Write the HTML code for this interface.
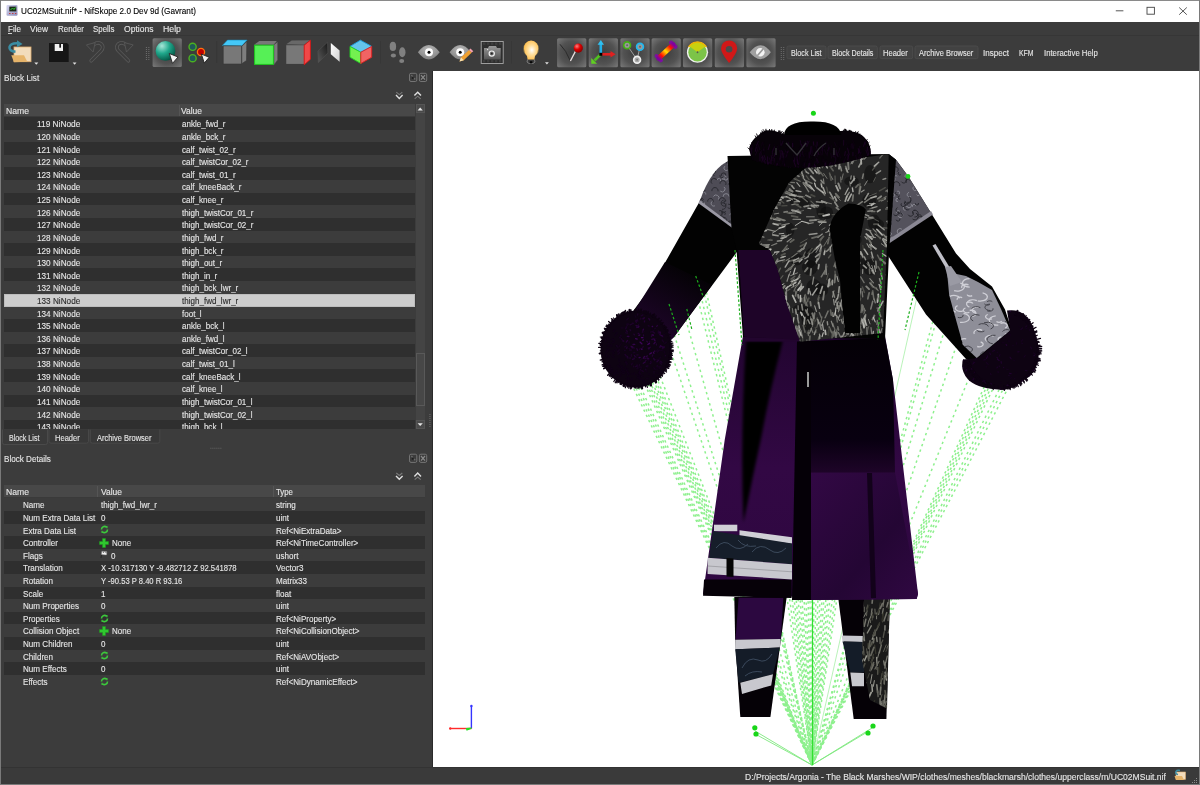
<!DOCTYPE html>
<html><head><meta charset="utf-8">
<style>
*{margin:0;padding:0;box-sizing:border-box}
html,body{width:1200px;height:785px;overflow:hidden;background:#3c3c3c;font-family:"Liberation Sans",sans-serif;position:relative}
.a{position:absolute}
.t{position:absolute;white-space:nowrap;transform-origin:0 0;-webkit-text-stroke:0.12px currentColor}
svg{position:absolute;overflow:visible}
</style></head><body>
<div class="a" style="left:0.00px;top:0.00px;width:1200.00px;height:22.00px;background:#ffffff;"></div>
<svg style="left:0;top:0" width="30" height="22">
<defs><linearGradient id="tig" x1="0" y1="0" x2="1" y2="1"><stop offset="0" stop-color="#d8d8f0"/><stop offset="1" stop-color="#8a8ab8"/></linearGradient></defs>
<path d="M6.5 6 Q6.5 5 7.5 5 L16.5 5 Q17.5 5 17.5 6 L17.5 14.5 Q17.5 15.8 16.3 15.8 L7.6 15.8 Q6.5 15.8 6.5 14.5 Z" fill="url(#tig)"/>
<rect x="9.3" y="6.6" width="7" height="4.8" fill="#1a2a1a"/>
<path d="M10.5 10 L12.5 8 L14 9.5 L15.5 7.5" stroke="#30d030" stroke-width="1" fill="none"/>
<path d="M9 13.5 L10.5 13.5 M12 13.5 L13.5 13.5 M15 13.5 L16.3 13.5" stroke="#c04040" stroke-width="1"/>
</svg>
<div class="t" style="left:21.00px;top:6.92px;font-size:8.60px;line-height:8.60px;color:#000000;transform:scaleX(0.9510);">UC02MSuit.nif* - NifSkope 2.0 Dev 9d (Gavrant)</div>
<svg style="left:0;top:0" width="1200" height="22"><line x1="1115.8" y1="10.8" x2="1123.4" y2="10.8" stroke="#444" stroke-width="0.9"/><rect x="1147" y="7.3" width="7.4" height="6.9" fill="none" stroke="#444" stroke-width="0.9"/><path d="M1179.2 7.5 L1186.8 14.7 M1186.8 7.5 L1179.2 14.7" stroke="#444" stroke-width="0.9"/></svg>
<div class="t" style="left:7.50px;top:24.92px;font-size:8.60px;line-height:8.60px;color:#e6e6e6;transform:scaleX(0.9381);">File</div>
<div class="t" style="left:30.00px;top:24.92px;font-size:8.60px;line-height:8.60px;color:#e6e6e6;transform:scaleX(0.9738);">View</div>
<div class="t" style="left:57.50px;top:24.92px;font-size:8.60px;line-height:8.60px;color:#e6e6e6;transform:scaleX(0.9218);">Render</div>
<div class="t" style="left:93.00px;top:24.92px;font-size:8.60px;line-height:8.60px;color:#e6e6e6;transform:scaleX(0.9179);">Spells</div>
<div class="t" style="left:124.00px;top:24.92px;font-size:8.60px;line-height:8.60px;color:#e6e6e6;transform:scaleX(0.9954);">Options</div>
<div class="t" style="left:163.00px;top:24.92px;font-size:8.60px;line-height:8.60px;color:#e6e6e6;transform:scaleX(1.0177);">Help</div>
<div class="a" style="left:8.00px;top:32.60px;width:4.00px;height:0.80px;background:#d0d0d0;"></div>
<div class="a" style="left:1.00px;top:35.00px;width:1198.00px;height:1.00px;background:#363636;"></div>
<svg style="left:0;top:0" width="1200" height="72" viewBox="0 0 1200 72">
<defs>
<radialGradient id="btng" cx="0.5" cy="0.5" r="0.72">
 <stop offset="0" stop-color="#3e3e3e"/><stop offset="0.55" stop-color="#525252"/><stop offset="1" stop-color="#7c7c7c"/>
</radialGradient>
<radialGradient id="sph" cx="0.32" cy="0.25" r="0.85">
 <stop offset="0" stop-color="#a8e6d8"/><stop offset="0.45" stop-color="#20a88c"/><stop offset="1" stop-color="#004a3a"/>
</radialGradient>
<linearGradient id="pnl1" x1="1" y1="0" x2="0" y2="1"><stop offset="0" stop-color="#181818"/><stop offset="1" stop-color="#5a5a5a"/></linearGradient>
<linearGradient id="pnl2" x1="0" y1="0" x2="1" y2="1"><stop offset="0" stop-color="#ffffff"/><stop offset="1" stop-color="#d0d0d0"/></linearGradient>
<radialGradient id="eyeg" cx="0.5" cy="0.3" r="0.7"><stop offset="0" stop-color="#b8b8b8"/><stop offset="1" stop-color="#808080"/></radialGradient>
<linearGradient id="camg" x1="0" y1="0" x2="0" y2="1"><stop offset="0" stop-color="#9a9a9a"/><stop offset="1" stop-color="#555"/></linearGradient>
<radialGradient id="bulbg" cx="0.55" cy="0.5" r="0.55"><stop offset="0" stop-color="#ffffff"/><stop offset="0.45" stop-color="#ffe0a0"/><stop offset="1" stop-color="#ffc050"/></radialGradient>
<radialGradient id="balg" cx="0.35" cy="0.3" r="0.7"><stop offset="0" stop-color="#ff8080"/><stop offset="0.5" stop-color="#e00000"/><stop offset="1" stop-color="#900000"/></radialGradient>
<linearGradient id="boneg" x1="0" y1="1" x2="1" y2="0"><stop offset="0" stop-color="#8000a0"/><stop offset="0.2" stop-color="#ff1000"/><stop offset="0.5" stop-color="#ffe000"/><stop offset="0.8" stop-color="#ff1000"/><stop offset="1" stop-color="#8000a0"/></linearGradient>
</defs>
<rect x="14" y="47" width="17" height="14.7" fill="#f2dcbc" stroke="#e2b070" stroke-width="0.8"/>
<path d="M11.3 55.3 L24 55.3 L27.3 61.7 L14 62.3 Z" fill="#e6b46a"/>
<path d="M15.5 51.8 Q9 51 9.5 47 Q10.5 43 17.5 43.3" fill="none" stroke="#3a8ca2" stroke-width="2.6"/>
<path d="M17 40.2 L22.5 44 L17 47.2 Z" fill="#3a8ca2"/>
<path d="M34.3 62.6 L38.3 62.6 L36.3 64.8 Z" fill="#e0e0e0"/>
<path d="M49 43 L67 43 L68.7 44.8 L68.7 62 L49 62 Z" fill="#161616"/>
<rect x="54.7" y="44" width="8.3" height="7" fill="#efefef"/>
<rect x="59.3" y="44" width="1.7" height="3.7" fill="#161616"/>
<path d="M72.7 62.6 L76.5 62.6 L74.6 64.8 Z" fill="#e0e0e0"/>
<g fill="none" stroke-linecap="round" stroke-linejoin="round"><path d="M91.2 60.8 L101.2 50.8 Q104.2 47.3 101.5 44.2 Q98 41.2 93.8 44.6" stroke="#5a5a5a" stroke-width="3.6"/><path d="M91.2 60.8 L101.2 50.8 Q104.2 47.3 101.5 44.2 Q98 41.2 93.8 44.6" stroke="#3c3c3c" stroke-width="2"/><path d="M86.8 44.8 L95.2 42.6 L93.2 51.6 Z" fill="#3c3c3c" stroke="#5a5a5a" stroke-width="0.8"/><g transform="translate(219.6 0) scale(-1 1)"><path d="M91.2 60.8 L101.2 50.8 Q104.2 47.3 101.5 44.2 Q98 41.2 93.8 44.6" stroke="#5a5a5a" stroke-width="3.6"/><path d="M91.2 60.8 L101.2 50.8 Q104.2 47.3 101.5 44.2 Q98 41.2 93.8 44.6" stroke="#3c3c3c" stroke-width="2"/><path d="M86.8 44.8 L95.2 42.6 L93.2 51.6 Z" fill="#3c3c3c" stroke="#5a5a5a" stroke-width="0.8"/></g></g>
<rect x="145.9" y="47.0" width="0.9" height="0.9" fill="#7c7c7c"/><rect x="148.4" y="47.0" width="0.9" height="0.9" fill="#7c7c7c"/><rect x="145.9" y="49.0" width="0.9" height="0.9" fill="#7c7c7c"/><rect x="148.4" y="49.0" width="0.9" height="0.9" fill="#7c7c7c"/><rect x="145.9" y="51.0" width="0.9" height="0.9" fill="#7c7c7c"/><rect x="148.4" y="51.0" width="0.9" height="0.9" fill="#7c7c7c"/><rect x="145.9" y="53.0" width="0.9" height="0.9" fill="#7c7c7c"/><rect x="148.4" y="53.0" width="0.9" height="0.9" fill="#7c7c7c"/><rect x="145.9" y="55.0" width="0.9" height="0.9" fill="#7c7c7c"/><rect x="148.4" y="55.0" width="0.9" height="0.9" fill="#7c7c7c"/><rect x="145.9" y="57.0" width="0.9" height="0.9" fill="#7c7c7c"/><rect x="148.4" y="57.0" width="0.9" height="0.9" fill="#7c7c7c"/><rect x="145.9" y="59.0" width="0.9" height="0.9" fill="#7c7c7c"/><rect x="148.4" y="59.0" width="0.9" height="0.9" fill="#7c7c7c"/>
<rect x="152.6" y="38.3" width="29.2" height="28.6" rx="1.5" fill="url(#btng)"/>
<circle cx="165.5" cy="50.9" r="9.9" fill="url(#sph)"/>
<path d="M169.3 53.5 L178 57 L172.5 63.4 Z" fill="#f4f4f4" stroke="#202020" stroke-width="0.9" stroke-linejoin="round"/>
<circle cx="192.6" cy="46.8" r="3.6" fill="#1e5a58" stroke="#4cb020" stroke-width="1.4"/>
<circle cx="192.6" cy="58.2" r="3.6" fill="#1e5a58" stroke="#4cb020" stroke-width="1.4"/>
<circle cx="201" cy="52" r="3.6" fill="#c00000" stroke="#ff7010" stroke-width="1.3"/>
<path d="M201.3 54 L209.2 57.3 L204.3 63.1 Z" fill="#f0f0f0" stroke="#202020" stroke-width="0.9" stroke-linejoin="round"/>
<rect x="216.3" y="41" width="0.8" height="22" fill="#363636"/>
<path d="M222.3 45.6 L227.5 40.1 L247.1 40.1 L241.8 45.9 Z" fill="#44c8f8" stroke="#1a90c0" stroke-width="0.6"/>
<rect x="223.2" y="45.9" width="18.3" height="18.1" fill="#787878" stroke="#383838" stroke-width="0.6"/>
<path d="M241.8 46.2 L246.8 41.5 L246.5 60.5 L241.8 63.7 Z" fill="#7e7e7e" stroke="#383838" stroke-width="0.6"/>
<path d="M254.1 44.75 L259.3 41 L276.8 41 L273.9 44.75 Z" fill="#787878"/>
<path d="M273.9 44.75 L277.7 41.8 L277.7 59.9 L273.9 64.9 Z" fill="#7c7c7c" stroke="#404040" stroke-width="0.5"/>
<rect x="254.6" y="45.2" width="18.8" height="19.2" fill="#56f056" stroke="#1ec81e" stroke-width="1"/>
<path d="M286.25 44.3 L291.7 40.6 L310 40.2 L304.2 44.75 Z" fill="#686868"/>
<rect x="286.25" y="45.2" width="17.95" height="18.7" fill="#787878"/>
<path d="M304.2 45.2 L310.4 40.2 L310.4 59.3 L304.2 64.75 Z" fill="#f04848" stroke="#e01010" stroke-width="0.8"/>
<path d="M317.9 51 L327.5 42.25 L327.9 53 L318.3 62.7 Z" fill="url(#pnl1)" stroke="#505050" stroke-width="0.6"/>
<path d="M330.8 43 L339.6 50.6 L339.6 61.8 L330.8 54.3 Z" fill="url(#pnl2)"/>
<path d="M350 46.4 L360.4 40.2 L371.7 46.4 L360.8 52.25 Z" fill="#64c4ec" stroke="#1aa0e0" stroke-width="0.9"/>
<path d="M350 46.4 L360.8 52.25 L360.8 63.5 L350 57.25 Z" fill="#74f050" stroke="#20d020" stroke-width="0.9"/>
<path d="M360.8 52.25 L371.7 46.4 L371.7 57.25 L360.8 63.5 Z" fill="#f06464" stroke="#e02020" stroke-width="0.9"/>
<rect x="380.2" y="41" width="0.8" height="22.5" fill="#363636"/>
<g fill="#808080"><ellipse cx="392.9" cy="46.4" rx="3.2" ry="4.6"/><ellipse cx="393.4" cy="55.5" rx="2.6" ry="2"/><ellipse cx="402.3" cy="52.3" rx="3.2" ry="5"/><ellipse cx="401.7" cy="61" rx="2.5" ry="2"/></g>
<path d="M417.9 52.3 Q428.8 37.9 439.7 52.3 Q428.8 66.7 417.9 52.3 Z" fill="url(#eyeg)"/>
<circle cx="429" cy="52.3" r="4" fill="#fff"/><circle cx="429" cy="52.3" r="1.5" fill="#000"/>
<path d="M449.6 52.3 Q460.2 37.9 470.8 52.3 Q460.2 66.7 449.6 52.3 Z" fill="url(#eyeg)"/>
<circle cx="460.2" cy="52.3" r="4" fill="#fff"/><circle cx="460.2" cy="52.3" r="1.5" fill="#000"/>
<path d="M459.5 61.5 L461 57.5 L469 50 L471.8 52.6 L463.8 60.2 Z" fill="#f0a030"/>
<path d="M469 50 L470.5 48.6 L473.3 51.2 L471.8 52.6 Z" fill="#f4a0b0"/>
<path d="M459.5 61.5 L461 57.5 L463.8 60.2 Z" fill="#f8e0b0"/>
<rect x="481.2" y="41.5" width="22" height="22" fill="#2e2e2e" stroke="#a8a8a8" stroke-width="0.9"/>
<g fill="#3e3e3e"><rect x="483.0" y="42.5" width="2.4" height="2.4"/><rect x="483.0" y="60" width="2.4" height="2.4"/><rect x="487.0" y="42.5" width="2.4" height="2.4"/><rect x="487.0" y="60" width="2.4" height="2.4"/><rect x="491.0" y="42.5" width="2.4" height="2.4"/><rect x="491.0" y="60" width="2.4" height="2.4"/><rect x="495.0" y="42.5" width="2.4" height="2.4"/><rect x="495.0" y="60" width="2.4" height="2.4"/><rect x="499.0" y="42.5" width="2.4" height="2.4"/><rect x="499.0" y="60" width="2.4" height="2.4"/></g>
<path d="M484 48 L488 48 L489 46 L496 46 L497 48 L500.7 48 L500.7 59.5 L484 59.5 Z" fill="url(#camg)"/>
<circle cx="491.75" cy="53.6" r="2.6" fill="none" stroke="#f0f0f0" stroke-width="1.2"/><circle cx="491.75" cy="53.6" r="1" fill="#222"/>
<rect x="487" y="49" width="1.2" height="1.2" fill="#ddd"/>
<rect x="511" y="41" width="0.8" height="22.5" fill="#363636"/>
<path d="M527.6 59.5 L527 62 L529 63.5 L533 63.5 L535 62 L534.4 59.5" fill="none" stroke="#8a8a8a" stroke-width="0.8"/>
<rect x="529.8" y="61.2" width="2.5" height="2.2" fill="#050505"/>
<circle cx="531.1" cy="49" r="8" fill="#ffd060" opacity="0.35"/>
<path d="M524 49 A7.2 7.2 0 1 1 538.2 49 Q538 53 535 56 L534.4 59.5 L527.6 59.5 L527 56 Q524.2 53 524 49 Z" fill="url(#bulbg)"/>
<path d="M545 62.3 L548.8 62.3 L546.9 64.5 Z" fill="#e0e0e0"/>
<rect x="557.10" y="38.3" width="29.2" height="29" rx="1.5" fill="url(#btng)"/>
<rect x="588.75" y="38.3" width="29.2" height="29" rx="1.5" fill="url(#btng)"/>
<rect x="620.40" y="38.3" width="29.2" height="29" rx="1.5" fill="url(#btng)"/>
<rect x="651.60" y="38.3" width="29.2" height="29" rx="1.5" fill="url(#btng)"/>
<rect x="683.00" y="38.3" width="29.2" height="29" rx="1.5" fill="url(#btng)"/>
<rect x="714.80" y="38.3" width="29.2" height="29" rx="1.5" fill="url(#btng)"/>
<rect x="746.40" y="38.3" width="29.2" height="29" rx="1.5" fill="url(#btng)"/>
<path d="M560 44.3 Q566 50 570.4 61" fill="none" stroke="#2a2a2a" stroke-width="1"/>
<path d="M570.4 61 L575.4 51.4" stroke="#e8e0e0" stroke-width="1.3"/>
<circle cx="578.3" cy="48.1" r="4.6" fill="url(#balg)"/>
<path d="M600.8 54.3 L600.8 43.5" stroke="#20b0e8" stroke-width="2.6"/><path d="M597.6 44.8 L600.8 40 L604 44.8 Z" fill="#30c0f0"/>
<path d="M600.8 54.3 L611.5 54.3" stroke="#e02020" stroke-width="2.6"/><path d="M610.5 51 L615.6 54.3 L610.5 57.6 Z" fill="#e02020"/>
<path d="M600.8 54.3 L594.5 60.5" stroke="#50c020" stroke-width="2.6"/><path d="M591.2 58 L591.3 63.8 L597 63.8 Z" fill="#60d020"/>
<rect x="599.3" y="52.8" width="3" height="3" fill="#000"/>
<path d="M627.1 45.2 L637.1 59.75 L640 46.8" fill="none" stroke="#a8a8a8" stroke-width="0.9"/>
<circle cx="627.1" cy="45.2" r="3.4" fill="#9a9a9a" stroke="#44b014" stroke-width="1.7"/><circle cx="627.1" cy="45.2" r="1" fill="#666"/>
<circle cx="640" cy="46.8" r="3.4" fill="#9a9a9a" stroke="#20b8f0" stroke-width="1.7"/><circle cx="640" cy="46.8" r="1" fill="#666"/>
<circle cx="637.1" cy="59.75" r="3.4" fill="#aaa" stroke="#f0f0f0" stroke-width="1.7"/><circle cx="637.1" cy="59.75" r="1" fill="#777"/>
<g fill="#7a10a0"><circle cx="656.6" cy="56" r="2.1"/><circle cx="660.8" cy="60.3" r="2.1"/><circle cx="671.1" cy="42.6" r="2.1"/><circle cx="675.4" cy="46.8" r="2.1"/></g>
<path d="M658.7 58.2 L673.2 44.7" stroke="url(#boneg)" stroke-width="5" stroke-linecap="round"/>
<circle cx="697.5" cy="52.25" r="10.6" fill="#f0f0f0"/>
<circle cx="697.5" cy="52.25" r="9.2" fill="#7cc448"/>
<path d="M697.5 52.25 L689.4 46.2 A9.6 9.6 0 0 1 705.6 46.2 Z" fill="#c8d010"/>
<path d="M688.6 47 A10.6 10.6 0 0 1 706.4 47" fill="none" stroke="#f0b000" stroke-width="1.4"/>
<circle cx="697.5" cy="52.25" r="0.9" fill="#555"/>
<path d="M729.1 63 Q721 53 721 48.5 A8.1 8.1 0 0 1 737.2 48.5 Q737.2 53 729.1 63 Z" fill="#d01818"/>
<circle cx="729.1" cy="49.2" r="3.3" fill="#4a4a4a"/>
<path d="M749.7 52.25 Q760.5 38 770.8 52.25 Q760.5 66 749.7 52.25 Z" fill="#a0a0a0"/>
<circle cx="760.3" cy="52.25" r="4.3" fill="#f4f4f4"/>
<path d="M757.3 55.8 L763.5 48.6" stroke="#9a9a9a" stroke-width="1.6"/>
<rect x="780.8" y="47.0" width="0.9" height="0.9" fill="#7c7c7c"/><rect x="783.3" y="47.0" width="0.9" height="0.9" fill="#7c7c7c"/><rect x="780.8" y="49.0" width="0.9" height="0.9" fill="#7c7c7c"/><rect x="783.3" y="49.0" width="0.9" height="0.9" fill="#7c7c7c"/><rect x="780.8" y="51.0" width="0.9" height="0.9" fill="#7c7c7c"/><rect x="783.3" y="51.0" width="0.9" height="0.9" fill="#7c7c7c"/><rect x="780.8" y="53.0" width="0.9" height="0.9" fill="#7c7c7c"/><rect x="783.3" y="53.0" width="0.9" height="0.9" fill="#7c7c7c"/><rect x="780.8" y="55.0" width="0.9" height="0.9" fill="#7c7c7c"/><rect x="783.3" y="55.0" width="0.9" height="0.9" fill="#7c7c7c"/><rect x="780.8" y="57.0" width="0.9" height="0.9" fill="#7c7c7c"/><rect x="783.3" y="57.0" width="0.9" height="0.9" fill="#7c7c7c"/><rect x="780.8" y="59.0" width="0.9" height="0.9" fill="#7c7c7c"/><rect x="783.3" y="59.0" width="0.9" height="0.9" fill="#7c7c7c"/>
<rect x="786.90" y="46" width="39.10" height="12.7" rx="1.8" fill="#424242" stroke="#4e4e4e" stroke-width="0.8"/>
<rect x="828.00" y="46" width="49.30" height="12.7" rx="1.8" fill="#424242" stroke="#4e4e4e" stroke-width="0.8"/>
<rect x="880.00" y="46" width="32.70" height="12.7" rx="1.8" fill="#424242" stroke="#4e4e4e" stroke-width="0.8"/>
<rect x="915.00" y="46" width="63.00" height="12.7" rx="1.8" fill="#424242" stroke="#4e4e4e" stroke-width="0.8"/>
</svg>
<div class="t" style="left:790.80px;top:48.87px;font-size:8.30px;line-height:8.30px;color:#e6e6e6;transform:scaleX(0.8615);">Block List</div>
<div class="t" style="left:831.70px;top:48.87px;font-size:8.30px;line-height:8.30px;color:#e6e6e6;transform:scaleX(0.8630);">Block Details</div>
<div class="t" style="left:883.00px;top:48.87px;font-size:8.30px;line-height:8.30px;color:#e6e6e6;transform:scaleX(0.9110);">Header</div>
<div class="t" style="left:918.70px;top:48.87px;font-size:8.30px;line-height:8.30px;color:#e6e6e6;transform:scaleX(0.8987);">Archive Browser</div>
<div class="t" style="left:983.30px;top:48.87px;font-size:8.30px;line-height:8.30px;color:#e6e6e6;transform:scaleX(0.9678);">Inspect</div>
<div class="t" style="left:1019.20px;top:48.87px;font-size:8.30px;line-height:8.30px;color:#e6e6e6;transform:scaleX(0.8276);">KFM</div>
<div class="t" style="left:1044.20px;top:48.87px;font-size:8.30px;line-height:8.30px;color:#e6e6e6;transform:scaleX(0.9329);">Interactive Help</div>
<div class="t" style="left:3.60px;top:73.88px;font-size:9.00px;line-height:9.00px;color:#e6e6e6;transform:scaleX(0.9140);">Block List</div>
<svg style="left:0;top:0" width="432" height="785">
<rect x="409.5" y="73.30" width="7.3" height="8.2" rx="1.5" fill="none" stroke="#7a7a7a" stroke-width="0.9"/>
<path d="M411.3 75.10 L412.6 76.40 M414.2 78.10 L415.2 79.50" stroke="#6a6a6a" stroke-width="1.3"/>
<circle cx="412.7" cy="77.90" r="1" fill="#1e1e1e"/>
<rect x="419.4" y="73.30" width="7.3" height="8.2" rx="1.5" fill="none" stroke="#7a7a7a" stroke-width="0.9"/>
<path d="M421 75.10 L425 79.70 M425 75.10 L421 79.70" stroke="#8a8a8a" stroke-width="1.2"/>
<path d="M396.3 92.10 L399.3 94.60 L402.3 92.10" fill="none" stroke="#7a7a7a" stroke-width="1.1"/>
<path d="M396 95.10 L399.3 98.40 L402.6 95.10" fill="none" stroke="#e0e0e0" stroke-width="1.4"/>
<path d="M414.4 95.60 L417.7 92.20 L421 95.60" fill="none" stroke="#e0e0e0" stroke-width="1.4"/>
<path d="M414.7 98.80 L417.7 96.20 L420.7 98.80" fill="none" stroke="#7a7a7a" stroke-width="1.1"/>
</svg>
<div class="a" style="left:4.00px;top:104.00px;width:411.00px;height:13.00px;background:#484848;"></div>
<div class="a" style="left:4.00px;top:116.30px;width:411.00px;height:0.80px;background:#3a3a3a;"></div>
<div class="a" style="left:179.00px;top:105.00px;width:1.00px;height:11.00px;background:#555555;"></div>
<div class="t" style="left:5.50px;top:107.56px;font-size:8.20px;line-height:8.20px;color:#e6e6e6;transform:scaleX(1.0515);">Name</div>
<div class="t" style="left:180.50px;top:107.56px;font-size:8.20px;line-height:8.20px;color:#e6e6e6;transform:scaleX(1.0313);">Value</div>
<div class="a" style="left:0;top:117px;width:432px;height:312px;overflow:hidden">
<div class="a" style="left:4.00px;top:0.00px;width:411.00px;height:12.62px;background:#2f2f2f;"></div>
<div class="t" style="left:36.80px;top:3.32px;font-size:8.60px;line-height:8.60px;color:#e6e6e6;transform:scaleX(0.9669);">119 NiNode</div>
<div class="t" style="left:181.60px;top:3.32px;font-size:8.60px;line-height:8.60px;color:#e6e6e6;transform:scaleX(0.9350);">ankle_fwd_r</div>
<div class="t" style="left:36.80px;top:15.94px;font-size:8.60px;line-height:8.60px;color:#e6e6e6;transform:scaleX(0.9534);">120 NiNode</div>
<div class="t" style="left:181.60px;top:15.94px;font-size:8.60px;line-height:8.60px;color:#e6e6e6;transform:scaleX(0.9350);">ankle_bck_r</div>
<div class="a" style="left:4.00px;top:25.24px;width:411.00px;height:12.62px;background:#2f2f2f;"></div>
<div class="t" style="left:36.80px;top:28.56px;font-size:8.60px;line-height:8.60px;color:#e6e6e6;transform:scaleX(0.9534);">121 NiNode</div>
<div class="t" style="left:181.60px;top:28.56px;font-size:8.60px;line-height:8.60px;color:#e6e6e6;transform:scaleX(0.9350);">calf_twist_02_r</div>
<div class="t" style="left:36.80px;top:41.18px;font-size:8.60px;line-height:8.60px;color:#e6e6e6;transform:scaleX(0.9534);">122 NiNode</div>
<div class="t" style="left:181.60px;top:41.18px;font-size:8.60px;line-height:8.60px;color:#e6e6e6;transform:scaleX(0.9350);">calf_twistCor_02_r</div>
<div class="a" style="left:4.00px;top:50.48px;width:411.00px;height:12.62px;background:#2f2f2f;"></div>
<div class="t" style="left:36.80px;top:53.80px;font-size:8.60px;line-height:8.60px;color:#e6e6e6;transform:scaleX(0.9534);">123 NiNode</div>
<div class="t" style="left:181.60px;top:53.80px;font-size:8.60px;line-height:8.60px;color:#e6e6e6;transform:scaleX(0.9350);">calf_twist_01_r</div>
<div class="t" style="left:36.80px;top:66.42px;font-size:8.60px;line-height:8.60px;color:#e6e6e6;transform:scaleX(0.9534);">124 NiNode</div>
<div class="t" style="left:181.60px;top:66.42px;font-size:8.60px;line-height:8.60px;color:#e6e6e6;transform:scaleX(0.9350);">calf_kneeBack_r</div>
<div class="a" style="left:4.00px;top:75.72px;width:411.00px;height:12.62px;background:#2f2f2f;"></div>
<div class="t" style="left:36.80px;top:79.04px;font-size:8.60px;line-height:8.60px;color:#e6e6e6;transform:scaleX(0.9534);">125 NiNode</div>
<div class="t" style="left:181.60px;top:79.04px;font-size:8.60px;line-height:8.60px;color:#e6e6e6;transform:scaleX(0.9350);">calf_knee_r</div>
<div class="t" style="left:36.80px;top:91.66px;font-size:8.60px;line-height:8.60px;color:#e6e6e6;transform:scaleX(0.9534);">126 NiNode</div>
<div class="t" style="left:181.60px;top:91.66px;font-size:8.60px;line-height:8.60px;color:#e6e6e6;transform:scaleX(0.9350);">thigh_twistCor_01_r</div>
<div class="a" style="left:4.00px;top:100.96px;width:411.00px;height:12.62px;background:#2f2f2f;"></div>
<div class="t" style="left:36.80px;top:104.28px;font-size:8.60px;line-height:8.60px;color:#e6e6e6;transform:scaleX(0.9534);">127 NiNode</div>
<div class="t" style="left:181.60px;top:104.28px;font-size:8.60px;line-height:8.60px;color:#e6e6e6;transform:scaleX(0.9350);">thigh_twistCor_02_r</div>
<div class="t" style="left:36.80px;top:116.90px;font-size:8.60px;line-height:8.60px;color:#e6e6e6;transform:scaleX(0.9534);">128 NiNode</div>
<div class="t" style="left:181.60px;top:116.90px;font-size:8.60px;line-height:8.60px;color:#e6e6e6;transform:scaleX(0.9350);">thigh_fwd_r</div>
<div class="a" style="left:4.00px;top:126.20px;width:411.00px;height:12.62px;background:#2f2f2f;"></div>
<div class="t" style="left:36.80px;top:129.52px;font-size:8.60px;line-height:8.60px;color:#e6e6e6;transform:scaleX(0.9534);">129 NiNode</div>
<div class="t" style="left:181.60px;top:129.52px;font-size:8.60px;line-height:8.60px;color:#e6e6e6;transform:scaleX(0.9350);">thigh_bck_r</div>
<div class="t" style="left:36.80px;top:142.14px;font-size:8.60px;line-height:8.60px;color:#e6e6e6;transform:scaleX(0.9534);">130 NiNode</div>
<div class="t" style="left:181.60px;top:142.14px;font-size:8.60px;line-height:8.60px;color:#e6e6e6;transform:scaleX(0.9350);">thigh_out_r</div>
<div class="a" style="left:4.00px;top:151.44px;width:411.00px;height:12.62px;background:#2f2f2f;"></div>
<div class="t" style="left:36.80px;top:154.76px;font-size:8.60px;line-height:8.60px;color:#e6e6e6;transform:scaleX(0.9534);">131 NiNode</div>
<div class="t" style="left:181.60px;top:154.76px;font-size:8.60px;line-height:8.60px;color:#e6e6e6;transform:scaleX(0.9350);">thigh_in_r</div>
<div class="t" style="left:36.80px;top:167.38px;font-size:8.60px;line-height:8.60px;color:#e6e6e6;transform:scaleX(0.9534);">132 NiNode</div>
<div class="t" style="left:181.60px;top:167.38px;font-size:8.60px;line-height:8.60px;color:#e6e6e6;transform:scaleX(0.9350);">thigh_bck_lwr_r</div>
<div class="a" style="left:4.00px;top:176.68px;width:411.00px;height:12.92px;background:#cdcdcd;border:1px solid #bdbdbd;"></div>
<div class="t" style="left:36.80px;top:180.00px;font-size:8.60px;line-height:8.60px;color:#2a2a2a;transform:scaleX(0.9534);">133 NiNode</div>
<div class="t" style="left:181.60px;top:180.00px;font-size:8.60px;line-height:8.60px;color:#2a2a2a;transform:scaleX(0.9350);">thigh_fwd_lwr_r</div>
<div class="t" style="left:36.80px;top:192.62px;font-size:8.60px;line-height:8.60px;color:#e6e6e6;transform:scaleX(0.9534);">134 NiNode</div>
<div class="t" style="left:181.60px;top:192.62px;font-size:8.60px;line-height:8.60px;color:#e6e6e6;transform:scaleX(0.9350);">foot_l</div>
<div class="a" style="left:4.00px;top:201.92px;width:411.00px;height:12.62px;background:#2f2f2f;"></div>
<div class="t" style="left:36.80px;top:205.24px;font-size:8.60px;line-height:8.60px;color:#e6e6e6;transform:scaleX(0.9534);">135 NiNode</div>
<div class="t" style="left:181.60px;top:205.24px;font-size:8.60px;line-height:8.60px;color:#e6e6e6;transform:scaleX(0.9350);">ankle_bck_l</div>
<div class="t" style="left:36.80px;top:217.86px;font-size:8.60px;line-height:8.60px;color:#e6e6e6;transform:scaleX(0.9534);">136 NiNode</div>
<div class="t" style="left:181.60px;top:217.86px;font-size:8.60px;line-height:8.60px;color:#e6e6e6;transform:scaleX(0.9350);">ankle_fwd_l</div>
<div class="a" style="left:4.00px;top:227.16px;width:411.00px;height:12.62px;background:#2f2f2f;"></div>
<div class="t" style="left:36.80px;top:230.48px;font-size:8.60px;line-height:8.60px;color:#e6e6e6;transform:scaleX(0.9534);">137 NiNode</div>
<div class="t" style="left:181.60px;top:230.48px;font-size:8.60px;line-height:8.60px;color:#e6e6e6;transform:scaleX(0.9350);">calf_twistCor_02_l</div>
<div class="t" style="left:36.80px;top:243.10px;font-size:8.60px;line-height:8.60px;color:#e6e6e6;transform:scaleX(0.9534);">138 NiNode</div>
<div class="t" style="left:181.60px;top:243.10px;font-size:8.60px;line-height:8.60px;color:#e6e6e6;transform:scaleX(0.9350);">calf_twist_01_l</div>
<div class="a" style="left:4.00px;top:252.40px;width:411.00px;height:12.62px;background:#2f2f2f;"></div>
<div class="t" style="left:36.80px;top:255.72px;font-size:8.60px;line-height:8.60px;color:#e6e6e6;transform:scaleX(0.9534);">139 NiNode</div>
<div class="t" style="left:181.60px;top:255.72px;font-size:8.60px;line-height:8.60px;color:#e6e6e6;transform:scaleX(0.9350);">calf_kneeBack_l</div>
<div class="t" style="left:36.80px;top:268.34px;font-size:8.60px;line-height:8.60px;color:#e6e6e6;transform:scaleX(0.9534);">140 NiNode</div>
<div class="t" style="left:181.60px;top:268.34px;font-size:8.60px;line-height:8.60px;color:#e6e6e6;transform:scaleX(0.9350);">calf_knee_l</div>
<div class="a" style="left:4.00px;top:277.64px;width:411.00px;height:12.62px;background:#2f2f2f;"></div>
<div class="t" style="left:36.80px;top:280.96px;font-size:8.60px;line-height:8.60px;color:#e6e6e6;transform:scaleX(0.9534);">141 NiNode</div>
<div class="t" style="left:181.60px;top:280.96px;font-size:8.60px;line-height:8.60px;color:#e6e6e6;transform:scaleX(0.9350);">thigh_twistCor_01_l</div>
<div class="t" style="left:36.80px;top:293.58px;font-size:8.60px;line-height:8.60px;color:#e6e6e6;transform:scaleX(0.9534);">142 NiNode</div>
<div class="t" style="left:181.60px;top:293.58px;font-size:8.60px;line-height:8.60px;color:#e6e6e6;transform:scaleX(0.9350);">thigh_twistCor_02_l</div>
<div class="a" style="left:4.00px;top:302.88px;width:411.00px;height:12.62px;background:#2f2f2f;"></div>
<div class="t" style="left:36.80px;top:306.20px;font-size:8.60px;line-height:8.60px;color:#e6e6e6;transform:scaleX(0.9534);">143 NiNode</div>
<div class="t" style="left:181.60px;top:306.20px;font-size:8.60px;line-height:8.60px;color:#e6e6e6;transform:scaleX(0.9350);">thigh_bck_l</div>
</div>
<div class="a" style="left:415.50px;top:104.00px;width:9.50px;height:325.00px;background:#444444;"></div>
<div class="a" style="left:415.50px;top:104.00px;width:9.50px;height:9.00px;background:#4a4a4a;border:1px solid #555;"></div>
<div class="a" style="left:415.50px;top:352.70px;width:9.30px;height:53.00px;background:#474747;border:1px solid #595959;"></div>
<div class="a" style="left:415.50px;top:420.00px;width:9.50px;height:9.00px;background:#4a4a4a;border:1px solid #555;"></div>
<svg style="left:0;top:0" width="432" height="440"><path d="M417.6 110.5 L420.2 107.6 L422.8 110.5 Z" fill="#e8e8e8"/><path d="M417.6 423.2 L420.2 426.1 L422.8 423.2 Z" fill="#e8e8e8"/></svg>
<svg style="left:0;top:0" width="432" height="460">
<path d="M2.5 429.5 L2.5 442.5 Q2.5 444.5 4.5 444.5 L45.5 444.5 Q47.5 444.5 47.5 442.5 L47.5 429.5" fill="#3a3a3a" stroke="#4c4c4c" stroke-width="0.9"/>
<path d="M49 429.5 L49 441.3 Q49 443.1 51 443.1 L86.5 443.1 Q88.5 443.1 88.5 441.3 L88.5 429.5" fill="#383838" stroke="#4a4a4a" stroke-width="0.9"/>
<path d="M90.3 429.5 L90.3 441.3 Q90.3 443.1 92.3 443.1 L157.8 443.1 Q159.8 443.1 159.8 441.3 L159.8 429.5" fill="#383838" stroke="#4a4a4a" stroke-width="0.9"/>
<rect x="210.5" y="447.8" width="0.8" height="0.8" fill="#7a7a7a"/>
<rect x="212.5" y="447.8" width="0.8" height="0.8" fill="#7a7a7a"/>
<rect x="214.5" y="447.8" width="0.8" height="0.8" fill="#7a7a7a"/>
<rect x="216.5" y="447.8" width="0.8" height="0.8" fill="#7a7a7a"/>
<rect x="218.5" y="447.8" width="0.8" height="0.8" fill="#7a7a7a"/>
<rect x="220.5" y="447.8" width="0.8" height="0.8" fill="#7a7a7a"/>
<g fill="#7a7a7a"><rect x="429.5" y="414.0" width="0.9" height="0.9"/><rect x="429.5" y="416.0" width="0.9" height="0.9"/><rect x="429.5" y="418.0" width="0.9" height="0.9"/><rect x="429.5" y="420.0" width="0.9" height="0.9"/><rect x="429.5" y="422.0" width="0.9" height="0.9"/><rect x="429.5" y="424.0" width="0.9" height="0.9"/><rect x="429.5" y="426.0" width="0.9" height="0.9"/></g>
</svg>
<div class="t" style="left:8.50px;top:433.59px;font-size:8.40px;line-height:8.40px;color:#e6e6e6;transform:scaleX(0.8485);">Block List</div>
<div class="t" style="left:55.20px;top:433.59px;font-size:8.40px;line-height:8.40px;color:#e6e6e6;transform:scaleX(0.9001);">Header</div>
<div class="t" style="left:97.00px;top:433.59px;font-size:8.40px;line-height:8.40px;color:#e6e6e6;transform:scaleX(0.8928);">Archive Browser</div>
<div class="t" style="left:4.00px;top:455.09px;font-size:8.40px;line-height:8.40px;color:#e6e6e6;transform:scaleX(0.9680);">Block Details</div>
<svg style="left:0;top:0" width="432" height="785">
<rect x="409.5" y="454.20" width="7.3" height="8.2" rx="1.5" fill="none" stroke="#7a7a7a" stroke-width="0.9"/>
<path d="M411.3 456.00 L412.6 457.30 M414.2 459.00 L415.2 460.40" stroke="#6a6a6a" stroke-width="1.3"/>
<circle cx="412.7" cy="458.80" r="1" fill="#1e1e1e"/>
<rect x="419.4" y="454.20" width="7.3" height="8.2" rx="1.5" fill="none" stroke="#7a7a7a" stroke-width="0.9"/>
<path d="M421 456.00 L425 460.60 M425 456.00 L421 460.60" stroke="#8a8a8a" stroke-width="1.2"/>
<path d="M396.3 473.00 L399.3 475.50 L402.3 473.00" fill="none" stroke="#7a7a7a" stroke-width="1.1"/>
<path d="M396 476.00 L399.3 479.30 L402.6 476.00" fill="none" stroke="#e0e0e0" stroke-width="1.4"/>
<path d="M414.4 476.50 L417.7 473.10 L421 476.50" fill="none" stroke="#e0e0e0" stroke-width="1.4"/>
<path d="M414.7 479.70 L417.7 477.10 L420.7 479.70" fill="none" stroke="#7a7a7a" stroke-width="1.1"/>
</svg>
<div class="a" style="left:4.00px;top:484.50px;width:421.00px;height:13.00px;background:#484848;"></div>
<div class="a" style="left:4.00px;top:496.80px;width:421.00px;height:0.80px;background:#3a3a3a;"></div>
<div class="a" style="left:97.00px;top:485.50px;width:1.00px;height:11.00px;background:#555555;"></div>
<div class="a" style="left:273.00px;top:485.50px;width:1.00px;height:11.00px;background:#555555;"></div>
<div class="t" style="left:5.50px;top:488.66px;font-size:8.20px;line-height:8.20px;color:#e6e6e6;transform:scaleX(1.0515);">Name</div>
<div class="t" style="left:100.50px;top:488.66px;font-size:8.20px;line-height:8.20px;color:#e6e6e6;transform:scaleX(1.0313);">Value</div>
<div class="t" style="left:275.50px;top:488.66px;font-size:8.20px;line-height:8.20px;color:#e6e6e6;transform:scaleX(0.9563);">Type</div>
<div class="t" style="left:22.50px;top:501.42px;font-size:8.60px;line-height:8.60px;color:#e6e6e6;transform:scaleX(0.9400);">Name</div>
<div class="t" style="left:101.00px;top:501.42px;font-size:8.60px;line-height:8.60px;color:#e6e6e6;transform:scaleX(0.9300);">thigh_fwd_lwr_r</div>
<div class="t" style="left:276.00px;top:501.42px;font-size:8.60px;line-height:8.60px;color:#e6e6e6;transform:scaleX(0.9400);">string</div>
<div class="a" style="left:4.00px;top:511.00px;width:421.00px;height:12.60px;background:#2f2f2f;"></div>
<div class="t" style="left:22.50px;top:514.02px;font-size:8.60px;line-height:8.60px;color:#e6e6e6;transform:scaleX(0.9400);">Num Extra Data List</div>
<div class="t" style="left:101.00px;top:514.02px;font-size:8.60px;line-height:8.60px;color:#e6e6e6;transform:scaleX(0.9300);">0</div>
<div class="t" style="left:276.00px;top:514.02px;font-size:8.60px;line-height:8.60px;color:#e6e6e6;transform:scaleX(0.9400);">uint</div>
<div class="t" style="left:22.50px;top:526.62px;font-size:8.60px;line-height:8.60px;color:#e6e6e6;transform:scaleX(0.9400);">Extra Data List</div>
<svg style="left:100px;top:525.40px" width="9" height="9"><path d="M1.5 4.5 A3 3 0 0 1 6.5 2.2 M7.5 4.5 A3 3 0 0 1 2.5 6.8" fill="none" stroke="#3cc83c" stroke-width="1.6"/><path d="M5.3 1 L8 1.5 L7 3.8Z M3.7 8 L1 7.5 L2 5.2Z" fill="#3cc83c"/></svg>
<div class="t" style="left:276.00px;top:526.62px;font-size:8.60px;line-height:8.60px;color:#e6e6e6;transform:scaleX(0.9400);">Ref&lt;NiExtraData&gt;</div>
<div class="a" style="left:4.00px;top:536.20px;width:421.00px;height:12.60px;background:#2f2f2f;"></div>
<div class="t" style="left:22.50px;top:539.22px;font-size:8.60px;line-height:8.60px;color:#e6e6e6;transform:scaleX(0.9400);">Controller</div>
<svg style="left:99px;top:537.50px" width="10" height="10"><path d="M3.5 0.5h3v3h3v3h-3v3h-3v-3h-3v-3h3z" fill="#2fc82f" stroke="#1e9a1e" stroke-width="0.5"/></svg>
<div class="t" style="left:112.00px;top:539.22px;font-size:8.60px;line-height:8.60px;color:#e6e6e6;transform:scaleX(0.9300);">None</div>
<div class="t" style="left:276.00px;top:539.22px;font-size:8.60px;line-height:8.60px;color:#e6e6e6;transform:scaleX(0.9400);">Ref&lt;NiTimeController&gt;</div>
<div class="t" style="left:22.50px;top:551.82px;font-size:8.60px;line-height:8.60px;color:#e6e6e6;transform:scaleX(0.9400);">Flags</div>
<svg style="left:100px;top:550.30px" width="9" height="9"><path d="M1 8 L2 1" stroke="#222" stroke-width="0.8"/><path d="M1.8 1.2 L7 1.8 L6.5 5 L1.4 4.5Z" fill="#f0f0f0" stroke="#888" stroke-width="0.4"/><path d="M3 1.4 L4.3 1.6 L4 3 L2.7 2.8Z M5.5 1.7 L6.8 1.9 L6.6 3.2 L5.3 3Z" fill="#777"/></svg>
<div class="t" style="left:111.00px;top:551.82px;font-size:8.60px;line-height:8.60px;color:#e6e6e6;transform:scaleX(0.9300);">0</div>
<div class="t" style="left:276.00px;top:551.82px;font-size:8.60px;line-height:8.60px;color:#e6e6e6;transform:scaleX(0.9400);">ushort</div>
<div class="a" style="left:4.00px;top:561.40px;width:421.00px;height:12.60px;background:#2f2f2f;"></div>
<div class="t" style="left:22.50px;top:564.42px;font-size:8.60px;line-height:8.60px;color:#e6e6e6;transform:scaleX(0.9400);">Translation</div>
<div class="t" style="left:101.00px;top:564.42px;font-size:8.60px;line-height:8.60px;color:#e6e6e6;transform:scaleX(0.8971);">X -10.317130 Y -9.482712 Z 92.541878</div>
<div class="t" style="left:276.00px;top:564.42px;font-size:8.60px;line-height:8.60px;color:#e6e6e6;transform:scaleX(0.9400);">Vector3</div>
<div class="t" style="left:22.50px;top:577.02px;font-size:8.60px;line-height:8.60px;color:#e6e6e6;transform:scaleX(0.9400);">Rotation</div>
<div class="t" style="left:101.00px;top:577.02px;font-size:8.60px;line-height:8.60px;color:#e6e6e6;transform:scaleX(0.8852);">Y -90.53 P 8.40 R 93.16</div>
<div class="t" style="left:276.00px;top:577.02px;font-size:8.60px;line-height:8.60px;color:#e6e6e6;transform:scaleX(0.9400);">Matrix33</div>
<div class="a" style="left:4.00px;top:586.60px;width:421.00px;height:12.60px;background:#2f2f2f;"></div>
<div class="t" style="left:22.50px;top:589.62px;font-size:8.60px;line-height:8.60px;color:#e6e6e6;transform:scaleX(0.9400);">Scale</div>
<div class="t" style="left:101.00px;top:589.62px;font-size:8.60px;line-height:8.60px;color:#e6e6e6;transform:scaleX(0.9300);">1</div>
<div class="t" style="left:276.00px;top:589.62px;font-size:8.60px;line-height:8.60px;color:#e6e6e6;transform:scaleX(0.9400);">float</div>
<div class="t" style="left:22.50px;top:602.22px;font-size:8.60px;line-height:8.60px;color:#e6e6e6;transform:scaleX(0.9400);">Num Properties</div>
<div class="t" style="left:101.00px;top:602.22px;font-size:8.60px;line-height:8.60px;color:#e6e6e6;transform:scaleX(0.9300);">0</div>
<div class="t" style="left:276.00px;top:602.22px;font-size:8.60px;line-height:8.60px;color:#e6e6e6;transform:scaleX(0.9400);">uint</div>
<div class="a" style="left:4.00px;top:611.80px;width:421.00px;height:12.60px;background:#2f2f2f;"></div>
<div class="t" style="left:22.50px;top:614.82px;font-size:8.60px;line-height:8.60px;color:#e6e6e6;transform:scaleX(0.9400);">Properties</div>
<svg style="left:100px;top:613.60px" width="9" height="9"><path d="M1.5 4.5 A3 3 0 0 1 6.5 2.2 M7.5 4.5 A3 3 0 0 1 2.5 6.8" fill="none" stroke="#3cc83c" stroke-width="1.6"/><path d="M5.3 1 L8 1.5 L7 3.8Z M3.7 8 L1 7.5 L2 5.2Z" fill="#3cc83c"/></svg>
<div class="t" style="left:276.00px;top:614.82px;font-size:8.60px;line-height:8.60px;color:#e6e6e6;transform:scaleX(0.9400);">Ref&lt;NiProperty&gt;</div>
<div class="t" style="left:22.50px;top:627.42px;font-size:8.60px;line-height:8.60px;color:#e6e6e6;transform:scaleX(0.9400);">Collision Object</div>
<svg style="left:99px;top:625.70px" width="10" height="10"><path d="M3.5 0.5h3v3h3v3h-3v3h-3v-3h-3v-3h3z" fill="#2fc82f" stroke="#1e9a1e" stroke-width="0.5"/></svg>
<div class="t" style="left:112.00px;top:627.42px;font-size:8.60px;line-height:8.60px;color:#e6e6e6;transform:scaleX(0.9300);">None</div>
<div class="t" style="left:276.00px;top:627.42px;font-size:8.60px;line-height:8.60px;color:#e6e6e6;transform:scaleX(0.9400);">Ref&lt;NiCollisionObject&gt;</div>
<div class="a" style="left:4.00px;top:637.00px;width:421.00px;height:12.60px;background:#2f2f2f;"></div>
<div class="t" style="left:22.50px;top:640.02px;font-size:8.60px;line-height:8.60px;color:#e6e6e6;transform:scaleX(0.9400);">Num Children</div>
<div class="t" style="left:101.00px;top:640.02px;font-size:8.60px;line-height:8.60px;color:#e6e6e6;transform:scaleX(0.9300);">0</div>
<div class="t" style="left:276.00px;top:640.02px;font-size:8.60px;line-height:8.60px;color:#e6e6e6;transform:scaleX(0.9400);">uint</div>
<div class="t" style="left:22.50px;top:652.62px;font-size:8.60px;line-height:8.60px;color:#e6e6e6;transform:scaleX(0.9400);">Children</div>
<svg style="left:100px;top:651.40px" width="9" height="9"><path d="M1.5 4.5 A3 3 0 0 1 6.5 2.2 M7.5 4.5 A3 3 0 0 1 2.5 6.8" fill="none" stroke="#3cc83c" stroke-width="1.6"/><path d="M5.3 1 L8 1.5 L7 3.8Z M3.7 8 L1 7.5 L2 5.2Z" fill="#3cc83c"/></svg>
<div class="t" style="left:276.00px;top:652.62px;font-size:8.60px;line-height:8.60px;color:#e6e6e6;transform:scaleX(0.9400);">Ref&lt;NiAVObject&gt;</div>
<div class="a" style="left:4.00px;top:662.20px;width:421.00px;height:12.60px;background:#2f2f2f;"></div>
<div class="t" style="left:22.50px;top:665.22px;font-size:8.60px;line-height:8.60px;color:#e6e6e6;transform:scaleX(0.9400);">Num Effects</div>
<div class="t" style="left:101.00px;top:665.22px;font-size:8.60px;line-height:8.60px;color:#e6e6e6;transform:scaleX(0.9300);">0</div>
<div class="t" style="left:276.00px;top:665.22px;font-size:8.60px;line-height:8.60px;color:#e6e6e6;transform:scaleX(0.9400);">uint</div>
<div class="t" style="left:22.50px;top:677.82px;font-size:8.60px;line-height:8.60px;color:#e6e6e6;transform:scaleX(0.9400);">Effects</div>
<svg style="left:100px;top:676.60px" width="9" height="9"><path d="M1.5 4.5 A3 3 0 0 1 6.5 2.2 M7.5 4.5 A3 3 0 0 1 2.5 6.8" fill="none" stroke="#3cc83c" stroke-width="1.6"/><path d="M5.3 1 L8 1.5 L7 3.8Z M3.7 8 L1 7.5 L2 5.2Z" fill="#3cc83c"/></svg>
<div class="t" style="left:276.00px;top:677.82px;font-size:8.60px;line-height:8.60px;color:#e6e6e6;transform:scaleX(0.9400);">Ref&lt;NiDynamicEffect&gt;</div>
<div class="a" style="left:432.00px;top:71.00px;width:1.00px;height:696.00px;background:#2b2b2b;"></div>
<div class="a" style="left:433.00px;top:71.00px;width:766.00px;height:696.00px;background:#ffffff;"></div>
<div class="a" style="left:433px;top:71px;width:766px;height:696px;overflow:hidden">
<svg style="left:-433px;top:-71px" width="1200" height="785" viewBox="0 0 1200 785">
<defs>
<radialGradient id="cuffg" cx="0.45" cy="0.45" r="0.6">
 <stop offset="0" stop-color="#1e0628"/><stop offset="0.75" stop-color="#12031a"/><stop offset="1" stop-color="#08020a"/>
</radialGradient>
</defs>
<g stroke="#8ef08e" stroke-width="1.50" stroke-dasharray="2.4 3.4" fill="none">
<line x1="812" y1="765" x2="629.1" y2="378.7" stroke-dashoffset="3.6"/>
<line x1="812" y1="765" x2="631.5" y2="378.4" stroke-dashoffset="4.3"/>
<line x1="812" y1="765" x2="634.0" y2="378.0" stroke-dashoffset="4.6"/>
<line x1="812" y1="765" x2="636.4" y2="377.6" stroke-dashoffset="5.5"/>
<line x1="812" y1="765" x2="641.7" y2="376.8" stroke-dashoffset="4.3"/>
<line x1="812" y1="765" x2="643.7" y2="376.5" stroke-dashoffset="5.3"/>
<line x1="812" y1="765" x2="645.7" y2="376.1" stroke-dashoffset="0.2"/>
<line x1="812" y1="765" x2="647.6" y2="375.8" stroke-dashoffset="2.7"/>
<line x1="812" y1="765" x2="649.6" y2="375.5" stroke-dashoffset="5.5"/>
<line x1="812" y1="765" x2="651.6" y2="375.2" stroke-dashoffset="3.8"/>
<line x1="812" y1="765" x2="653.5" y2="374.9" stroke-dashoffset="5.2"/>
<line x1="812" y1="765" x2="655.5" y2="374.6" stroke-dashoffset="0.7"/>
<line x1="812" y1="765" x2="659.2" y2="374.0" stroke-dashoffset="2.7"/>
</g>
<g stroke="#8ef08e" stroke-width="1.50" stroke-dasharray="2.4 3.4" fill="none">
<line x1="812" y1="765" x2="665.2" y2="335.2" stroke-dashoffset="1.4"/>
<line x1="812" y1="765" x2="671.6" y2="326.5" stroke-dashoffset="3.2"/>
<line x1="812" y1="765" x2="683.3" y2="310.8" stroke-dashoffset="3.3"/>
<line x1="812" y1="765" x2="696.5" y2="293.1" stroke-dashoffset="0.1"/>
<line x1="812" y1="765" x2="699.4" y2="289.2" stroke-dashoffset="1.3"/>
<line x1="812" y1="765" x2="702.3" y2="285.3" stroke-dashoffset="1.6"/>
<line x1="812" y1="765" x2="704.3" y2="282.6" stroke-dashoffset="5.3"/>
</g>
<g stroke="#8ef08e" stroke-width="1.50" stroke-dasharray="2.4 3.4" fill="none">
<line x1="812" y1="765" x2="990.7" y2="372.7" stroke-dashoffset="4.4"/>
<line x1="812" y1="765" x2="993.1" y2="372.7" stroke-dashoffset="0.9"/>
<line x1="812" y1="765" x2="995.6" y2="372.8" stroke-dashoffset="4.6"/>
<line x1="812" y1="765" x2="998.0" y2="372.8" stroke-dashoffset="0.8"/>
<line x1="812" y1="765" x2="1000.6" y2="372.8" stroke-dashoffset="3.6"/>
<line x1="812" y1="765" x2="1007.5" y2="372.8" stroke-dashoffset="0.7"/>
<line x1="812" y1="765" x2="1011.4" y2="372.9" stroke-dashoffset="0.0"/>
<line x1="812" y1="765" x2="1015.9" y2="372.9" stroke-dashoffset="5.1"/>
</g>
<g stroke="#8ef08e" stroke-width="1.50" stroke-dasharray="2.4 3.4" fill="none">
<line x1="812" y1="765" x2="936.6" y2="307.7" stroke-dashoffset="1.2"/>
<line x1="812" y1="765" x2="939.0" y2="310.9" stroke-dashoffset="1.2"/>
<line x1="812" y1="765" x2="947.1" y2="321.6" stroke-dashoffset="5.7"/>
<line x1="812" y1="765" x2="959.2" y2="337.6" stroke-dashoffset="5.1"/>
<line x1="812" y1="765" x2="976.2" y2="360.1" stroke-dashoffset="1.7"/>
</g>
<g stroke="#8ef08e" stroke-width="1.50" stroke-dasharray="2.4 3.4" fill="none">
<line x1="812" y1="765" x2="772.3" y2="500.0" stroke-dashoffset="5.6"/>
<line x1="812" y1="765" x2="776.3" y2="500.0" stroke-dashoffset="3.1"/>
<line x1="812" y1="765" x2="780.3" y2="500.0" stroke-dashoffset="3.9"/>
<line x1="812" y1="765" x2="783.4" y2="500.0" stroke-dashoffset="1.2"/>
<line x1="812" y1="765" x2="786.6" y2="500.0" stroke-dashoffset="5.5"/>
<line x1="812" y1="765" x2="789.8" y2="500.0" stroke-dashoffset="4.0"/>
<line x1="812" y1="765" x2="793.0" y2="500.0" stroke-dashoffset="5.6"/>
<line x1="812" y1="765" x2="796.1" y2="500.0" stroke-dashoffset="5.2"/>
<line x1="812" y1="765" x2="799.3" y2="500.0" stroke-dashoffset="1.7"/>
<line x1="812" y1="765" x2="802.5" y2="500.0" stroke-dashoffset="2.1"/>
<line x1="812" y1="765" x2="805.7" y2="500.0" stroke-dashoffset="1.0"/>
<line x1="812" y1="765" x2="808.8" y2="500.0" stroke-dashoffset="0.8"/>
<line x1="812" y1="765" x2="812.0" y2="500.0" stroke-dashoffset="0.4"/>
<line x1="812" y1="765" x2="815.2" y2="500.0" stroke-dashoffset="1.7"/>
<line x1="812" y1="765" x2="818.3" y2="500.0" stroke-dashoffset="3.5"/>
<line x1="812" y1="765" x2="821.5" y2="500.0" stroke-dashoffset="0.0"/>
<line x1="812" y1="765" x2="824.7" y2="500.0" stroke-dashoffset="3.9"/>
<line x1="812" y1="765" x2="827.9" y2="500.0" stroke-dashoffset="2.0"/>
<line x1="812" y1="765" x2="831.0" y2="500.0" stroke-dashoffset="1.8"/>
<line x1="812" y1="765" x2="834.2" y2="500.0" stroke-dashoffset="4.7"/>
<line x1="812" y1="765" x2="837.4" y2="500.0" stroke-dashoffset="2.8"/>
<line x1="812" y1="765" x2="840.6" y2="500.0" stroke-dashoffset="1.8"/>
<line x1="812" y1="765" x2="844.5" y2="500.0" stroke-dashoffset="2.8"/>
<line x1="812" y1="765" x2="848.5" y2="500.0" stroke-dashoffset="4.1"/>
<line x1="812" y1="765" x2="851.7" y2="500.0" stroke-dashoffset="0.3"/>
</g>
<g stroke="#7ee87e" stroke-width="0.9"><line x1="812" y1="765" x2="755" y2="731"/><line x1="812" y1="765" x2="757" y2="735"/><line x1="812" y1="765" x2="869" y2="731"/><line x1="812" y1="765" x2="872" y2="728"/><line x1="812" y1="765" x2="919" y2="288" opacity="0.6"/></g>
<line x1="812.5" y1="765" x2="812.5" y2="596" stroke="#30e030" stroke-width="1.3"/>
<path d="M734.3 596.9 L786.7 596.9 L770.4 717.1 L740.3 717.1 L735.2 641.5 Z" fill="#050106" />
<path d="M738.6 597.7 L783.3 597.7 L780.7 639.5 L735.5 639.8 Z" fill="#2c0840" />
<path d="M735.2 639.8 L780.7 639.0 L779.8 647.6 L735.2 649.3 Z" fill="#c8c8ce" />
<path d="M735.2 649.3 L779.8 647.6 L773.0 674.2 L738.6 682.8 Z" fill="#141c28" />
<g fill="none" stroke="#4a5a70" stroke-width="0.9" opacity="0.8"><path d="M742 668 Q748 656 758 660 Q766 664 772 654"/><path d="M745 676 Q752 670 762 672"/></g>
<path d="M740.3 682.8 L773.0 674.2 L771.2 685.4 L742.0 694.0 Z" fill="#c8c8ce" />
<path d="M838.2 597.7 L889.8 597.7 L886.4 718.9 L853.7 718.9 Z" fill="#050106" />
<path d="M841.7 635.5 L864.0 636.0 L864.0 642.0 L842.5 641.5 Z" fill="#c8c8ce" />
<path d="M842.5 641.5 L864.0 642.0 L864.0 672.5 L850.3 672.5 Z" fill="#141c28" />
<path d="M850.3 672.5 L864.0 673.0 L864.0 686.2 L852.0 686.2 Z" fill="#c8c8ce" />
<path d="M864.0 598.6 L889.8 598.0 L887.0 708.6 L870.0 700.0 L862.0 660.0 Z" fill="#1a1a1a" />
<clipPath id="lfclip"><path d="M864.0 598.6 L889.8 598.0 L887.0 708.6 L870.0 700.0 L862.0 660.0 Z"/></clipPath>
<g clip-path="url(#lfclip)" stroke-linecap="round" opacity="0.85">
<path d="M891.2 600.6l-2.8 7.7" stroke="#36362c" stroke-width="1.5"/>
<path d="M871.7 662.8l0.7 4.2" stroke="#55554b" stroke-width="1.7"/>
<path d="M866.3 682.6l-4.0 7.7" stroke="#66665c" stroke-width="1.2"/>
<path d="M876.8 684.9l0.8 7.7" stroke="#919187" stroke-width="1.6"/>
<path d="M861.2 703.9l0.6 5.7" stroke="#7d7d73" stroke-width="1.6"/>
<path d="M870.9 701.5l-1.1 5.4" stroke="#636359" stroke-width="1.0"/>
<path d="M862.5 614.7l-2.7 8.6" stroke="#525248" stroke-width="0.9"/>
<path d="M891.6 657.8l-0.6 5.2" stroke="#7b7b71" stroke-width="1.6"/>
<path d="M874.6 645.2l1.2 8.5" stroke="#3b3b31" stroke-width="1.3"/>
<path d="M886.8 612.6l-2.9 8.3" stroke="#7f7f75" stroke-width="1.5"/>
<path d="M863.4 646.7l0.6 8.2" stroke="#616157" stroke-width="1.3"/>
<path d="M892.0 693.5l-3.0 5.5" stroke="#727268" stroke-width="1.5"/>
<path d="M875.3 630.6l-0.5 4.7" stroke="#68685e" stroke-width="1.7"/>
<path d="M890.7 668.2l-1.0 5.6" stroke="#47473d" stroke-width="1.1"/>
<path d="M885.0 695.1l-0.6 7.9" stroke="#8f8f85" stroke-width="1.5"/>
<path d="M881.2 683.1l-0.6 7.5" stroke="#606056" stroke-width="1.3"/>
<path d="M884.6 675.4l-0.3 8.7" stroke="#808076" stroke-width="1.4"/>
<path d="M860.4 659.3l-0.0 7.4" stroke="#707066" stroke-width="1.6"/>
<path d="M880.7 687.3l-0.5 7.2" stroke="#8a8a80" stroke-width="1.6"/>
<path d="M871.2 692.4l-3.1 6.8" stroke="#b5b5ab" stroke-width="1.7"/>
<path d="M876.6 657.3l0.5 8.2" stroke="#a9a99f" stroke-width="1.3"/>
<path d="M882.1 678.6l-1.6 4.6" stroke="#8f8f85" stroke-width="1.4"/>
<path d="M881.3 645.1l-2.0 7.6" stroke="#7f7f75" stroke-width="1.5"/>
<path d="M860.9 615.9l-1.0 7.2" stroke="#59594f" stroke-width="1.4"/>
<path d="M880.2 602.7l-0.8 5.1" stroke="#404036" stroke-width="1.0"/>
<path d="M870.2 618.3l0.2 4.2" stroke="#707066" stroke-width="1.2"/>
<path d="M879.6 664.1l0.1 8.5" stroke="#2a2a20" stroke-width="1.2"/>
<path d="M868.9 643.9l0.8 8.1" stroke="#68685e" stroke-width="0.9"/>
<path d="M879.6 608.6l-1.2 5.6" stroke="#7a7a70" stroke-width="1.7"/>
<path d="M886.2 644.9l-2.8 6.7" stroke="#68685e" stroke-width="1.0"/>
<path d="M879.1 661.2l-4.2 7.8" stroke="#7c7c72" stroke-width="1.2"/>
<path d="M888.6 598.1l0.7 6.8" stroke="#7d7d73" stroke-width="1.0"/>
<path d="M880.1 697.8l-0.5 6.1" stroke="#5a5a50" stroke-width="1.1"/>
<path d="M891.1 640.5l-4.1 7.5" stroke="#7b7b71" stroke-width="1.1"/>
<path d="M891.4 653.6l-0.6 5.6" stroke="#b8b8ae" stroke-width="1.3"/>
<path d="M869.2 651.4l0.6 7.1" stroke="#6e6e64" stroke-width="1.1"/>
<path d="M885.0 690.6l1.1 6.6" stroke="#5f5f55" stroke-width="1.6"/>
<path d="M885.0 625.5l-0.1 4.8" stroke="#bbbbb1" stroke-width="1.1"/>
<path d="M879.5 651.2l-1.9 6.8" stroke="#8b8b81" stroke-width="1.0"/>
<path d="M884.3 631.7l-1.1 5.6" stroke="#616157" stroke-width="1.3"/>
<path d="M874.9 638.4l-2.4 6.5" stroke="#3c3c32" stroke-width="1.1"/>
<path d="M874.6 700.7l-2.9 6.1" stroke="#34342a" stroke-width="1.5"/>
<path d="M873.7 662.5l-2.3 6.8" stroke="#717167" stroke-width="1.6"/>
<path d="M872.3 641.9l-2.0 4.5" stroke="#616157" stroke-width="1.6"/>
<path d="M862.1 691.7l-1.9 5.9" stroke="#606056" stroke-width="1.5"/>
<path d="M889.1 614.0l-1.1 6.7" stroke="#727268" stroke-width="1.2"/>
<path d="M864.9 663.6l-1.7 4.0" stroke="#5a5a50" stroke-width="1.6"/>
<path d="M885.3 672.3l1.2 7.5" stroke="#b6b6ac" stroke-width="1.7"/>
<path d="M882.4 603.5l-2.0 4.7" stroke="#808076" stroke-width="1.7"/>
<path d="M882.8 613.1l-0.3 8.6" stroke="#505046" stroke-width="1.4"/>
<path d="M873.2 616.1l-1.1 4.1" stroke="#4a4a40" stroke-width="1.2"/>
<path d="M862.3 604.4l-1.7 7.5" stroke="#9e9e94" stroke-width="1.0"/>
<path d="M873.8 633.2l-1.6 6.3" stroke="#aaaaa0" stroke-width="1.2"/>
<path d="M861.8 676.1l0.5 7.1" stroke="#737369" stroke-width="1.6"/>
<path d="M877.8 667.5l-0.1 6.8" stroke="#5d5d53" stroke-width="1.5"/>
<path d="M876.5 613.0l0.1 5.9" stroke="#8a8a80" stroke-width="1.0"/>
<path d="M882.8 671.4l0.8 7.3" stroke="#47473d" stroke-width="1.0"/>
<path d="M879.0 624.7l-2.7 5.8" stroke="#64645a" stroke-width="1.5"/>
<path d="M860.9 679.2l0.6 4.7" stroke="#adada3" stroke-width="1.4"/>
<path d="M867.1 611.0l-3.5 6.4" stroke="#95958b" stroke-width="1.0"/>
<path d="M880.0 637.7l0.1 5.7" stroke="#7d7d73" stroke-width="1.2"/>
<path d="M872.3 613.3l-2.9 6.7" stroke="#929288" stroke-width="1.2"/>
<path d="M887.3 656.0l-1.6 6.7" stroke="#8a8a80" stroke-width="1.2"/>
<path d="M863.1 601.7l0.1 4.2" stroke="#a0a096" stroke-width="1.3"/>
<path d="M884.3 598.0l-1.3 8.3" stroke="#7d7d73" stroke-width="1.2"/>
<path d="M874.9 609.2l0.3 4.8" stroke="#68685e" stroke-width="1.2"/>
<path d="M888.2 615.0l-0.0 5.4" stroke="#525248" stroke-width="1.1"/>
<path d="M867.5 652.0l1.3 8.5" stroke="#68685e" stroke-width="1.7"/>
<path d="M882.0 673.5l-1.3 8.6" stroke="#4c4c42" stroke-width="1.4"/>
<path d="M869.3 673.5l-1.6 4.5" stroke="#57574d" stroke-width="0.9"/>
<path d="M867.4 606.8l-0.9 8.8" stroke="#67675d" stroke-width="1.1"/>
<path d="M875.0 629.7l-2.5 7.2" stroke="#525248" stroke-width="1.1"/>
<path d="M881.5 703.3l-1.7 5.9" stroke="#b5b5ab" stroke-width="0.9"/>
<path d="M861.9 685.3l-0.5 4.2" stroke="#77776d" stroke-width="1.7"/>
<path d="M876.6 637.2l0.5 4.3" stroke="#a1a197" stroke-width="1.3"/>
<path d="M889.9 604.0l0.0 4.3" stroke="#6a6a60" stroke-width="0.9"/>
<path d="M868.2 643.6l-0.2 4.3" stroke="#3c3c32" stroke-width="1.7"/>
<path d="M865.7 655.0l-0.7 6.6" stroke="#46463c" stroke-width="1.2"/>
<path d="M863.5 658.7l-3.2 6.2" stroke="#9a9a90" stroke-width="1.1"/>
<path d="M860.6 658.4l-1.1 6.8" stroke="#68685e" stroke-width="1.4"/>
<path d="M883.2 700.3l-0.3 6.2" stroke="#96968c" stroke-width="1.1"/>
<path d="M863.7 632.9l0.9 7.8" stroke="#95958b" stroke-width="1.2"/>
<path d="M864.2 607.2l0.0 4.4" stroke="#6d6d63" stroke-width="1.4"/>
<path d="M867.9 604.9l-1.3 4.0" stroke="#57574d" stroke-width="1.1"/>
<path d="M872.0 609.0l-0.7 5.5" stroke="#8c8c82" stroke-width="1.3"/>
<path d="M888.7 671.3l-2.4 6.4" stroke="#6e6e64" stroke-width="1.6"/>
<path d="M881.0 704.9l-2.5 7.1" stroke="#5e5e54" stroke-width="1.5"/>
<path d="M872.2 612.6l0.6 4.8" stroke="#5e5e54" stroke-width="1.4"/>
<path d="M869.1 605.1l-2.4 6.4" stroke="#39392f" stroke-width="0.9"/>
<path d="M864.2 638.0l-3.6 8.0" stroke="#7d7d73" stroke-width="1.1"/>
<path d="M873.7 638.6l-0.2 4.1" stroke="#7a7a70" stroke-width="1.6"/>
<path d="M883.3 608.7l-0.9 4.8" stroke="#87877d" stroke-width="1.3"/>
<path d="M890.0 687.0l0.5 5.6" stroke="#a5a59b" stroke-width="1.3"/>
<path d="M873.9 647.4l-3.1 8.1" stroke="#75756b" stroke-width="1.7"/>
<path d="M879.1 609.6l-2.3 5.6" stroke="#404036" stroke-width="1.7"/>
<path d="M861.1 662.6l-1.4 8.3" stroke="#6a6a60" stroke-width="1.1"/>
<path d="M868.9 620.5l-1.3 5.6" stroke="#8c8c82" stroke-width="1.1"/>
<path d="M871.3 625.8l-4.0 7.2" stroke="#99998f" stroke-width="1.4"/>
<path d="M872.8 614.0l-2.5 5.9" stroke="#3c3c32" stroke-width="1.0"/>
<path d="M863.2 678.4l-2.2 4.5" stroke="#919187" stroke-width="1.2"/>
<path d="M881.9 694.7l-2.1 7.7" stroke="#68685e" stroke-width="0.9"/>
<path d="M876.4 663.7l0.3 5.9" stroke="#636359" stroke-width="0.9"/>
<path d="M870.0 640.9l-1.2 7.4" stroke="#6a6a60" stroke-width="1.7"/>
<path d="M886.1 701.5l-2.2 7.0" stroke="#76766c" stroke-width="1.5"/>
<path d="M871.6 664.5l-2.0 6.3" stroke="#606056" stroke-width="1.0"/>
<path d="M862.8 637.9l-1.8 7.6" stroke="#87877d" stroke-width="1.1"/>
<path d="M889.7 628.8l-1.4 4.1" stroke="#8c8c82" stroke-width="1.4"/>
<path d="M890.6 698.5l-2.5 7.8" stroke="#8a8a80" stroke-width="1.4"/>
<path d="M866.7 655.9l-2.3 4.7" stroke="#b4b4aa" stroke-width="1.3"/>
<path d="M872.6 598.3l-0.5 4.9" stroke="#818177" stroke-width="1.6"/>
<path d="M889.1 666.7l-0.4 4.5" stroke="#85857b" stroke-width="1.3"/>
<path d="M882.9 639.9l-2.2 4.6" stroke="#626258" stroke-width="1.1"/>
<path d="M879.9 698.5l0.4 7.2" stroke="#8e8e84" stroke-width="1.1"/>
<path d="M862.0 661.4l-3.3 7.7" stroke="#89897f" stroke-width="1.2"/>
<path d="M873.6 657.2l-2.4 4.9" stroke="#606056" stroke-width="1.4"/>
<path d="M890.9 619.0l0.7 4.5" stroke="#78786e" stroke-width="1.4"/>
<path d="M865.9 619.3l-1.7 7.0" stroke="#85857b" stroke-width="1.5"/>
<path d="M862.0 652.3l-3.5 8.1" stroke="#636359" stroke-width="1.6"/>
<path d="M880.6 701.8l0.1 7.5" stroke="#98988e" stroke-width="1.3"/>
<path d="M863.2 619.7l0.3 4.5" stroke="#515147" stroke-width="1.4"/>
<path d="M863.4 682.9l-2.7 7.6" stroke="#929288" stroke-width="1.5"/>
<path d="M889.6 705.2l-2.3 8.5" stroke="#4a4a40" stroke-width="1.0"/>
<path d="M862.1 621.1l-0.5 6.3" stroke="#84847a" stroke-width="1.5"/>
<path d="M862.7 643.2l-1.2 5.8" stroke="#4c4c42" stroke-width="1.4"/>
<path d="M872.0 674.6l-1.5 8.7" stroke="#ababa1" stroke-width="1.0"/>
<path d="M884.3 678.8l-0.1 4.6" stroke="#717167" stroke-width="1.2"/>
<path d="M883.6 700.9l-0.5 5.4" stroke="#737369" stroke-width="1.5"/>
<path d="M885.2 662.5l-0.2 5.7" stroke="#99998f" stroke-width="1.3"/>
<path d="M861.6 645.1l0.1 7.3" stroke="#44443a" stroke-width="1.1"/>
<path d="M863.1 651.5l-3.3 5.8" stroke="#69695f" stroke-width="1.6"/>
<path d="M862.9 637.8l-1.5 3.7" stroke="#8d8d83" stroke-width="1.2"/>
<path d="M860.5 626.1l-0.9 5.9" stroke="#74746a" stroke-width="0.9"/>
<path d="M867.0 707.1l-0.9 6.3" stroke="#46463c" stroke-width="1.1"/>
<path d="M890.6 675.0l-0.8 4.2" stroke="#6a6a60" stroke-width="1.5"/>
<path d="M873.9 664.5l-3.2 6.5" stroke="#7f7f75" stroke-width="0.9"/>
<path d="M860.8 684.2l-1.0 8.3" stroke="#95958b" stroke-width="1.6"/>
<path d="M872.1 709.9l-2.9 7.9" stroke="#505046" stroke-width="1.5"/>
<path d="M873.5 706.9l-2.5 4.4" stroke="#6c6c62" stroke-width="1.1"/>
<path d="M875.0 630.1l-1.3 4.4" stroke="#535349" stroke-width="1.3"/>
<path d="M862.4 640.7l-3.7 7.6" stroke="#56564c" stroke-width="0.9"/>
<path d="M886.5 705.6l-1.1 4.5" stroke="#5b5b51" stroke-width="1.6"/>
<path d="M890.0 601.5l0.3 6.1" stroke="#5e5e54" stroke-width="1.5"/>
<path d="M871.9 684.8l0.5 6.6" stroke="#b5b5ab" stroke-width="1.5"/>
<path d="M862.9 610.4l-1.6 5.7" stroke="#68685e" stroke-width="1.3"/>
<path d="M878.6 706.2l0.0 6.8" stroke="#5e5e54" stroke-width="1.3"/>
<path d="M883.4 613.0l-1.2 7.4" stroke="#313127" stroke-width="1.5"/>
<path d="M873.4 654.5l-2.0 7.7" stroke="#414137" stroke-width="1.3"/>
<path d="M861.2 641.2l-0.3 4.1" stroke="#616157" stroke-width="1.3"/>
<path d="M881.0 701.6l-0.6 6.6" stroke="#87877d" stroke-width="1.6"/>
<path d="M890.4 708.7l-0.2 4.8" stroke="#a8a89e" stroke-width="1.0"/>
<path d="M874.4 680.5l-1.1 5.8" stroke="#a7a79d" stroke-width="1.1"/>
<path d="M877.7 690.9l0.4 5.7" stroke="#727268" stroke-width="1.4"/>
<path d="M866.6 648.8l0.6 4.4" stroke="#65655b" stroke-width="1.0"/>
<path d="M891.0 627.5l-0.1 7.9" stroke="#8a8a80" stroke-width="1.1"/>
<path d="M886.5 668.1l-0.7 7.1" stroke="#5c5c52" stroke-width="1.1"/>
<path d="M888.0 647.1l-2.1 4.4" stroke="#4f4f45" stroke-width="0.9"/>
<path d="M883.7 660.9l0.7 4.2" stroke="#95958b" stroke-width="1.3"/>
<path d="M887.9 602.5l-1.1 4.5" stroke="#88887e" stroke-width="1.4"/>
<path d="M879.6 622.8l-2.1 4.0" stroke="#424238" stroke-width="1.4"/>
<path d="M863.0 605.5l-1.1 7.2" stroke="#a0a096" stroke-width="1.5"/>
</g>
<defs>
<linearGradient id="pg1" x1="0" y1="0" x2="0" y2="1"><stop offset="0" stop-color="#220530"/><stop offset="0.5" stop-color="#320844"/><stop offset="1" stop-color="#2e0740"/></linearGradient>
<linearGradient id="pg2" x1="0" y1="0" x2="1" y2="1"><stop offset="0" stop-color="#320844"/><stop offset="0.6" stop-color="#240634"/><stop offset="1" stop-color="#300842"/></linearGradient>
<linearGradient id="pg3" x1="0" y1="0" x2="0" y2="1"><stop offset="0" stop-color="#040006"/><stop offset="0.75" stop-color="#080010"/><stop offset="1" stop-color="#1e0428"/></linearGradient>
</defs>
<path d="M743.0 336.0 L885.0 336.0 L893.0 380.0 L918.0 594.0 L916.6 599.0 L809.6 600.0 L807.0 597.0 L703.0 594.0 L724.7 440.0 Z" fill="url(#pg1)" />
<defs><filter id="soft" x="-20%" y="-5%" width="140%" height="110%"><feGaussianBlur stdDeviation="1.6"/></filter></defs>
<path d="M746 341 L782.7 341 Q770 390 761.3 437 Q752 480 743.5 522.6 Q740 440 746 341 Z" fill="#040006" filter="url(#soft)"/>
<path d="M797.0 341.0 L811.0 341.0 L811.0 600.0 L792.0 600.0 Z" fill="#050007" />
<path d="M743.0 330.0 L800.0 330.0 L799.0 341.5 L743.0 341.5 Z" fill="#22052e" />
<path d="M704.0 579.6 L791.6 579.6 L791.6 598.0 L703.0 595.7 Z" fill="#060108" />
<path d="M714.0 524.7 L737.3 524.7 L737.3 531.2 L714.0 531.2 Z" fill="#d0d0d6" />
<path d="M739.5 530.2 L792.0 537.2 L792.0 543.7 L739.5 537.2 Z" fill="#d0d0d6" />
<path d="M713.0 531.0 L792.0 543.5 L792.0 564.2 L709.0 557.7 Z" fill="#161e2a" />
<g fill="none" stroke="#4a5a6e" stroke-width="0.9" opacity="0.8"><path d="M716 548 Q724 538 732 546 Q740 552 748 544"/><path d="M752 552 Q760 542 770 550 Q778 556 786 548"/><path d="M738 540 Q744 548 756 546"/></g>
<path d="M707.6 557.7 L792.0 564.2 L792.0 579.4 L707.6 574.0 Z" fill="#c8c8ce" />
<path d="M708 566 L792 571.8" stroke="#9a9aa0" stroke-width="0.8"/>
<path d="M726.5 558.0 L733.5 558.5 L733.5 577.0 L726.5 576.5 Z" fill="#050505" />
<path d="M811.0 341.0 L885.0 338.0 L893.0 380.0 L895.0 472.7 L811.0 472.7 Z" fill="url(#pg3)" />
<path d="M811.0 472.7 L895.0 472.7 L918.0 594.0 L916.6 599.0 L811.0 600.0 Z" fill="url(#pg2)" />
<path d="M867.0 473.0 L872.0 473.0 L876.0 598.0 L871.0 598.0 Z" fill="#12021a" />
<rect x="807" y="372" width="2" height="15" fill="#9a9a9a"/>
<path d="M729.0 156.0 L728.0 163.5 L699.5 201.7 L653.0 284.0 L628.0 318.0 L660.0 350.0 L674.0 337.0 L738.3 250.0 L733.0 228.0 Z" fill="#020202" />
<defs><linearGradient id="armg" x1="0.7" y1="0" x2="0.2" y2="1"><stop offset="0" stop-color="#020202"/><stop offset="1" stop-color="#240632"/></linearGradient></defs>
<path d="M665 262 L630 318 L660 350 L674 337 L712 285 Z" fill="url(#armg)"/>
<path d="M731 160 Q712 166 699.5 201.7 L733 227 Z" fill="#4e4c56"/>
<clipPath id="lsclip"><path d="M731 160 Q712 166 699.5 201.7 L733 227 Z"/></clipPath>
<g clip-path="url(#lsclip)" fill="none" stroke="#8a8a94" stroke-width="0.9">
<path d="M702.7 207.0A2.9 2.9 0 1 1 699.3 202.4"/>
<path d="M727.9 178.1A2.0 2.0 0 1 1 724.0 177.4"/>
<path d="M723.1 196.8A3.0 3.0 0 1 1 729.1 196.5"/>
<path d="M705.6 174.5A1.9 1.9 0 1 1 701.8 175.1"/>
<path d="M707.4 167.2A2.1 2.1 0 1 1 704.2 164.6"/>
<path d="M714.9 205.8A2.6 2.6 0 1 1 713.4 200.9"/>
<path d="M700.6 195.3A2.7 2.7 0 1 1 705.8 194.5"/>
<path d="M719.0 225.6A1.7 1.7 0 1 1 720.0 222.3"/>
<path d="M713.4 196.5A3.0 3.0 0 1 1 718.6 199.5"/>
<path d="M724.0 186.9A2.8 2.8 0 1 1 720.3 191.1"/>
<path d="M707.7 169.1A1.9 1.9 0 1 1 710.5 166.6"/>
<path d="M729.3 176.5A2.6 2.6 0 1 1 731.8 181.0"/>
<path d="M731.9 170.6A2.8 2.8 0 1 1 735.6 166.4"/>
<path d="M699.3 202.8A2.9 2.9 0 1 1 703.7 206.5"/>
<path d="M698.4 226.4A2.2 2.2 0 1 1 700.6 230.1"/>
<path d="M723.7 180.2A2.2 2.2 0 1 1 726.4 176.8"/>
<path d="M699.3 166.0A2.7 2.7 0 1 1 704.2 164.0"/>
<path d="M731.0 166.2A2.0 2.0 0 1 1 730.0 162.4"/>
<path d="M729.9 215.2A3.0 3.0 0 1 1 735.7 216.5"/>
<path d="M703.7 189.4A1.9 1.9 0 1 1 700.2 188.2"/>
<path d="M717.2 180.2A1.7 1.7 0 1 1 720.4 181.0"/>
<path d="M734.4 227.6A2.3 2.3 0 1 1 731.3 224.3"/>
<path d="M728.5 169.2A2.4 2.4 0 1 1 724.9 166.2"/>
<path d="M734.2 200.2A2.2 2.2 0 1 1 735.6 196.0"/>
<path d="M719.0 230.3A2.2 2.2 0 1 1 718.6 225.9"/>
<path d="M715.6 222.7A2.1 2.1 0 1 1 717.8 226.3"/>
<path d="M729.2 182.3A2.9 2.9 0 1 1 734.5 184.3"/>
<path d="M700.1 164.4A3.1 3.1 0 1 1 706.2 164.2"/>
<path d="M711.9 224.2A2.5 2.5 0 1 1 716.7 225.1"/>
<path d="M706.6 212.5A1.9 1.9 0 1 1 710.4 212.4"/>
</g>
<g clip-path="url(#lsclip)" fill="none" stroke="#2a2a30" stroke-width="1">
<path d="M726.6 204.0A1.8 1.8 0 1 1 726.2 200.6"/>
<path d="M725.4 211.0A1.7 1.7 0 1 1 722.1 210.5"/>
<path d="M701.4 172.3A1.7 1.7 0 1 1 704.6 171.8"/>
<path d="M720.3 218.3A1.8 1.8 0 1 1 720.9 221.8"/>
<path d="M700.7 202.2A2.0 2.0 0 1 1 703.6 199.6"/>
<path d="M700.1 208.7A1.7 1.7 0 1 1 699.2 212.0"/>
<path d="M707.7 201.6A2.8 2.8 0 1 1 713.1 202.2"/>
<path d="M729.3 226.1A2.1 2.1 0 1 1 731.9 223.1"/>
<path d="M728.4 170.5A2.3 2.3 0 1 1 732.7 168.9"/>
<path d="M734.2 166.2A2.8 2.8 0 1 1 733.0 171.6"/>
<path d="M723.7 163.2A3.4 3.4 0 1 1 727.3 157.6"/>
<path d="M730.8 204.3A2.3 2.3 0 1 1 727.7 207.7"/>
<path d="M720.0 183.7A3.0 3.0 0 1 1 725.7 184.9"/>
<path d="M726.0 205.6A3.1 3.1 0 1 1 723.7 200.0"/>
<path d="M716.7 157.0A3.1 3.1 0 1 1 714.8 162.8"/>
<path d="M726.4 163.4A2.6 2.6 0 1 1 731.5 163.6"/>
<path d="M704.5 171.4A3.4 3.4 0 1 1 699.5 176.0"/>
<path d="M704.7 219.9A2.8 2.8 0 1 1 709.4 217.0"/>
<path d="M723.9 176.2A2.0 2.0 0 1 1 720.0 175.2"/>
<path d="M719.3 200.6A3.0 3.0 0 1 1 725.1 201.8"/>
<path d="M712.0 183.6A3.0 3.0 0 1 1 716.8 180.2"/>
<path d="M719.1 210.8A2.4 2.4 0 1 1 720.2 215.4"/>
<path d="M702.2 180.8A3.2 3.2 0 1 1 699.4 175.2"/>
<path d="M702.5 162.9A3.0 3.0 0 1 1 698.5 158.4"/>
<path d="M711.9 191.1A3.1 3.1 0 1 1 718.0 191.3"/>
<path d="M717.6 158.7A3.1 3.1 0 1 1 715.9 164.5"/>
<path d="M720.5 215.8A2.7 2.7 0 1 1 720.7 221.1"/>
<path d="M730.6 202.2A1.5 1.5 0 1 1 728.0 203.8"/>
<path d="M733.7 175.5A1.6 1.6 0 1 1 735.9 173.1"/>
<path d="M702.0 187.5A1.7 1.7 0 1 1 702.0 184.2"/>
<path d="M697.8 187.9A2.1 2.1 0 1 1 697.7 192.1"/>
<path d="M715.1 169.5A3.4 3.4 0 1 1 709.1 172.7"/>
<path d="M721.3 175.9A2.3 2.3 0 1 1 725.8 175.3"/>
<path d="M713.4 159.4A2.4 2.4 0 1 1 712.0 164.0"/>
<path d="M723.9 217.4A2.9 2.9 0 1 1 722.4 222.8"/>
<path d="M727.6 225.8A3.1 3.1 0 1 1 733.3 223.7"/>
<path d="M721.7 202.9A3.3 3.3 0 1 1 722.0 209.3"/>
<path d="M714.4 175.5A2.2 2.2 0 1 1 715.2 171.3"/>
<path d="M721.4 213.5A1.9 1.9 0 1 1 724.8 214.9"/>
<path d="M727.8 184.6A1.7 1.7 0 1 1 730.0 187.0"/>
<path d="M713.5 170.2A2.1 2.1 0 1 1 709.5 169.3"/>
<path d="M705.2 189.8A1.7 1.7 0 1 1 701.9 189.1"/>
<path d="M716.9 229.9A3.2 3.2 0 1 1 720.7 224.9"/>
<path d="M734.0 165.7A1.8 1.8 0 1 1 730.5 164.9"/>
<path d="M697.2 202.6A3.0 3.0 0 1 1 703.1 202.8"/>
</g>
<path d="M699.5 200.2 L733.0 225.6 L733.0 228.6 L698.5 203.2 Z" fill="#9a98a4" />
<path d="M888.7 154.0 L896.0 159.7 L908.0 176.0 L923.0 200.0 L956.0 253.5 L970.0 269.0 L992.0 286.6 L1005.0 309.5 L1012.0 331.0 L978.0 361.0 L966.0 359.0 L926.0 314.6 L885.0 251.0 Z" fill="#020202" />
<path d="M888.7 154.0 L896.0 159.7 L908.0 176.0 L923.0 200.0 L931.0 212.7 L886.0 243.0 Z" fill="#54525c" />
<clipPath id="rsclip"><path d="M888.7 154.0 L896.0 159.7 L908.0 176.0 L923.0 200.0 L931.0 212.7 L886.0 243.0 Z"/></clipPath>
<g clip-path="url(#rsclip)" fill="none" stroke="#8e8e98" stroke-width="0.9">
<path d="M921.8 191.0A3.1 3.1 0 1 1 925.7 195.5"/>
<path d="M908.8 167.0A2.2 2.2 0 1 1 913.1 166.2"/>
<path d="M925.9 170.0A2.0 2.0 0 1 1 923.7 173.2"/>
<path d="M886.6 199.4A1.9 1.9 0 1 1 887.9 202.9"/>
<path d="M911.4 160.5A2.7 2.7 0 1 1 916.4 158.3"/>
<path d="M899.0 234.0A2.8 2.8 0 1 1 901.9 229.3"/>
<path d="M920.0 162.9A2.4 2.4 0 1 1 916.4 159.9"/>
<path d="M918.5 237.7A2.6 2.6 0 1 1 913.9 235.5"/>
<path d="M911.0 196.4A2.3 2.3 0 1 1 909.1 192.4"/>
<path d="M897.2 191.3A1.6 1.6 0 1 1 898.1 194.3"/>
<path d="M895.6 179.1A1.7 1.7 0 1 1 897.2 176.3"/>
<path d="M929.6 179.1A1.7 1.7 0 1 1 931.9 176.8"/>
<path d="M931.8 160.4A2.1 2.1 0 1 1 931.5 156.3"/>
<path d="M919.2 192.6A1.7 1.7 0 1 1 916.6 194.7"/>
<path d="M902.0 213.5A2.3 2.3 0 1 1 898.4 216.2"/>
<path d="M886.7 173.6A2.0 2.0 0 1 1 887.8 169.9"/>
<path d="M923.0 197.6A2.1 2.1 0 1 1 927.0 198.5"/>
<path d="M925.0 202.2A2.3 2.3 0 1 1 926.8 206.3"/>
<path d="M916.3 190.2A2.2 2.2 0 1 1 913.9 186.5"/>
<path d="M904.6 235.0A2.0 2.0 0 1 1 907.7 232.5"/>
<path d="M912.5 206.7A1.8 1.8 0 1 1 916.0 206.1"/>
<path d="M920.7 152.3A1.7 1.7 0 1 1 920.1 155.5"/>
<path d="M928.1 155.2A1.6 1.6 0 1 1 929.9 157.9"/>
<path d="M896.7 212.8A1.6 1.6 0 1 1 899.8 212.5"/>
<path d="M889.4 181.4A2.7 2.7 0 1 1 894.5 182.6"/>
<path d="M928.1 227.9A2.6 2.6 0 1 1 924.6 231.4"/>
<path d="M891.4 193.6A2.0 2.0 0 1 1 893.7 196.9"/>
<path d="M890.0 232.0A2.1 2.1 0 1 1 888.4 235.9"/>
<path d="M932.5 237.6A2.2 2.2 0 1 1 929.3 240.4"/>
<path d="M933.4 159.6A2.8 2.8 0 1 1 933.3 165.1"/>
<path d="M905.4 177.3A1.8 1.8 0 1 1 908.6 176.0"/>
<path d="M929.2 186.9A1.9 1.9 0 1 1 931.5 189.9"/>
<path d="M905.4 210.5A2.3 2.3 0 1 1 907.1 206.4"/>
<path d="M885.9 230.4A2.6 2.6 0 1 1 886.6 225.3"/>
<path d="M910.9 203.8A2.4 2.4 0 1 1 906.7 205.8"/>
<path d="M921.3 177.8A2.1 2.1 0 1 1 923.9 180.9"/>
<path d="M890.5 238.8A1.6 1.6 0 1 1 893.6 239.3"/>
<path d="M897.9 201.5A1.6 1.6 0 1 1 898.0 198.4"/>
<path d="M931.6 225.4A1.9 1.9 0 1 1 935.3 225.0"/>
<path d="M887.4 161.4A1.8 1.8 0 1 1 883.9 161.1"/>
</g>
<g clip-path="url(#rsclip)" fill="none" stroke="#2a2a30" stroke-width="1">
<path d="M900.8 174.6A1.6 1.6 0 1 1 898.8 172.1"/>
<path d="M935.5 217.4A3.3 3.3 0 1 1 931.2 222.4"/>
<path d="M922.9 176.0A1.8 1.8 0 1 1 924.0 172.6"/>
<path d="M884.3 166.8A2.9 2.9 0 1 1 890.1 167.5"/>
<path d="M886.4 176.4A3.2 3.2 0 1 1 881.8 180.7"/>
<path d="M917.4 218.3A3.3 3.3 0 1 1 923.0 221.7"/>
<path d="M905.2 204.9A2.1 2.1 0 1 1 901.4 203.3"/>
<path d="M898.5 194.3A1.7 1.7 0 1 1 895.9 192.1"/>
<path d="M893.0 185.3A3.4 3.4 0 1 1 899.7 185.9"/>
<path d="M924.7 223.1A2.7 2.7 0 1 1 927.8 218.9"/>
<path d="M905.3 177.9A2.8 2.8 0 1 1 901.3 181.6"/>
<path d="M925.3 178.2A1.8 1.8 0 1 1 921.9 177.3"/>
<path d="M912.7 173.1A1.5 1.5 0 1 1 914.2 170.5"/>
<path d="M893.0 168.1A2.8 2.8 0 1 1 897.2 171.7"/>
<path d="M899.8 218.5A1.9 1.9 0 1 1 896.2 219.7"/>
<path d="M889.6 203.3A2.9 2.9 0 1 1 889.2 209.1"/>
<path d="M907.4 230.2A2.8 2.8 0 1 1 908.4 235.6"/>
<path d="M885.6 167.1A2.4 2.4 0 1 1 889.9 169.2"/>
<path d="M886.6 220.8A2.2 2.2 0 1 1 890.9 220.9"/>
<path d="M908.1 228.9A2.1 2.1 0 1 1 911.7 231.1"/>
<path d="M913.9 214.4A2.1 2.1 0 1 1 915.4 210.4"/>
<path d="M909.4 209.2A2.8 2.8 0 1 1 906.5 204.5"/>
<path d="M907.8 204.4A1.9 1.9 0 1 1 905.3 201.6"/>
<path d="M929.8 154.4A2.5 2.5 0 1 1 931.9 150.0"/>
<path d="M884.1 176.7A1.8 1.8 0 1 1 887.3 175.2"/>
<path d="M928.7 155.5A2.2 2.2 0 1 1 929.5 159.7"/>
<path d="M914.9 153.9A2.0 2.0 0 1 1 916.3 150.3"/>
<path d="M926.7 192.3A2.0 2.0 0 1 1 930.7 192.5"/>
<path d="M907.7 161.4A2.8 2.8 0 1 1 907.8 167.0"/>
<path d="M910.8 200.2A3.0 3.0 0 1 1 904.8 200.8"/>
<path d="M913.3 152.1A2.5 2.5 0 1 1 915.1 156.7"/>
<path d="M898.9 213.5A2.2 2.2 0 1 1 901.6 217.0"/>
<path d="M913.8 210.4A3.4 3.4 0 1 1 914.4 217.0"/>
<path d="M918.0 215.6A2.0 2.0 0 1 1 920.4 218.6"/>
<path d="M915.5 158.8A3.0 3.0 0 1 1 915.7 152.9"/>
<path d="M908.9 196.8A2.9 2.9 0 1 1 907.3 202.4"/>
<path d="M905.2 238.3A2.4 2.4 0 1 1 909.1 240.9"/>
<path d="M936.4 180.0A2.9 2.9 0 1 1 930.7 180.5"/>
<path d="M885.5 223.1A2.8 2.8 0 1 1 890.5 225.4"/>
<path d="M921.7 231.9A1.8 1.8 0 1 1 925.2 232.2"/>
<path d="M915.9 213.2A3.4 3.4 0 1 1 912.6 219.0"/>
<path d="M927.4 154.9A2.4 2.4 0 1 1 923.1 156.6"/>
<path d="M931.6 219.7A2.2 2.2 0 1 1 930.3 223.7"/>
<path d="M912.4 211.3A2.8 2.8 0 1 1 908.1 214.7"/>
<path d="M917.2 242.3A2.5 2.5 0 1 1 922.1 243.0"/>
<path d="M918.4 203.0A1.6 1.6 0 1 1 915.3 203.2"/>
<path d="M900.5 198.9A1.6 1.6 0 1 1 899.9 195.9"/>
<path d="M931.2 174.4A2.1 2.1 0 1 1 929.0 177.9"/>
<path d="M898.2 211.8A2.6 2.6 0 1 1 893.5 214.2"/>
<path d="M906.5 182.7A2.0 2.0 0 1 1 909.6 180.3"/>
<path d="M883.3 163.0A1.8 1.8 0 1 1 885.2 160.1"/>
<path d="M922.4 241.7A2.2 2.2 0 1 1 923.2 237.4"/>
<path d="M900.5 211.4A2.5 2.5 0 1 1 897.5 207.6"/>
<path d="M910.6 173.8A1.8 1.8 0 1 1 909.2 177.0"/>
<path d="M886.3 190.9A3.0 3.0 0 1 1 891.7 193.5"/>
<path d="M930.9 181.1A3.4 3.4 0 1 1 924.9 178.1"/>
<path d="M928.7 191.8A1.5 1.5 0 1 1 929.4 188.9"/>
<path d="M934.5 215.3A3.0 3.0 0 1 1 931.4 220.2"/>
<path d="M886.4 177.8A2.4 2.4 0 1 1 881.9 179.7"/>
<path d="M926.1 163.0A3.5 3.5 0 1 1 932.1 166.4"/>
</g>
<path d="M931.0 211.0 L933.0 214.5 L886.0 245.5 L885.0 242.0 Z" fill="#8a8894" />
<path d="M947.0 272.0 L966.0 276.0 L978.0 282.0 L992.0 290.0 L1001.0 309.0 L1010.3 330.4 L976.7 358.0 L963.0 345.0 L949.2 295.3 Z" fill="#8e8e98" />
<clipPath id="brclip"><path d="M947.0 272.0 L966.0 276.0 L978.0 282.0 L992.0 290.0 L1001.0 309.0 L1010.3 330.4 L976.7 358.0 L963.0 345.0 L949.2 295.3 Z"/></clipPath>
<g clip-path="url(#brclip)" fill="none" stroke="#cfcfd6" stroke-width="1.3">
<path d="M962.0 287.9A4.3 2.6 0 0 1 968.5 284.8"/>
<path d="M969.4 307.1A5.8 3.5 0 0 1 976.8 300.6"/>
<path d="M963.2 344.4A3.7 2.2 0 0 1 966.2 338.9"/>
<path d="M949.9 296.4A6.0 3.6 0 0 1 959.8 298.3"/>
<path d="M974.4 333.9A5.0 3.0 0 0 1 982.1 330.3"/>
<path d="M972.2 295.6A3.1 1.9 0 0 1 967.1 294.6"/>
<path d="M969.7 287.1A5.0 3.0 0 0 1 969.5 278.6"/>
<path d="M963.1 310.8A4.5 2.7 0 0 1 957.6 305.7"/>
<path d="M1001.9 321.3A3.2 1.9 0 0 1 996.5 321.5"/>
<path d="M1000.5 323.3A3.9 2.3 0 0 1 1005.2 327.8"/>
<path d="M947.8 346.4A5.8 3.5 0 0 1 956.5 350.7"/>
<path d="M946.4 312.2A5.5 3.3 0 0 1 955.7 312.3"/>
<path d="M957.4 299.9A3.2 1.9 0 0 1 962.2 297.6"/>
<path d="M963.5 313.4A5.7 3.4 0 0 1 960.0 322.3"/>
<path d="M980.7 342.0A3.4 2.0 0 0 1 977.2 346.5"/>
<path d="M998.3 325.1A5.7 3.4 0 0 1 995.7 315.9"/>
<path d="M1009.8 302.2A5.8 3.5 0 0 1 1010.1 312.0"/>
<path d="M1003.5 341.9A3.2 1.9 0 0 1 1001.4 336.8"/>
<path d="M992.2 354.1A5.0 3.0 0 0 1 984.2 356.8"/>
<path d="M969.4 312.4A3.5 2.1 0 0 1 965.5 308.0"/>
<path d="M975.7 313.1A3.8 2.3 0 0 1 978.5 307.3"/>
<path d="M1009.6 326.4A5.3 3.2 0 0 1 1004.8 333.8"/>
<path d="M950.9 353.8A3.3 2.0 0 0 1 946.6 350.4"/>
<path d="M987.6 341.5A4.8 2.9 0 0 1 993.7 336.1"/>
<path d="M992.0 318.9A3.6 2.1 0 0 1 987.8 314.5"/>
<path d="M960.3 283.0A5.9 3.5 0 0 1 954.1 290.7"/>
<path d="M969.7 310.4A3.8 2.3 0 0 1 972.0 316.4"/>
<path d="M982.6 292.8A5.7 3.4 0 0 1 977.7 300.9"/>
<path d="M948.4 315.0A3.7 2.2 0 0 1 954.3 316.8"/>
<path d="M966.5 302.8A3.9 2.3 0 0 1 973.0 303.5"/>
</g>
<g clip-path="url(#brclip)" fill="none" stroke="#45454c" stroke-width="1">
<path d="M973.2 320.9A5.0 3.0 0 0 1 979.5 315.2"/>
<path d="M1009.7 313.9A5.4 3.2 0 0 1 1004.9 321.6"/>
<path d="M984.0 322.8A5.4 3.2 0 0 1 990.6 329.0"/>
<path d="M963.0 315.0A3.5 2.1 0 0 1 957.8 317.4"/>
<path d="M993.0 308.3A3.8 2.3 0 0 1 987.1 310.8"/>
<path d="M945.6 336.0A4.1 2.4 0 0 1 949.5 330.3"/>
<path d="M989.5 357.8A5.1 3.1 0 0 1 983.6 351.6"/>
<path d="M1004.4 292.6A4.7 2.8 0 0 1 1012.0 295.2"/>
<path d="M964.0 346.7A4.8 2.9 0 0 1 970.0 352.2"/>
<path d="M953.5 344.3A3.9 2.3 0 0 1 959.9 345.4"/>
<path d="M990.4 310.5A3.8 2.3 0 0 1 990.0 304.1"/>
<path d="M1002.6 331.6A4.4 2.6 0 0 1 1009.9 330.3"/>
<path d="M989.8 304.5A3.2 1.9 0 0 1 984.4 303.9"/>
<path d="M978.6 324.6A5.9 3.6 0 0 1 988.4 326.5"/>
<path d="M995.2 361.1A4.5 2.7 0 0 1 998.9 354.5"/>
<path d="M971.6 308.6A5.3 3.2 0 0 1 980.4 307.7"/>
<path d="M955.3 351.9A4.6 2.7 0 0 1 959.5 358.4"/>
<path d="M984.4 331.0A4.7 2.8 0 0 1 976.5 329.8"/>
<path d="M958.6 341.9A4.0 2.4 0 0 1 952.0 340.3"/>
<path d="M992.9 343.8A5.3 3.2 0 0 1 995.5 335.3"/>
<path d="M954.1 338.1A3.6 2.2 0 0 1 959.5 340.9"/>
<path d="M987.2 301.7A3.0 1.8 0 0 1 992.3 301.7"/>
</g>
<path d="M932.5 245.5 L935.5 244.0 L950.0 268.0 L947.0 270.0 Z" fill="#c0c0c8" />
<path d="M945.0 267.0 L951.0 266.0 L962.0 282.0 L950.0 286.0 Z" fill="#9a9aa4" />
<path d="M727.5 156.0 L888.7 154.0 L896.0 159.7 L889.0 253.0 L885.0 339.0 L743.0 337.0 L736.5 250.0 L731.5 228.5 Z" fill="#030303" />
<path d="M738.3 250.0 L770.0 250.0 L778.0 270.0 L786.7 303.0 L800.0 340.0 L744.0 336.7 Z" fill="#1e0428" />
<path d="M808.5 165.4 L888.7 154.0 L887.0 244.0 L883.0 333.0 L800.0 341.7 L786.7 303.0 L778.0 270.0 L770.0 250.0 L758.8 243.8 L774.0 209.4 L789.0 182.6 Z" fill="#262626" id="stole"/>
<clipPath id="stclip"><path d="M808.5 165.4 L888.7 154.0 L887.0 244.0 L883.0 333.0 L800.0 341.7 L786.7 303.0 L778.0 270.0 L770.0 250.0 L758.8 243.8 L774.0 209.4 L789.0 182.6 Z"/></clipPath>
<g clip-path="url(#stclip)" stroke-linecap="round">
<ellipse cx="861.1" cy="264.1" rx="7.9" ry="5.4" fill="#0a0a0a" opacity="0.5"/>
<ellipse cx="855.8" cy="239.7" rx="5.9" ry="5.8" fill="#0a0a0a" opacity="0.5"/>
<ellipse cx="810.7" cy="257.7" rx="6.0" ry="9.5" fill="#0a0a0a" opacity="0.5"/>
<ellipse cx="844.4" cy="250.0" rx="6.3" ry="7.8" fill="#0a0a0a" opacity="0.5"/>
<ellipse cx="826.7" cy="212.7" rx="6.4" ry="6.3" fill="#0a0a0a" opacity="0.5"/>
<ellipse cx="793.4" cy="197.2" rx="4.8" ry="8.1" fill="#0a0a0a" opacity="0.5"/>
<ellipse cx="849.1" cy="248.4" rx="7.1" ry="6.0" fill="#0a0a0a" opacity="0.5"/>
<ellipse cx="821.6" cy="290.2" rx="6.4" ry="6.6" fill="#0a0a0a" opacity="0.5"/>
<ellipse cx="870.0" cy="174.2" rx="5.7" ry="9.1" fill="#0a0a0a" opacity="0.5"/>
<ellipse cx="869.1" cy="200.9" rx="7.0" ry="7.2" fill="#0a0a0a" opacity="0.5"/>
<ellipse cx="874.2" cy="222.5" rx="6.3" ry="7.9" fill="#0a0a0a" opacity="0.5"/>
<ellipse cx="879.1" cy="224.3" rx="4.9" ry="4.7" fill="#0a0a0a" opacity="0.5"/>
<ellipse cx="851.5" cy="181.3" rx="7.2" ry="4.9" fill="#0a0a0a" opacity="0.5"/>
<ellipse cx="807.2" cy="322.0" rx="5.5" ry="8.5" fill="#0a0a0a" opacity="0.5"/>
<ellipse cx="821.1" cy="208.8" rx="4.8" ry="9.9" fill="#0a0a0a" opacity="0.5"/>
<ellipse cx="807.3" cy="314.8" rx="7.4" ry="8.1" fill="#0a0a0a" opacity="0.5"/>
<ellipse cx="813.9" cy="286.9" rx="7.5" ry="7.6" fill="#0a0a0a" opacity="0.5"/>
<ellipse cx="809.8" cy="267.6" rx="7.8" ry="7.5" fill="#0a0a0a" opacity="0.5"/>
<ellipse cx="803.4" cy="202.4" rx="6.2" ry="4.3" fill="#0a0a0a" opacity="0.5"/>
<ellipse cx="790.1" cy="229.8" rx="4.3" ry="7.0" fill="#0a0a0a" opacity="0.5"/>
<ellipse cx="796.6" cy="259.5" rx="6.4" ry="5.9" fill="#0a0a0a" opacity="0.5"/>
<ellipse cx="842.4" cy="254.3" rx="6.9" ry="7.5" fill="#0a0a0a" opacity="0.5"/>
<ellipse cx="847.4" cy="260.2" rx="7.1" ry="4.6" fill="#0a0a0a" opacity="0.5"/>
<ellipse cx="800.3" cy="308.5" rx="7.2" ry="4.0" fill="#0a0a0a" opacity="0.5"/>
<ellipse cx="870.5" cy="267.4" rx="7.3" ry="8.2" fill="#0a0a0a" opacity="0.5"/>
<path d="M806.5 172.2l-2.7 -4.6" stroke="#7b7b75" stroke-width="1.3" opacity="0.85"/>
<path d="M883.2 240.3l3.8 6.9" stroke="#6f6f69" stroke-width="1.1" opacity="0.85"/>
<path d="M855.0 225.4l2.4 3.7" stroke="#9a9a94" stroke-width="1.1" opacity="0.85"/>
<path d="M785.3 256.4l-3.6 0.8" stroke="#c0c0ba" stroke-width="1.2" opacity="0.85"/>
<path d="M802.0 170.7l-1.4 -4.6" stroke="#b3b3ad" stroke-width="1.9" opacity="0.85"/>
<path d="M850.3 185.9l-0.6 -4.2" stroke="#82827c" stroke-width="1.1" opacity="0.85"/>
<path d="M848.1 251.9l1.2 3.5" stroke="#65655f" stroke-width="1.3" opacity="0.85"/>
<path d="M765.3 251.9l-4.3 0.7" stroke="#b6b6b0" stroke-width="1.8" opacity="0.85"/>
<path d="M819.6 322.5l1.6 6.6" stroke="#85857f" stroke-width="1.8" opacity="0.85"/>
<path d="M851.9 233.6l2.8 4.2" stroke="#868680" stroke-width="1.5" opacity="0.85"/>
<path d="M755.7 241.2l-6.4 -1.1" stroke="#a2a29c" stroke-width="1.5" opacity="0.85"/>
<path d="M891.9 304.1l-2.5 5.2" stroke="#9a9a94" stroke-width="1.2" opacity="0.85"/>
<path d="M761.0 164.2l-3.7 -4.4" stroke="#797973" stroke-width="1.0" opacity="0.85"/>
<path d="M789.3 174.8l-2.6 -3.0" stroke="#6d6d67" stroke-width="1.5" opacity="0.85"/>
<path d="M772.9 312.5l-1.5 6.5" stroke="#7b7b75" stroke-width="1.3" opacity="0.85"/>
<path d="M814.7 305.8l1.7 5.6" stroke="#adada7" stroke-width="1.1" opacity="0.85"/>
<path d="M789.2 223.5l-7.4 1.7" stroke="#9b9b95" stroke-width="1.2" opacity="0.85"/>
<path d="M802.1 249.0l-2.4 2.3" stroke="#9f9f99" stroke-width="1.8" opacity="0.85"/>
<path d="M878.1 266.5l2.8 5.0" stroke="#6f6f69" stroke-width="1.4" opacity="0.85"/>
<path d="M823.1 188.5l-2.1 -5.8" stroke="#81817b" stroke-width="1.1" opacity="0.85"/>
<path d="M841.4 257.8l-0.3 5.0" stroke="#9d9d97" stroke-width="1.8" opacity="0.85"/>
<path d="M846.4 197.5l1.8 -3.3" stroke="#a2a29c" stroke-width="1.2" opacity="0.85"/>
<path d="M822.3 238.0l-3.4 7.0" stroke="#53534d" stroke-width="1.0" opacity="0.85"/>
<path d="M856.2 222.4l5.2 6.0" stroke="#73736d" stroke-width="1.6" opacity="0.85"/>
<path d="M809.3 344.6l-0.6 3.6" stroke="#8c8c86" stroke-width="1.6" opacity="0.85"/>
<path d="M776.0 167.2l-3.2 -5.4" stroke="#5a5a54" stroke-width="1.6" opacity="0.85"/>
<path d="M890.5 302.6l-1.0 7.6" stroke="#92928c" stroke-width="1.0" opacity="0.85"/>
<path d="M774.9 335.7l1.2 3.3" stroke="#a2a29c" stroke-width="1.3" opacity="0.85"/>
<path d="M862.1 291.6l0.6 5.3" stroke="#81817b" stroke-width="1.4" opacity="0.85"/>
<path d="M886.8 306.3l-1.5 4.5" stroke="#bbbbb5" stroke-width="1.8" opacity="0.85"/>
<path d="M764.7 271.9l-4.6 3.5" stroke="#b7b7b1" stroke-width="1.5" opacity="0.85"/>
<path d="M808.7 185.6l-3.0 -2.8" stroke="#bcbcb6" stroke-width="1.4" opacity="0.85"/>
<path d="M847.3 342.2l-0.2 4.4" stroke="#95958f" stroke-width="1.9" opacity="0.85"/>
<path d="M806.5 302.3l0.8 3.8" stroke="#81817b" stroke-width="1.0" opacity="0.85"/>
<path d="M874.9 344.2l-2.7 6.7" stroke="#787872" stroke-width="1.2" opacity="0.85"/>
<path d="M823.1 175.8l-2.1 -2.9" stroke="#6a6a64" stroke-width="1.5" opacity="0.85"/>
<path d="M796.2 328.5l1.5 6.6" stroke="#82827c" stroke-width="1.8" opacity="0.85"/>
<path d="M851.3 296.8l1.0 7.7" stroke="#53534d" stroke-width="1.2" opacity="0.85"/>
<path d="M778.5 170.3l-6.0 -2.8" stroke="#8d8d87" stroke-width="1.5" opacity="0.85"/>
<path d="M825.2 220.3l-5.8 5.1" stroke="#a7a7a1" stroke-width="1.0" opacity="0.85"/>
<path d="M782.8 302.7l-0.9 3.6" stroke="#b2b2ac" stroke-width="1.1" opacity="0.85"/>
<path d="M773.9 295.7l0.8 6.6" stroke="#7e7e78" stroke-width="1.3" opacity="0.85"/>
<path d="M876.6 344.4l0.2 3.8" stroke="#c2c2bc" stroke-width="1.5" opacity="0.85"/>
<path d="M870.3 245.8l0.8 3.5" stroke="#75756f" stroke-width="1.8" opacity="0.85"/>
<path d="M827.9 192.7l-1.3 -5.5" stroke="#51514b" stroke-width="1.5" opacity="0.85"/>
<path d="M891.1 272.1l4.1 4.6" stroke="#9b9b95" stroke-width="1.4" opacity="0.85"/>
<path d="M878.8 322.9l-0.9 3.9" stroke="#91918b" stroke-width="1.2" opacity="0.85"/>
<path d="M783.1 335.3l-1.6 4.7" stroke="#4f4f49" stroke-width="1.1" opacity="0.85"/>
<path d="M843.4 288.3l-0.5 3.8" stroke="#9f9f99" stroke-width="1.7" opacity="0.85"/>
<path d="M755.3 201.9l-3.2 0.9" stroke="#cacac4" stroke-width="1.6" opacity="0.85"/>
<path d="M842.0 233.3l-4.6 6.3" stroke="#6b6b65" stroke-width="1.7" opacity="0.85"/>
<path d="M792.6 295.4l3.2 6.8" stroke="#c9c9c3" stroke-width="1.7" opacity="0.85"/>
<path d="M795.2 290.9l0.8 5.3" stroke="#7d7d77" stroke-width="1.0" opacity="0.85"/>
<path d="M814.6 196.3l-3.4 -1.4" stroke="#4e4e48" stroke-width="1.9" opacity="0.85"/>
<path d="M762.6 324.1l0.4 5.5" stroke="#585852" stroke-width="1.4" opacity="0.85"/>
<path d="M756.0 208.2l-3.6 -1.6" stroke="#898983" stroke-width="1.8" opacity="0.85"/>
<path d="M798.2 173.0l-2.2 -4.2" stroke="#a0a09a" stroke-width="1.8" opacity="0.85"/>
<path d="M840.2 188.5l-1.9 -5.1" stroke="#9b9b95" stroke-width="1.9" opacity="0.85"/>
<path d="M792.1 191.4l-2.9 -1.2" stroke="#85857f" stroke-width="1.9" opacity="0.85"/>
<path d="M824.8 221.8l-5.5 0.7" stroke="#898983" stroke-width="1.5" opacity="0.85"/>
<path d="M792.7 283.1l-3.6 3.1" stroke="#9e9e98" stroke-width="1.1" opacity="0.85"/>
<path d="M821.5 246.0l-1.4 5.1" stroke="#ababa5" stroke-width="1.7" opacity="0.85"/>
<path d="M781.8 179.5l-2.7 -2.8" stroke="#80807a" stroke-width="1.0" opacity="0.85"/>
<path d="M879.5 190.8l5.7 -3.2" stroke="#53534d" stroke-width="1.5" opacity="0.85"/>
<path d="M800.3 158.1l-5.6 -2.6" stroke="#90908a" stroke-width="1.6" opacity="0.85"/>
<path d="M869.2 292.8l-1.4 6.0" stroke="#75756f" stroke-width="1.8" opacity="0.85"/>
<path d="M819.8 253.6l-4.2 3.3" stroke="#a8a8a2" stroke-width="1.7" opacity="0.85"/>
<path d="M826.1 264.1l-0.7 7.0" stroke="#c1c1bb" stroke-width="0.9" opacity="0.85"/>
<path d="M759.5 241.6l-4.4 1.7" stroke="#777771" stroke-width="1.7" opacity="0.85"/>
<path d="M834.7 329.7l-0.8 6.8" stroke="#8b8b85" stroke-width="1.1" opacity="0.85"/>
<path d="M854.1 227.9l1.7 4.1" stroke="#7a7a74" stroke-width="1.2" opacity="0.85"/>
<path d="M774.0 264.9l-2.7 2.6" stroke="#65655f" stroke-width="0.9" opacity="0.85"/>
<path d="M869.4 155.1l0.7 -4.3" stroke="#50504a" stroke-width="1.2" opacity="0.85"/>
<path d="M889.9 171.1l4.1 -1.6" stroke="#95958f" stroke-width="1.2" opacity="0.85"/>
<path d="M877.7 332.2l0.8 6.5" stroke="#979791" stroke-width="1.2" opacity="0.85"/>
<path d="M809.4 162.0l-1.3 -4.8" stroke="#8f8f89" stroke-width="1.1" opacity="0.85"/>
<path d="M852.6 231.3l0.7 4.4" stroke="#5d5d57" stroke-width="1.5" opacity="0.85"/>
<path d="M856.1 160.3l3.1 -4.6" stroke="#898983" stroke-width="1.0" opacity="0.85"/>
<path d="M794.5 264.5l-6.4 4.5" stroke="#898983" stroke-width="1.0" opacity="0.85"/>
<path d="M801.7 221.4l-6.4 4.1" stroke="#bdbdb7" stroke-width="1.0" opacity="0.85"/>
<path d="M766.2 341.2l1.1 3.9" stroke="#51514b" stroke-width="1.4" opacity="0.85"/>
<path d="M861.3 163.9l-0.4 -6.9" stroke="#bebeb8" stroke-width="1.8" opacity="0.85"/>
<path d="M764.6 301.2l1.4 6.5" stroke="#91918b" stroke-width="1.1" opacity="0.85"/>
<path d="M822.3 234.0l-4.5 3.4" stroke="#a4a49e" stroke-width="1.2" opacity="0.85"/>
<path d="M787.9 303.2l1.9 4.1" stroke="#95958f" stroke-width="1.1" opacity="0.85"/>
<path d="M771.6 324.2l0.7 7.2" stroke="#a8a8a2" stroke-width="1.8" opacity="0.85"/>
<path d="M763.0 283.1l-6.9 2.0" stroke="#9e9e98" stroke-width="1.7" opacity="0.85"/>
<path d="M794.9 259.6l-5.3 1.6" stroke="#6f6f69" stroke-width="1.9" opacity="0.85"/>
<path d="M798.3 204.2l-6.5 0.4" stroke="#90908a" stroke-width="1.1" opacity="0.85"/>
<path d="M772.1 181.6l-4.6 -5.2" stroke="#b5b5af" stroke-width="1.5" opacity="0.85"/>
<path d="M864.7 214.4l4.0 1.6" stroke="#9c9c96" stroke-width="1.5" opacity="0.85"/>
<path d="M762.1 260.4l-5.1 0.6" stroke="#bdbdb7" stroke-width="0.9" opacity="0.85"/>
<path d="M785.6 185.8l-2.8 -3.1" stroke="#969690" stroke-width="1.4" opacity="0.85"/>
<path d="M797.6 314.4l0.3 3.7" stroke="#cbcbc5" stroke-width="1.0" opacity="0.85"/>
<path d="M768.9 155.7l-3.7 -0.7" stroke="#c5c5bf" stroke-width="1.2" opacity="0.85"/>
<path d="M853.0 191.6l-0.6 -3.6" stroke="#c9c9c3" stroke-width="1.4" opacity="0.85"/>
<path d="M789.2 159.2l-3.2 -2.2" stroke="#8c8c86" stroke-width="1.6" opacity="0.85"/>
<path d="M801.8 259.4l-2.4 2.2" stroke="#c2c2bc" stroke-width="1.8" opacity="0.85"/>
<path d="M833.9 242.4l-3.5 4.7" stroke="#a5a59f" stroke-width="1.3" opacity="0.85"/>
<path d="M809.8 291.0l1.0 3.9" stroke="#b7b7b1" stroke-width="1.2" opacity="0.85"/>
<path d="M819.2 295.1l-1.4 4.2" stroke="#61615b" stroke-width="1.3" opacity="0.85"/>
<path d="M860.4 298.6l-1.8 4.1" stroke="#5f5f59" stroke-width="1.8" opacity="0.85"/>
<path d="M867.3 236.9l3.7 6.1" stroke="#71716b" stroke-width="1.6" opacity="0.85"/>
<path d="M881.5 303.8l-3.7 7.1" stroke="#afafa9" stroke-width="1.4" opacity="0.85"/>
<path d="M877.4 320.5l-0.4 3.7" stroke="#82827c" stroke-width="1.5" opacity="0.85"/>
<path d="M888.7 248.9l2.5 3.8" stroke="#9c9c96" stroke-width="1.8" opacity="0.85"/>
<path d="M757.8 174.2l-4.5 -2.5" stroke="#aeaea8" stroke-width="1.3" opacity="0.85"/>
<path d="M774.0 218.3l-5.5 -0.5" stroke="#484842" stroke-width="1.9" opacity="0.85"/>
<path d="M765.8 204.2l-5.4 -3.5" stroke="#878781" stroke-width="1.6" opacity="0.85"/>
<path d="M830.7 254.9l-2.1 2.9" stroke="#61615b" stroke-width="1.5" opacity="0.85"/>
<path d="M761.3 320.6l1.3 5.3" stroke="#9c9c96" stroke-width="1.1" opacity="0.85"/>
<path d="M829.5 339.7l1.1 3.4" stroke="#494943" stroke-width="1.9" opacity="0.85"/>
<path d="M770.9 274.8l-3.7 1.9" stroke="#6b6b65" stroke-width="1.5" opacity="0.85"/>
<path d="M795.2 268.1l-1.9 6.4" stroke="#d0d0ca" stroke-width="1.3" opacity="0.85"/>
<path d="M785.5 169.5l-4.8 -3.3" stroke="#73736d" stroke-width="1.8" opacity="0.85"/>
<path d="M760.3 329.6l0.1 3.2" stroke="#aeaea8" stroke-width="1.9" opacity="0.85"/>
<path d="M836.7 340.8l-2.6 7.2" stroke="#8e8e88" stroke-width="1.4" opacity="0.85"/>
<path d="M759.8 335.5l-0.4 3.9" stroke="#84847e" stroke-width="1.2" opacity="0.85"/>
<path d="M756.3 228.0l-6.5 -0.5" stroke="#c7c7c1" stroke-width="1.8" opacity="0.85"/>
<path d="M790.1 269.1l-3.3 1.7" stroke="#82827c" stroke-width="1.5" opacity="0.85"/>
<path d="M798.2 328.6l3.1 6.8" stroke="#cecec8" stroke-width="1.9" opacity="0.85"/>
<path d="M801.7 312.5l2.6 5.8" stroke="#d4d4ce" stroke-width="0.9" opacity="0.85"/>
<path d="M869.8 278.7l3.7 4.1" stroke="#92928c" stroke-width="1.1" opacity="0.85"/>
<path d="M878.3 294.3l-0.8 7.7" stroke="#d1d1cb" stroke-width="1.8" opacity="0.85"/>
<path d="M762.5 232.1l-3.4 -0.2" stroke="#b2b2ac" stroke-width="1.5" opacity="0.85"/>
<path d="M826.0 155.6l-0.6 -5.0" stroke="#8d8d87" stroke-width="1.7" opacity="0.85"/>
<path d="M819.0 264.5l-0.7 4.2" stroke="#adada7" stroke-width="1.7" opacity="0.85"/>
<path d="M807.5 268.1l-2.6 3.4" stroke="#83837d" stroke-width="1.9" opacity="0.85"/>
<path d="M876.2 173.6l4.4 -2.8" stroke="#9e9e98" stroke-width="1.5" opacity="0.85"/>
<path d="M837.8 326.7l0.8 3.3" stroke="#7e7e78" stroke-width="1.4" opacity="0.85"/>
<path d="M780.9 223.9l-6.5 0.3" stroke="#92928c" stroke-width="1.0" opacity="0.85"/>
<path d="M862.1 304.9l3.0 5.7" stroke="#9c9c96" stroke-width="1.2" opacity="0.85"/>
<path d="M767.3 200.2l-6.9 -1.6" stroke="#6e6e68" stroke-width="1.5" opacity="0.85"/>
<path d="M796.6 158.3l-3.4 -1.7" stroke="#53534d" stroke-width="1.9" opacity="0.85"/>
<path d="M804.3 297.7l1.9 7.5" stroke="#74746e" stroke-width="1.9" opacity="0.85"/>
<path d="M861.8 318.4l-0.9 5.8" stroke="#979791" stroke-width="1.3" opacity="0.85"/>
<path d="M774.4 253.3l-5.1 5.4" stroke="#a9a9a3" stroke-width="1.0" opacity="0.85"/>
<path d="M795.6 282.7l-4.0 1.9" stroke="#b3b3ad" stroke-width="1.5" opacity="0.85"/>
<path d="M804.6 196.8l-5.1 0.2" stroke="#666660" stroke-width="1.1" opacity="0.85"/>
<path d="M799.1 176.5l-7.1 -3.5" stroke="#8b8b85" stroke-width="1.5" opacity="0.85"/>
<path d="M881.9 320.0l1.0 6.0" stroke="#82827c" stroke-width="1.8" opacity="0.85"/>
<path d="M791.7 344.9l-1.4 5.7" stroke="#74746e" stroke-width="1.0" opacity="0.85"/>
<path d="M869.7 244.7l6.6 4.0" stroke="#9a9a94" stroke-width="1.6" opacity="0.85"/>
<path d="M808.9 288.8l-0.6 4.7" stroke="#aaaaa4" stroke-width="1.8" opacity="0.85"/>
<path d="M844.1 340.3l-1.5 5.7" stroke="#999993" stroke-width="1.1" opacity="0.85"/>
<path d="M757.3 156.1l-5.3 -2.8" stroke="#8d8d87" stroke-width="1.8" opacity="0.85"/>
<path d="M784.4 333.9l-0.1 3.7" stroke="#d2d2cc" stroke-width="1.1" opacity="0.85"/>
<path d="M847.9 200.7l3.5 -6.6" stroke="#bcbcb6" stroke-width="1.6" opacity="0.85"/>
<path d="M799.9 274.5l-2.5 5.0" stroke="#8f8f89" stroke-width="1.3" opacity="0.85"/>
<path d="M807.4 153.7l-2.3 -2.7" stroke="#85857f" stroke-width="1.6" opacity="0.85"/>
<path d="M856.9 231.1l2.9 5.2" stroke="#90908a" stroke-width="1.9" opacity="0.85"/>
<path d="M805.2 251.9l-1.7 3.6" stroke="#70706a" stroke-width="1.1" opacity="0.85"/>
<path d="M769.8 329.3l-0.3 4.4" stroke="#b8b8b2" stroke-width="1.6" opacity="0.85"/>
<path d="M813.5 154.3l-5.4 -3.9" stroke="#51514b" stroke-width="1.3" opacity="0.85"/>
<path d="M826.0 222.3l-7.8 -0.6" stroke="#a9a9a3" stroke-width="1.4" opacity="0.85"/>
<path d="M885.4 286.9l2.9 2.4" stroke="#63635d" stroke-width="1.3" opacity="0.85"/>
<path d="M838.3 190.7l-2.2 -4.8" stroke="#babab4" stroke-width="1.8" opacity="0.85"/>
<path d="M793.5 264.1l-2.9 4.9" stroke="#7a7a74" stroke-width="1.7" opacity="0.85"/>
<path d="M787.2 302.4l0.5 7.4" stroke="#9d9d97" stroke-width="1.2" opacity="0.85"/>
<path d="M794.5 182.7l-3.7 -0.4" stroke="#80807a" stroke-width="1.2" opacity="0.85"/>
<path d="M830.9 246.5l-4.5 4.8" stroke="#70706a" stroke-width="1.1" opacity="0.85"/>
<path d="M770.3 249.7l-4.1 0.9" stroke="#b8b8b2" stroke-width="1.8" opacity="0.85"/>
<path d="M819.8 173.4l-1.1 -3.2" stroke="#9c9c96" stroke-width="1.6" opacity="0.85"/>
<path d="M757.8 178.7l-6.9 -2.4" stroke="#afafa9" stroke-width="1.3" opacity="0.85"/>
<path d="M756.6 255.5l-6.1 4.6" stroke="#7d7d77" stroke-width="1.3" opacity="0.85"/>
<path d="M847.1 331.8l-0.6 3.6" stroke="#62625c" stroke-width="1.2" opacity="0.85"/>
<path d="M801.4 286.2l-3.4 3.9" stroke="#dadad4" stroke-width="1.8" opacity="0.85"/>
<path d="M769.4 275.6l-4.5 3.8" stroke="#bfbfb9" stroke-width="1.5" opacity="0.85"/>
<path d="M849.4 322.2l-3.4 6.9" stroke="#5e5e58" stroke-width="1.9" opacity="0.85"/>
<path d="M777.8 321.5l0.7 4.4" stroke="#6f6f69" stroke-width="1.0" opacity="0.85"/>
<path d="M770.6 183.1l-6.6 -3.1" stroke="#d4d4ce" stroke-width="1.3" opacity="0.85"/>
<path d="M779.2 324.8l-1.2 3.4" stroke="#7b7b75" stroke-width="1.6" opacity="0.85"/>
<path d="M768.3 318.7l-1.0 3.6" stroke="#b5b5af" stroke-width="1.4" opacity="0.85"/>
<path d="M807.5 308.8l-0.6 3.1" stroke="#979791" stroke-width="1.1" opacity="0.85"/>
<path d="M842.4 218.6l-2.6 2.0" stroke="#999993" stroke-width="1.6" opacity="0.85"/>
<path d="M841.1 155.1l0.5 -6.9" stroke="#9d9d97" stroke-width="1.9" opacity="0.85"/>
<path d="M787.6 171.7l-5.8 -1.0" stroke="#95958f" stroke-width="1.1" opacity="0.85"/>
<path d="M863.3 305.8l-0.5 6.3" stroke="#71716b" stroke-width="1.3" opacity="0.85"/>
<path d="M826.4 202.9l-4.7 -1.8" stroke="#acaca6" stroke-width="1.9" opacity="0.85"/>
<path d="M825.1 270.7l-3.8 6.1" stroke="#83837d" stroke-width="1.5" opacity="0.85"/>
<path d="M768.2 332.8l2.0 7.1" stroke="#c8c8c2" stroke-width="1.3" opacity="0.85"/>
<path d="M839.9 315.0l-1.4 2.8" stroke="#9c9c96" stroke-width="1.3" opacity="0.85"/>
<path d="M770.9 208.5l-5.3 1.1" stroke="#b8b8b2" stroke-width="1.0" opacity="0.85"/>
<path d="M758.1 267.6l-3.8 6.1" stroke="#ababa5" stroke-width="1.5" opacity="0.85"/>
<path d="M788.3 330.0l-0.4 7.5" stroke="#95958f" stroke-width="1.5" opacity="0.85"/>
<path d="M884.0 235.3l4.7 6.5" stroke="#676761" stroke-width="1.8" opacity="0.85"/>
<path d="M859.3 191.0l0.7 -7.2" stroke="#5e5e58" stroke-width="1.7" opacity="0.85"/>
<path d="M864.0 342.4l1.4 3.3" stroke="#b5b5af" stroke-width="1.0" opacity="0.85"/>
<path d="M855.9 342.3l-2.4 5.7" stroke="#d3d3cd" stroke-width="1.6" opacity="0.85"/>
<path d="M816.1 158.9l-0.8 -3.6" stroke="#a3a39d" stroke-width="1.2" opacity="0.85"/>
<path d="M815.3 180.9l-4.5 -4.8" stroke="#a5a59f" stroke-width="1.8" opacity="0.85"/>
<path d="M880.0 295.4l-0.8 3.5" stroke="#4a4a44" stroke-width="1.8" opacity="0.85"/>
<path d="M778.6 319.8l-0.1 3.4" stroke="#5d5d57" stroke-width="1.8" opacity="0.85"/>
<path d="M840.4 200.5l-4.6 -5.1" stroke="#7b7b75" stroke-width="1.0" opacity="0.85"/>
<path d="M867.8 211.3l4.8 -0.5" stroke="#94948e" stroke-width="1.4" opacity="0.85"/>
<path d="M886.0 191.2l4.4 -2.8" stroke="#83837d" stroke-width="1.5" opacity="0.85"/>
<path d="M882.9 179.3l2.9 -0.8" stroke="#a3a39d" stroke-width="1.3" opacity="0.85"/>
<path d="M824.2 291.7l-1.1 7.9" stroke="#8e8e88" stroke-width="1.8" opacity="0.85"/>
<path d="M802.2 196.8l-4.8 -0.5" stroke="#999993" stroke-width="1.4" opacity="0.85"/>
<path d="M767.6 203.1l-5.3 1.1" stroke="#64645e" stroke-width="1.0" opacity="0.85"/>
<path d="M889.0 235.7l3.8 0.1" stroke="#93938d" stroke-width="1.8" opacity="0.85"/>
<path d="M883.5 227.8l7.2 0.3" stroke="#696963" stroke-width="1.2" opacity="0.85"/>
<path d="M781.3 294.1l1.3 7.5" stroke="#62625c" stroke-width="1.7" opacity="0.85"/>
<path d="M798.6 327.0l-1.6 4.3" stroke="#73736d" stroke-width="1.5" opacity="0.85"/>
<path d="M765.4 262.4l-3.3 1.3" stroke="#a2a29c" stroke-width="1.2" opacity="0.85"/>
<path d="M833.9 290.9l-1.4 6.3" stroke="#bcbcb6" stroke-width="0.9" opacity="0.85"/>
<path d="M823.4 214.0l-4.7 0.0" stroke="#4d4d47" stroke-width="1.5" opacity="0.85"/>
<path d="M876.8 229.3l5.4 5.6" stroke="#cacac4" stroke-width="1.6" opacity="0.85"/>
<path d="M780.1 220.6l-6.8 -1.5" stroke="#b1b1ab" stroke-width="1.1" opacity="0.85"/>
<path d="M786.0 343.7l0.5 6.6" stroke="#44443e" stroke-width="1.7" opacity="0.85"/>
<path d="M879.6 285.5l1.1 3.9" stroke="#ababa5" stroke-width="1.7" opacity="0.85"/>
<path d="M860.4 326.1l-0.7 3.3" stroke="#72726c" stroke-width="1.8" opacity="0.85"/>
<path d="M767.1 319.3l-2.5 6.1" stroke="#74746e" stroke-width="1.2" opacity="0.85"/>
<path d="M887.2 315.9l-0.0 5.0" stroke="#a0a09a" stroke-width="1.0" opacity="0.85"/>
<path d="M795.1 167.8l-4.8 -3.1" stroke="#aeaea8" stroke-width="1.3" opacity="0.85"/>
<path d="M800.8 213.1l-5.6 -1.9" stroke="#c8c8c2" stroke-width="1.4" opacity="0.85"/>
<path d="M765.0 186.9l-7.8 0.7" stroke="#d8d8d2" stroke-width="1.0" opacity="0.85"/>
<path d="M829.1 326.9l2.6 5.7" stroke="#73736d" stroke-width="1.6" opacity="0.85"/>
<path d="M793.7 155.4l-4.6 -3.1" stroke="#45453f" stroke-width="1.3" opacity="0.85"/>
<path d="M785.2 220.3l-5.3 -0.8" stroke="#8b8b85" stroke-width="1.2" opacity="0.85"/>
<path d="M838.4 294.5l-0.9 4.2" stroke="#aaaaa4" stroke-width="1.5" opacity="0.85"/>
<path d="M767.7 216.9l-6.0 -1.9" stroke="#dadad4" stroke-width="1.9" opacity="0.85"/>
<path d="M862.5 320.2l1.6 7.5" stroke="#d1d1cb" stroke-width="1.7" opacity="0.85"/>
<path d="M886.5 282.9l5.3 3.9" stroke="#5f5f59" stroke-width="1.8" opacity="0.85"/>
<path d="M865.4 320.8l-0.6 5.4" stroke="#b9b9b3" stroke-width="1.5" opacity="0.85"/>
<path d="M833.2 170.7l-3.2 -4.5" stroke="#64645e" stroke-width="1.7" opacity="0.85"/>
<path d="M839.7 305.2l-1.3 6.6" stroke="#8d8d87" stroke-width="1.1" opacity="0.85"/>
<path d="M807.0 182.6l-3.9 -4.7" stroke="#adada7" stroke-width="1.2" opacity="0.85"/>
<path d="M838.1 305.5l1.0 4.4" stroke="#80807a" stroke-width="1.6" opacity="0.85"/>
<path d="M834.5 327.5l3.1 6.9" stroke="#4f4f49" stroke-width="1.0" opacity="0.85"/>
<path d="M836.8 229.8l-2.0 5.6" stroke="#6d6d67" stroke-width="1.3" opacity="0.85"/>
<path d="M788.6 248.6l-6.1 2.9" stroke="#b1b1ab" stroke-width="0.9" opacity="0.85"/>
<path d="M768.6 309.7l-1.5 4.0" stroke="#90908a" stroke-width="1.7" opacity="0.85"/>
<path d="M852.1 163.2l2.9 -5.3" stroke="#888882" stroke-width="1.8" opacity="0.85"/>
<path d="M827.3 321.8l0.4 3.0" stroke="#9f9f99" stroke-width="1.4" opacity="0.85"/>
<path d="M799.6 211.7l-7.7 -1.6" stroke="#a6a6a0" stroke-width="1.8" opacity="0.85"/>
<path d="M796.7 155.0l-1.2 -3.3" stroke="#aaaaa4" stroke-width="1.9" opacity="0.85"/>
<path d="M862.8 245.5l0.7 3.9" stroke="#45453f" stroke-width="1.4" opacity="0.85"/>
<path d="M881.4 344.3l0.2 5.2" stroke="#9f9f99" stroke-width="1.3" opacity="0.85"/>
<path d="M810.7 316.7l-0.1 3.2" stroke="#92928c" stroke-width="0.9" opacity="0.85"/>
<path d="M810.0 253.1l-1.8 2.9" stroke="#91918b" stroke-width="1.4" opacity="0.85"/>
<path d="M784.0 220.4l-6.9 -2.6" stroke="#80807a" stroke-width="1.9" opacity="0.85"/>
<path d="M855.0 249.4l0.6 7.1" stroke="#adada7" stroke-width="1.3" opacity="0.85"/>
<path d="M889.3 158.0l4.7 -4.3" stroke="#696963" stroke-width="0.9" opacity="0.85"/>
<path d="M763.6 295.5l1.3 6.4" stroke="#888882" stroke-width="1.1" opacity="0.85"/>
<path d="M759.4 159.6l-4.1 -4.2" stroke="#ccccc6" stroke-width="1.8" opacity="0.85"/>
<path d="M877.5 255.1l2.9 5.5" stroke="#6e6e68" stroke-width="1.4" opacity="0.85"/>
<path d="M817.5 246.4l-4.0 4.5" stroke="#80807a" stroke-width="1.1" opacity="0.85"/>
<path d="M891.5 296.6l-1.3 4.5" stroke="#7c7c76" stroke-width="1.1" opacity="0.85"/>
<path d="M757.3 198.5l-4.9 -3.8" stroke="#cfcfc9" stroke-width="1.0" opacity="0.85"/>
<path d="M830.0 339.3l-2.5 5.5" stroke="#c4c4be" stroke-width="1.0" opacity="0.85"/>
<path d="M798.1 155.5l-2.8 -2.6" stroke="#6b6b65" stroke-width="1.0" opacity="0.85"/>
<path d="M838.2 301.5l-1.3 4.0" stroke="#999993" stroke-width="1.1" opacity="0.85"/>
<path d="M867.0 263.5l3.5 5.3" stroke="#777771" stroke-width="1.0" opacity="0.85"/>
<path d="M809.4 154.2l-3.6 -2.7" stroke="#b1b1ab" stroke-width="1.8" opacity="0.85"/>
<path d="M877.9 295.5l-1.6 5.8" stroke="#54544e" stroke-width="1.0" opacity="0.85"/>
<path d="M756.0 257.9l-4.7 5.4" stroke="#898983" stroke-width="1.0" opacity="0.85"/>
<path d="M835.3 201.5l-5.5 -4.2" stroke="#62625c" stroke-width="1.1" opacity="0.85"/>
<path d="M774.0 279.9l-2.6 2.7" stroke="#4d4d47" stroke-width="1.8" opacity="0.85"/>
<path d="M778.1 235.8l-5.3 -0.9" stroke="#a8a8a2" stroke-width="1.6" opacity="0.85"/>
<path d="M793.7 239.8l-3.2 2.3" stroke="#6d6d67" stroke-width="1.9" opacity="0.85"/>
<path d="M801.6 298.1l0.2 3.2" stroke="#93938d" stroke-width="1.2" opacity="0.85"/>
<path d="M881.0 273.2l1.3 5.8" stroke="#9d9d97" stroke-width="1.6" opacity="0.85"/>
<path d="M787.1 341.3l1.0 4.4" stroke="#babab4" stroke-width="1.9" opacity="0.85"/>
<path d="M850.7 179.0l0.6 -3.0" stroke="#82827c" stroke-width="1.5" opacity="0.85"/>
<path d="M783.2 320.0l-0.7 4.2" stroke="#494943" stroke-width="1.6" opacity="0.85"/>
<path d="M763.8 274.7l-6.1 4.4" stroke="#8a8a84" stroke-width="1.1" opacity="0.85"/>
<path d="M877.1 328.9l0.8 3.0" stroke="#75756f" stroke-width="1.5" opacity="0.85"/>
<path d="M862.4 178.2l1.0 -4.2" stroke="#84847e" stroke-width="1.6" opacity="0.85"/>
<path d="M804.9 295.1l-0.7 7.8" stroke="#868680" stroke-width="1.4" opacity="0.85"/>
<path d="M782.4 189.9l-5.6 -5.0" stroke="#8e8e88" stroke-width="1.3" opacity="0.85"/>
<path d="M799.9 260.4l-6.2 1.9" stroke="#85857f" stroke-width="1.5" opacity="0.85"/>
<path d="M818.7 337.1l1.1 4.8" stroke="#54544e" stroke-width="1.2" opacity="0.85"/>
<path d="M798.7 201.5l-4.5 0.4" stroke="#95958f" stroke-width="1.4" opacity="0.85"/>
<path d="M835.3 183.8l-0.3 -7.9" stroke="#6e6e68" stroke-width="1.0" opacity="0.85"/>
<path d="M875.6 344.6l-0.7 7.5" stroke="#55554f" stroke-width="0.9" opacity="0.85"/>
<path d="M870.0 241.1l1.4 2.7" stroke="#71716b" stroke-width="1.6" opacity="0.85"/>
<path d="M836.5 200.7l-1.7 -3.8" stroke="#adada7" stroke-width="1.8" opacity="0.85"/>
<path d="M840.9 182.2l-0.2 -5.2" stroke="#888882" stroke-width="0.9" opacity="0.85"/>
<path d="M808.4 223.1l-6.6 -1.8" stroke="#ccccc6" stroke-width="1.1" opacity="0.85"/>
<path d="M848.5 290.1l-1.3 5.8" stroke="#95958f" stroke-width="1.2" opacity="0.85"/>
<path d="M791.3 212.6l-4.0 0.2" stroke="#595953" stroke-width="1.9" opacity="0.85"/>
<path d="M803.9 322.7l1.3 3.9" stroke="#42423c" stroke-width="1.1" opacity="0.85"/>
<path d="M839.3 286.7l-0.7 6.2" stroke="#a6a6a0" stroke-width="1.6" opacity="0.85"/>
<path d="M858.7 167.0l2.5 -4.6" stroke="#a4a49e" stroke-width="1.6" opacity="0.85"/>
<path d="M860.8 288.9l-1.2 6.2" stroke="#90908a" stroke-width="1.7" opacity="0.85"/>
<path d="M889.3 187.1l3.6 -5.1" stroke="#90908a" stroke-width="1.4" opacity="0.85"/>
<path d="M776.8 243.4l-5.1 2.1" stroke="#8a8a84" stroke-width="1.2" opacity="0.85"/>
<path d="M887.2 221.4l5.2 1.8" stroke="#acaca6" stroke-width="1.8" opacity="0.85"/>
<path d="M787.2 248.0l-5.2 3.3" stroke="#71716b" stroke-width="1.2" opacity="0.85"/>
<path d="M788.7 235.0l-6.6 4.0" stroke="#9c9c96" stroke-width="1.2" opacity="0.85"/>
<path d="M768.3 273.6l-2.7 1.8" stroke="#9b9b95" stroke-width="1.7" opacity="0.85"/>
<path d="M832.5 280.4l-0.3 4.3" stroke="#aaaaa4" stroke-width="1.6" opacity="0.85"/>
<path d="M829.0 249.5l-2.5 2.0" stroke="#979791" stroke-width="1.2" opacity="0.85"/>
<path d="M864.9 338.6l2.3 7.6" stroke="#8d8d87" stroke-width="1.8" opacity="0.85"/>
<path d="M758.7 214.6l-2.9 1.0" stroke="#81817b" stroke-width="1.6" opacity="0.85"/>
<path d="M874.1 298.8l1.2 4.2" stroke="#979791" stroke-width="1.2" opacity="0.85"/>
<path d="M783.9 283.8l-4.6 2.2" stroke="#c2c2bc" stroke-width="1.0" opacity="0.85"/>
<path d="M808.8 205.7l-4.7 0.9" stroke="#9a9a94" stroke-width="1.7" opacity="0.85"/>
<path d="M815.9 330.0l-1.6 4.5" stroke="#aaaaa4" stroke-width="1.4" opacity="0.85"/>
<path d="M794.4 280.5l-1.3 6.4" stroke="#c9c9c3" stroke-width="0.9" opacity="0.85"/>
<path d="M796.3 195.5l-3.1 -0.7" stroke="#7d7d77" stroke-width="1.8" opacity="0.85"/>
<path d="M888.5 278.3l2.7 3.3" stroke="#a1a19b" stroke-width="1.8" opacity="0.85"/>
<path d="M879.0 284.6l2.5 2.5" stroke="#adada7" stroke-width="1.4" opacity="0.85"/>
<path d="M890.4 183.9l5.0 -5.3" stroke="#ababa5" stroke-width="1.6" opacity="0.85"/>
<path d="M822.9 202.5l-6.5 -0.8" stroke="#9b9b95" stroke-width="1.4" opacity="0.85"/>
<path d="M769.8 199.7l-7.2 -1.6" stroke="#75756f" stroke-width="1.3" opacity="0.85"/>
<path d="M765.5 277.5l-3.8 3.6" stroke="#6e6e68" stroke-width="1.0" opacity="0.85"/>
<path d="M853.4 213.2l5.4 -3.0" stroke="#a3a39d" stroke-width="1.5" opacity="0.85"/>
<path d="M758.4 236.0l-5.7 3.6" stroke="#898983" stroke-width="1.7" opacity="0.85"/>
<path d="M763.0 218.0l-5.6 2.6" stroke="#7e7e78" stroke-width="1.8" opacity="0.85"/>
<path d="M879.8 158.0l4.3 -4.9" stroke="#767670" stroke-width="1.2" opacity="0.85"/>
<path d="M890.0 332.4l-2.8 5.6" stroke="#8a8a84" stroke-width="1.8" opacity="0.85"/>
<path d="M762.4 171.2l-7.6 -2.1" stroke="#a5a59f" stroke-width="1.3" opacity="0.85"/>
<path d="M837.3 235.8l-1.5 7.5" stroke="#a9a9a3" stroke-width="1.0" opacity="0.85"/>
<path d="M838.5 332.7l2.5 5.1" stroke="#868680" stroke-width="1.4" opacity="0.85"/>
<path d="M783.8 203.0l-2.8 -2.1" stroke="#575751" stroke-width="1.4" opacity="0.85"/>
<path d="M884.0 321.7l2.9 6.4" stroke="#5b5b55" stroke-width="1.8" opacity="0.85"/>
<path d="M803.7 210.4l-4.6 1.3" stroke="#73736d" stroke-width="0.9" opacity="0.85"/>
<path d="M819.3 312.6l2.0 4.9" stroke="#797973" stroke-width="1.4" opacity="0.85"/>
<path d="M819.2 236.1l-7.2 2.0" stroke="#74746e" stroke-width="1.8" opacity="0.85"/>
<path d="M817.3 317.4l-2.3 4.2" stroke="#55554f" stroke-width="1.1" opacity="0.85"/>
<path d="M800.6 312.2l1.3 3.3" stroke="#d3d3cd" stroke-width="1.4" opacity="0.85"/>
<path d="M772.9 210.3l-5.6 -1.1" stroke="#acaca6" stroke-width="1.3" opacity="0.85"/>
<path d="M870.1 283.5l3.1 3.3" stroke="#7c7c76" stroke-width="1.8" opacity="0.85"/>
<path d="M874.4 286.9l2.1 2.3" stroke="#5e5e58" stroke-width="1.3" opacity="0.85"/>
<path d="M794.7 343.3l0.7 3.8" stroke="#b0b0aa" stroke-width="1.7" opacity="0.85"/>
<path d="M820.5 244.3l-4.8 4.7" stroke="#bbbbb5" stroke-width="1.7" opacity="0.85"/>
<path d="M767.1 196.2l-5.6 -2.7" stroke="#9b9b95" stroke-width="1.6" opacity="0.85"/>
<path d="M810.1 158.4l-3.0 -5.9" stroke="#898983" stroke-width="1.5" opacity="0.85"/>
<path d="M871.8 270.2l1.8 3.0" stroke="#868680" stroke-width="1.9" opacity="0.85"/>
<path d="M786.3 236.6l-5.2 1.8" stroke="#aeaea8" stroke-width="1.7" opacity="0.85"/>
<path d="M804.7 343.1l1.0 2.9" stroke="#84847e" stroke-width="1.5" opacity="0.85"/>
<path d="M792.1 175.2l-3.9 -1.1" stroke="#92928c" stroke-width="1.6" opacity="0.85"/>
<path d="M801.5 284.1l-1.4 6.8" stroke="#9e9e98" stroke-width="1.6" opacity="0.85"/>
<path d="M856.9 249.9l3.6 4.4" stroke="#9f9f99" stroke-width="0.9" opacity="0.85"/>
<path d="M855.3 328.4l0.1 6.8" stroke="#4f4f49" stroke-width="1.4" opacity="0.85"/>
<path d="M810.7 159.4l-0.5 -7.7" stroke="#b7b7b1" stroke-width="0.9" opacity="0.85"/>
<path d="M848.5 329.8l-0.5 4.9" stroke="#c1c1bb" stroke-width="1.0" opacity="0.85"/>
<path d="M778.6 295.8l-1.4 3.7" stroke="#787872" stroke-width="0.9" opacity="0.85"/>
<path d="M869.7 208.9l5.5 -1.5" stroke="#7b7b75" stroke-width="1.0" opacity="0.85"/>
<path d="M864.9 236.7l2.1 2.5" stroke="#a8a8a2" stroke-width="1.2" opacity="0.85"/>
<path d="M799.6 201.7l-5.5 -3.1" stroke="#afafa9" stroke-width="1.4" opacity="0.85"/>
<path d="M873.0 228.9l3.2 3.2" stroke="#8f8f89" stroke-width="1.3" opacity="0.85"/>
<path d="M762.6 338.3l3.5 6.7" stroke="#676761" stroke-width="1.8" opacity="0.85"/>
<path d="M805.7 153.3l-6.1 -3.6" stroke="#686862" stroke-width="1.7" opacity="0.85"/>
<path d="M761.2 174.4l-5.6 -3.5" stroke="#676761" stroke-width="1.5" opacity="0.85"/>
<path d="M850.5 309.3l-0.7 7.1" stroke="#70706a" stroke-width="1.2" opacity="0.85"/>
<path d="M869.0 196.1l7.4 -2.9" stroke="#676761" stroke-width="0.9" opacity="0.85"/>
<path d="M839.1 244.6l-0.3 5.4" stroke="#d4d4ce" stroke-width="1.4" opacity="0.85"/>
<path d="M847.0 171.5l-1.3 -5.0" stroke="#7e7e78" stroke-width="1.8" opacity="0.85"/>
<path d="M767.8 161.6l-3.2 -0.5" stroke="#7a7a74" stroke-width="1.3" opacity="0.85"/>
<path d="M881.7 200.5l3.5 -1.9" stroke="#979791" stroke-width="1.8" opacity="0.85"/>
<path d="M785.3 181.4l-7.3 -3.2" stroke="#9e9e98" stroke-width="1.0" opacity="0.85"/>
<path d="M887.8 191.8l7.2 -3.1" stroke="#b9b9b3" stroke-width="1.2" opacity="0.85"/>
<path d="M797.4 272.9l-6.7 2.7" stroke="#9a9a94" stroke-width="1.0" opacity="0.85"/>
<path d="M885.5 318.9l-0.9 6.8" stroke="#b7b7b1" stroke-width="1.0" opacity="0.85"/>
<path d="M782.1 150.8l-4.3 -4.2" stroke="#b8b8b2" stroke-width="1.1" opacity="0.85"/>
<path d="M799.8 277.0l-3.9 3.2" stroke="#999993" stroke-width="1.4" opacity="0.85"/>
<path d="M806.9 339.9l-0.3 6.0" stroke="#767670" stroke-width="1.1" opacity="0.85"/>
<path d="M830.3 247.1l0.1 4.6" stroke="#ababa5" stroke-width="1.5" opacity="0.85"/>
<path d="M766.5 323.2l-1.2 4.5" stroke="#7a7a74" stroke-width="1.3" opacity="0.85"/>
<path d="M812.2 160.4l-2.5 -6.8" stroke="#5b5b55" stroke-width="1.1" opacity="0.85"/>
<path d="M788.2 311.2l-0.7 6.6" stroke="#989892" stroke-width="1.5" opacity="0.85"/>
<path d="M813.2 319.1l-0.8 7.4" stroke="#65655f" stroke-width="1.2" opacity="0.85"/>
<path d="M819.1 297.4l-1.5 6.3" stroke="#63635d" stroke-width="1.4" opacity="0.85"/>
<path d="M770.4 191.9l-5.1 0.8" stroke="#575751" stroke-width="1.5" opacity="0.85"/>
<path d="M841.5 170.8l-1.1 -4.4" stroke="#91918b" stroke-width="1.5" opacity="0.85"/>
<path d="M799.9 154.1l-1.1 -3.8" stroke="#c6c6c0" stroke-width="1.3" opacity="0.85"/>
<path d="M778.3 261.2l-3.9 4.5" stroke="#85857f" stroke-width="1.0" opacity="0.85"/>
<path d="M781.4 182.7l-5.3 -5.2" stroke="#b0b0aa" stroke-width="1.1" opacity="0.85"/>
<path d="M882.9 301.3l-3.8 7.0" stroke="#b1b1ab" stroke-width="1.7" opacity="0.85"/>
<path d="M857.6 333.1l-0.3 6.0" stroke="#575751" stroke-width="1.5" opacity="0.85"/>
<path d="M768.5 319.5l-0.9 3.7" stroke="#71716b" stroke-width="1.4" opacity="0.85"/>
<path d="M883.5 340.4l2.2 6.6" stroke="#9f9f99" stroke-width="1.7" opacity="0.85"/>
<path d="M805.8 310.2l2.5 4.8" stroke="#82827c" stroke-width="1.9" opacity="0.85"/>
<path d="M761.7 243.7l-5.6 3.2" stroke="#878781" stroke-width="1.1" opacity="0.85"/>
<path d="M765.2 264.6l-4.1 2.2" stroke="#62625c" stroke-width="1.1" opacity="0.85"/>
<path d="M874.0 224.2l4.2 -0.1" stroke="#5b5b55" stroke-width="1.9" opacity="0.85"/>
<path d="M791.2 234.0l-7.2 3.1" stroke="#878781" stroke-width="0.9" opacity="0.85"/>
<path d="M811.1 268.8l-0.6 6.4" stroke="#8c8c86" stroke-width="1.8" opacity="0.85"/>
<path d="M888.2 269.1l1.4 3.1" stroke="#9a9a94" stroke-width="1.7" opacity="0.85"/>
<path d="M865.1 310.7l-1.3 3.2" stroke="#7e7e78" stroke-width="1.0" opacity="0.85"/>
<path d="M827.0 178.4l-3.3 -4.9" stroke="#80807a" stroke-width="1.0" opacity="0.85"/>
<path d="M755.2 325.9l1.4 3.0" stroke="#95958f" stroke-width="1.5" opacity="0.85"/>
<path d="M888.2 223.1l6.2 -1.4" stroke="#aeaea8" stroke-width="1.7" opacity="0.85"/>
<path d="M838.2 214.6l-6.1 0.1" stroke="#53534d" stroke-width="1.2" opacity="0.85"/>
<path d="M770.8 249.1l-7.5 2.3" stroke="#9d9d97" stroke-width="1.9" opacity="0.85"/>
<path d="M772.8 299.7l-0.4 5.5" stroke="#8d8d87" stroke-width="1.2" opacity="0.85"/>
<path d="M767.9 253.0l-3.0 0.5" stroke="#989892" stroke-width="1.2" opacity="0.85"/>
<path d="M877.3 308.1l2.3 4.6" stroke="#6e6e68" stroke-width="1.7" opacity="0.85"/>
<path d="M825.0 248.7l-0.7 3.9" stroke="#6d6d67" stroke-width="1.0" opacity="0.85"/>
<path d="M812.1 248.6l-4.0 4.9" stroke="#4d4d47" stroke-width="1.6" opacity="0.85"/>
<path d="M798.4 209.7l-6.0 2.0" stroke="#90908a" stroke-width="0.9" opacity="0.85"/>
<path d="M854.5 314.6l0.5 3.2" stroke="#797973" stroke-width="1.9" opacity="0.85"/>
<path d="M758.0 186.1l-7.1 0.0" stroke="#adada7" stroke-width="1.7" opacity="0.85"/>
<path d="M756.0 234.5l-3.7 -0.1" stroke="#8e8e88" stroke-width="1.4" opacity="0.85"/>
<path d="M840.1 303.1l2.3 6.9" stroke="#989892" stroke-width="1.7" opacity="0.85"/>
<path d="M811.8 188.9l-4.5 -3.5" stroke="#a2a29c" stroke-width="1.8" opacity="0.85"/>
<path d="M761.1 176.2l-4.5 -1.4" stroke="#4b4b45" stroke-width="1.1" opacity="0.85"/>
<path d="M783.5 257.1l-2.9 0.8" stroke="#a4a49e" stroke-width="1.3" opacity="0.85"/>
<path d="M782.2 179.7l-5.3 -4.4" stroke="#8c8c86" stroke-width="1.8" opacity="0.85"/>
<path d="M776.4 279.2l-2.8 3.3" stroke="#666660" stroke-width="1.4" opacity="0.85"/>
<path d="M874.8 219.4l3.9 1.9" stroke="#63635d" stroke-width="0.9" opacity="0.85"/>
<path d="M850.8 337.2l-1.4 6.6" stroke="#d6d6d0" stroke-width="1.5" opacity="0.85"/>
<path d="M775.8 345.0l-2.9 6.9" stroke="#888882" stroke-width="1.3" opacity="0.85"/>
<path d="M776.4 335.1l1.9 6.5" stroke="#c7c7c1" stroke-width="1.8" opacity="0.85"/>
<path d="M818.0 166.8l-4.2 -3.0" stroke="#8a8a84" stroke-width="1.8" opacity="0.85"/>
<path d="M762.0 292.9l-1.8 4.1" stroke="#585852" stroke-width="1.6" opacity="0.85"/>
<path d="M848.5 294.4l-1.8 5.7" stroke="#7c7c76" stroke-width="1.0" opacity="0.85"/>
<path d="M870.0 236.3l5.5 1.3" stroke="#a6a6a0" stroke-width="1.0" opacity="0.85"/>
<path d="M813.3 222.8l-5.2 0.8" stroke="#a3a39d" stroke-width="1.1" opacity="0.85"/>
<path d="M756.9 288.3l-3.6 2.2" stroke="#8c8c86" stroke-width="1.3" opacity="0.85"/>
<path d="M811.0 328.5l2.0 4.2" stroke="#787872" stroke-width="1.3" opacity="0.85"/>
<path d="M776.7 207.0l-5.3 -0.4" stroke="#9e9e98" stroke-width="1.5" opacity="0.85"/>
<path d="M865.6 314.7l-0.9 7.3" stroke="#8d8d87" stroke-width="1.7" opacity="0.85"/>
<path d="M783.0 275.7l-4.6 5.6" stroke="#676761" stroke-width="1.1" opacity="0.85"/>
<path d="M833.0 291.7l1.5 5.4" stroke="#92928c" stroke-width="1.6" opacity="0.85"/>
<path d="M810.3 301.9l0.6 3.8" stroke="#81817b" stroke-width="1.8" opacity="0.85"/>
<path d="M849.9 213.2l6.5 -1.1" stroke="#696963" stroke-width="1.3" opacity="0.85"/>
<path d="M853.5 344.8l-2.1 6.2" stroke="#676761" stroke-width="1.4" opacity="0.85"/>
<path d="M885.8 236.5l7.9 0.6" stroke="#868680" stroke-width="1.4" opacity="0.85"/>
<path d="M796.2 333.8l-2.2 6.7" stroke="#92928c" stroke-width="1.7" opacity="0.85"/>
<path d="M851.3 217.2l5.4 2.2" stroke="#a1a19b" stroke-width="1.3" opacity="0.85"/>
<path d="M868.4 319.3l1.6 4.6" stroke="#aaaaa4" stroke-width="0.9" opacity="0.85"/>
<path d="M802.7 336.6l0.2 7.0" stroke="#575751" stroke-width="1.1" opacity="0.85"/>
<path d="M803.2 286.8l-2.4 2.9" stroke="#b7b7b1" stroke-width="1.9" opacity="0.85"/>
<path d="M771.6 262.8l-4.0 2.4" stroke="#979791" stroke-width="1.5" opacity="0.85"/>
<path d="M816.5 206.3l-5.6 -5.2" stroke="#686862" stroke-width="1.1" opacity="0.85"/>
<path d="M830.5 310.1l0.8 5.0" stroke="#6e6e68" stroke-width="1.7" opacity="0.85"/>
<path d="M787.1 196.9l-4.7 0.1" stroke="#b7b7b1" stroke-width="1.2" opacity="0.85"/>
<path d="M785.1 323.3l-1.1 6.0" stroke="#ababa5" stroke-width="1.6" opacity="0.85"/>
<path d="M773.8 284.5l-3.1 1.5" stroke="#70706a" stroke-width="1.4" opacity="0.85"/>
<path d="M867.6 219.2l6.4 -1.1" stroke="#7f7f79" stroke-width="1.2" opacity="0.85"/>
<path d="M757.7 199.0l-4.0 0.8" stroke="#b4b4ae" stroke-width="1.4" opacity="0.85"/>
<path d="M880.7 258.6l3.8 5.3" stroke="#74746e" stroke-width="1.2" opacity="0.85"/>
<path d="M814.5 313.3l-1.1 6.8" stroke="#82827c" stroke-width="1.9" opacity="0.85"/>
<path d="M795.4 199.4l-2.9 -1.1" stroke="#5f5f59" stroke-width="1.0" opacity="0.85"/>
<path d="M802.9 154.9l-2.6 -5.2" stroke="#7a7a74" stroke-width="1.1" opacity="0.85"/>
<path d="M883.2 238.6l5.0 2.8" stroke="#bcbcb6" stroke-width="1.4" opacity="0.85"/>
<path d="M791.5 165.6l-3.2 -5.7" stroke="#74746e" stroke-width="1.8" opacity="0.85"/>
<path d="M822.4 286.6l-2.2 6.6" stroke="#b0b0aa" stroke-width="1.7" opacity="0.85"/>
<path d="M879.4 331.2l3.5 6.6" stroke="#71716b" stroke-width="1.1" opacity="0.85"/>
<path d="M813.7 277.1l-1.2 7.1" stroke="#989892" stroke-width="1.3" opacity="0.85"/>
<path d="M809.0 179.6l-2.7 -3.7" stroke="#565650" stroke-width="1.4" opacity="0.85"/>
<path d="M837.7 328.2l-2.6 5.8" stroke="#6a6a64" stroke-width="1.3" opacity="0.85"/>
<path d="M780.0 288.5l-2.1 2.5" stroke="#92928c" stroke-width="1.1" opacity="0.85"/>
<path d="M825.3 193.4l-2.1 -5.7" stroke="#b2b2ac" stroke-width="1.5" opacity="0.85"/>
<path d="M759.7 342.9l0.7 3.4" stroke="#898983" stroke-width="1.6" opacity="0.85"/>
<path d="M819.8 335.7l-1.4 3.8" stroke="#72726c" stroke-width="1.8" opacity="0.85"/>
<path d="M789.7 321.1l-1.1 4.6" stroke="#6b6b65" stroke-width="1.7" opacity="0.85"/>
<path d="M847.5 314.2l1.7 5.3" stroke="#aaaaa4" stroke-width="1.3" opacity="0.85"/>
<path d="M769.4 244.5l-7.9 0.4" stroke="#93938d" stroke-width="1.2" opacity="0.85"/>
<path d="M781.9 151.4l-3.8 -1.9" stroke="#898983" stroke-width="1.7" opacity="0.85"/>
<path d="M874.4 315.6l-1.9 3.9" stroke="#878781" stroke-width="1.9" opacity="0.85"/>
<path d="M890.6 217.6l3.2 1.2" stroke="#cfcfc9" stroke-width="1.1" opacity="0.85"/>
<path d="M862.8 269.2l-0.2 4.2" stroke="#a5a59f" stroke-width="1.1" opacity="0.85"/>
<path d="M866.9 327.2l0.2 7.5" stroke="#a3a39d" stroke-width="1.1" opacity="0.85"/>
<path d="M860.0 295.7l-0.3 4.1" stroke="#4c4c46" stroke-width="1.8" opacity="0.85"/>
<path d="M881.6 337.5l2.8 6.2" stroke="#84847e" stroke-width="1.4" opacity="0.85"/>
<path d="M889.2 292.4l0.5 5.6" stroke="#595953" stroke-width="1.9" opacity="0.85"/>
<path d="M761.8 150.9l-4.4 -5.1" stroke="#65655f" stroke-width="1.2" opacity="0.85"/>
<path d="M825.1 330.5l0.6 3.8" stroke="#c7c7c1" stroke-width="1.8" opacity="0.85"/>
<path d="M758.8 280.0l-3.7 6.2" stroke="#7d7d77" stroke-width="0.9" opacity="0.85"/>
<path d="M788.9 307.6l-0.5 7.1" stroke="#b0b0aa" stroke-width="1.7" opacity="0.85"/>
<path d="M766.1 219.9l-4.2 -0.9" stroke="#cdcdc7" stroke-width="1.6" opacity="0.85"/>
<path d="M765.0 257.1l-3.4 0.3" stroke="#94948e" stroke-width="1.1" opacity="0.85"/>
<path d="M841.8 179.6l1.4 -5.7" stroke="#8c8c86" stroke-width="0.9" opacity="0.85"/>
<path d="M764.4 268.1l-4.1 0.9" stroke="#bbbbb5" stroke-width="1.8" opacity="0.85"/>
<path d="M757.9 241.7l-7.7 1.2" stroke="#52524c" stroke-width="1.8" opacity="0.85"/>
<path d="M798.4 170.4l-7.5 -2.4" stroke="#6c6c66" stroke-width="1.6" opacity="0.85"/>
<path d="M815.2 327.4l1.5 5.0" stroke="#4f4f49" stroke-width="1.3" opacity="0.85"/>
<path d="M889.1 332.5l2.1 6.9" stroke="#95958f" stroke-width="1.2" opacity="0.85"/>
<path d="M778.2 339.2l-2.8 6.8" stroke="#4f4f49" stroke-width="1.6" opacity="0.85"/>
<path d="M879.2 312.9l1.4 3.5" stroke="#898983" stroke-width="1.7" opacity="0.85"/>
<path d="M818.5 320.0l-1.7 7.5" stroke="#6d6d67" stroke-width="1.0" opacity="0.85"/>
<path d="M845.2 336.4l-2.9 5.6" stroke="#787872" stroke-width="1.8" opacity="0.85"/>
<path d="M816.9 288.4l-4.4 6.6" stroke="#b7b7b1" stroke-width="1.5" opacity="0.85"/>
<path d="M800.2 181.3l-6.8 -2.9" stroke="#75756f" stroke-width="1.2" opacity="0.85"/>
<path d="M807.9 319.9l1.9 3.6" stroke="#989892" stroke-width="1.5" opacity="0.85"/>
<path d="M829.6 279.1l-1.6 7.6" stroke="#c0c0ba" stroke-width="1.7" opacity="0.85"/>
<path d="M791.8 340.3l1.8 3.9" stroke="#b7b7b1" stroke-width="1.4" opacity="0.85"/>
<path d="M833.3 198.7l-3.5 -6.4" stroke="#a2a29c" stroke-width="1.7" opacity="0.85"/>
<path d="M758.1 216.3l-5.2 -2.2" stroke="#91918b" stroke-width="1.7" opacity="0.85"/>
<path d="M778.5 343.6l0.4 6.2" stroke="#c3c3bd" stroke-width="1.4" opacity="0.85"/>
<path d="M817.0 233.5l-7.8 1.0" stroke="#aaaaa4" stroke-width="1.3" opacity="0.85"/>
<path d="M781.3 160.7l-4.2 -4.6" stroke="#bebeb8" stroke-width="1.1" opacity="0.85"/>
<path d="M845.2 201.2l1.7 -4.9" stroke="#b2b2ac" stroke-width="1.7" opacity="0.85"/>
<path d="M760.1 181.0l-5.0 -0.3" stroke="#74746e" stroke-width="1.3" opacity="0.85"/>
<path d="M815.8 186.9l-1.2 -3.7" stroke="#d0d0ca" stroke-width="1.3" opacity="0.85"/>
<path d="M832.6 312.8l0.2 3.4" stroke="#7e7e78" stroke-width="1.7" opacity="0.85"/>
<path d="M804.8 317.5l-0.8 6.7" stroke="#acaca6" stroke-width="1.8" opacity="0.85"/>
<path d="M890.5 229.6l5.5 4.3" stroke="#64645e" stroke-width="1.7" opacity="0.85"/>
<path d="M790.0 289.0l-3.7 2.5" stroke="#62625c" stroke-width="1.3" opacity="0.85"/>
<path d="M803.5 177.1l-2.3 -5.9" stroke="#b0b0aa" stroke-width="1.5" opacity="0.85"/>
<path d="M806.3 242.8l-3.2 6.3" stroke="#979791" stroke-width="1.5" opacity="0.85"/>
<path d="M868.8 326.3l-1.3 4.8" stroke="#60605a" stroke-width="1.0" opacity="0.85"/>
<path d="M819.5 334.2l0.4 4.2" stroke="#9c9c96" stroke-width="1.3" opacity="0.85"/>
<path d="M820.9 172.3l-5.5 -3.6" stroke="#787872" stroke-width="0.9" opacity="0.85"/>
<path d="M822.6 324.0l0.8 6.6" stroke="#dcdcd6" stroke-width="1.0" opacity="0.85"/>
<path d="M831.9 166.4l0.5 -6.1" stroke="#9d9d97" stroke-width="1.3" opacity="0.85"/>
<path d="M882.4 253.7l4.1 2.7" stroke="#c2c2bc" stroke-width="1.3" opacity="0.85"/>
<path d="M760.6 329.8l-1.6 7.3" stroke="#6a6a64" stroke-width="1.8" opacity="0.85"/>
<path d="M759.5 337.4l0.0 6.2" stroke="#b5b5af" stroke-width="1.4" opacity="0.85"/>
<path d="M878.0 198.7l3.2 -2.5" stroke="#979791" stroke-width="1.8" opacity="0.85"/>
<path d="M868.2 262.1l2.3 6.1" stroke="#a5a59f" stroke-width="0.9" opacity="0.85"/>
<path d="M784.5 259.9l-7.5 1.5" stroke="#a7a7a1" stroke-width="1.4" opacity="0.85"/>
<path d="M856.4 240.6l1.7 5.6" stroke="#767670" stroke-width="1.0" opacity="0.85"/>
<path d="M761.6 152.8l-4.5 -2.2" stroke="#7e7e78" stroke-width="1.1" opacity="0.85"/>
<path d="M854.1 273.8l1.1 5.5" stroke="#878781" stroke-width="1.5" opacity="0.85"/>
<path d="M801.0 155.9l-6.3 -3.1" stroke="#9b9b95" stroke-width="1.5" opacity="0.85"/>
<path d="M791.9 169.8l-5.3 -3.8" stroke="#9b9b95" stroke-width="1.0" opacity="0.85"/>
<path d="M815.1 166.0l-0.3 -5.2" stroke="#979791" stroke-width="1.5" opacity="0.85"/>
<path d="M791.3 238.6l-4.1 3.2" stroke="#9b9b95" stroke-width="1.2" opacity="0.85"/>
<path d="M849.6 326.0l-3.0 6.5" stroke="#a1a19b" stroke-width="1.8" opacity="0.85"/>
<path d="M812.2 168.9l-0.5 -4.2" stroke="#777771" stroke-width="1.0" opacity="0.85"/>
<path d="M781.7 169.7l-5.5 -4.1" stroke="#b8b8b2" stroke-width="1.3" opacity="0.85"/>
<path d="M811.7 327.9l-2.2 5.4" stroke="#93938d" stroke-width="1.1" opacity="0.85"/>
<path d="M863.5 152.0l0.4 -4.7" stroke="#7a7a74" stroke-width="1.8" opacity="0.85"/>
<path d="M873.6 181.3l1.8 -3.7" stroke="#63635d" stroke-width="1.0" opacity="0.85"/>
<path d="M878.1 224.9l6.1 4.8" stroke="#a8a8a2" stroke-width="1.4" opacity="0.85"/>
<path d="M821.7 187.2l-0.7 -3.2" stroke="#ccccc6" stroke-width="1.1" opacity="0.85"/>
<path d="M807.6 260.6l-2.4 2.9" stroke="#a3a39d" stroke-width="1.5" opacity="0.85"/>
<path d="M760.6 170.1l-3.0 -2.0" stroke="#585852" stroke-width="1.2" opacity="0.85"/>
<path d="M781.5 152.4l-2.2 -2.2" stroke="#6c6c66" stroke-width="1.2" opacity="0.85"/>
<path d="M861.9 305.5l0.5 4.8" stroke="#7e7e78" stroke-width="1.4" opacity="0.85"/>
<path d="M773.4 299.4l0.0 5.6" stroke="#8d8d87" stroke-width="1.1" opacity="0.85"/>
<path d="M776.0 163.2l-5.4 -1.3" stroke="#a6a6a0" stroke-width="0.9" opacity="0.85"/>
<path d="M819.2 219.9l-4.4 -0.5" stroke="#95958f" stroke-width="0.9" opacity="0.85"/>
<path d="M848.0 172.5l-1.9 -4.2" stroke="#a4a49e" stroke-width="1.3" opacity="0.85"/>
<path d="M760.7 343.5l-0.8 3.8" stroke="#c4c4be" stroke-width="1.7" opacity="0.85"/>
<path d="M846.8 231.3l-1.6 4.4" stroke="#d0d0ca" stroke-width="1.6" opacity="0.85"/>
<path d="M864.3 249.2l3.4 5.2" stroke="#bcbcb6" stroke-width="1.5" opacity="0.85"/>
<path d="M819.5 159.1l-4.0 -5.2" stroke="#9b9b95" stroke-width="1.8" opacity="0.85"/>
<path d="M846.2 310.8l-2.5 6.9" stroke="#6b6b65" stroke-width="1.8" opacity="0.85"/>
<path d="M848.6 169.1l-0.5 -6.8" stroke="#888882" stroke-width="1.9" opacity="0.85"/>
<path d="M759.1 275.4l-5.0 3.0" stroke="#797973" stroke-width="1.2" opacity="0.85"/>
<path d="M778.6 229.0l-6.3 4.2" stroke="#9c9c96" stroke-width="1.0" opacity="0.85"/>
<path d="M793.6 170.1l-4.2 -2.8" stroke="#83837d" stroke-width="1.0" opacity="0.85"/>
<path d="M872.5 170.1l4.6 -6.1" stroke="#575751" stroke-width="1.4" opacity="0.85"/>
<path d="M837.2 331.7l-0.8 3.6" stroke="#8b8b85" stroke-width="1.1" opacity="0.85"/>
<path d="M760.5 272.1l-2.7 2.8" stroke="#a2a29c" stroke-width="1.5" opacity="0.85"/>
<path d="M835.4 274.8l-0.8 7.7" stroke="#82827c" stroke-width="1.8" opacity="0.85"/>
<path d="M785.8 182.3l-6.2 -3.3" stroke="#a9a9a3" stroke-width="1.7" opacity="0.85"/>
<path d="M792.8 176.3l-3.4 -1.7" stroke="#95958f" stroke-width="1.1" opacity="0.85"/>
<path d="M835.8 165.9l-2.6 -6.6" stroke="#9c9c96" stroke-width="1.8" opacity="0.85"/>
<path d="M853.5 334.7l2.2 7.4" stroke="#a5a59f" stroke-width="1.4" opacity="0.85"/>
<path d="M862.1 305.1l2.1 4.6" stroke="#686862" stroke-width="1.6" opacity="0.85"/>
<path d="M798.0 326.5l0.4 3.4" stroke="#7a7a74" stroke-width="1.6" opacity="0.85"/>
<path d="M757.6 323.3l-1.1 6.4" stroke="#91918b" stroke-width="1.1" opacity="0.85"/>
<path d="M872.8 291.0l-0.8 3.2" stroke="#6d6d67" stroke-width="1.8" opacity="0.85"/>
<path d="M854.5 216.3l4.5 0.3" stroke="#93938d" stroke-width="1.1" opacity="0.85"/>
<path d="M772.6 159.5l-2.9 -2.2" stroke="#878781" stroke-width="1.1" opacity="0.85"/>
<path d="M800.5 295.4l-0.2 6.4" stroke="#d1d1cb" stroke-width="1.4" opacity="0.85"/>
<path d="M864.2 159.1l4.2 -4.4" stroke="#8d8d87" stroke-width="1.3" opacity="0.85"/>
<path d="M799.0 163.2l-0.9 -3.8" stroke="#a8a8a2" stroke-width="1.1" opacity="0.85"/>
<path d="M890.2 312.7l-0.8 5.9" stroke="#80807a" stroke-width="1.8" opacity="0.85"/>
<path d="M785.0 235.3l-3.3 0.5" stroke="#a8a8a2" stroke-width="1.3" opacity="0.85"/>
<path d="M813.8 164.6l-3.9 -5.2" stroke="#c5c5bf" stroke-width="1.3" opacity="0.85"/>
<path d="M886.4 302.7l-1.4 3.1" stroke="#d5d5cf" stroke-width="0.9" opacity="0.85"/>
<path d="M871.4 252.1l1.6 5.8" stroke="#aeaea8" stroke-width="1.5" opacity="0.85"/>
<path d="M818.6 302.4l0.9 5.8" stroke="#b1b1ab" stroke-width="1.5" opacity="0.85"/>
<path d="M759.7 162.5l-2.9 -2.0" stroke="#64645e" stroke-width="1.0" opacity="0.85"/>
<path d="M794.7 195.7l-3.2 -1.6" stroke="#80807a" stroke-width="1.4" opacity="0.85"/>
<path d="M843.2 232.5l1.2 3.2" stroke="#a5a59f" stroke-width="1.7" opacity="0.85"/>
<path d="M774.2 305.2l0.1 5.0" stroke="#a5a59f" stroke-width="1.7" opacity="0.85"/>
<path d="M835.1 264.8l0.6 3.0" stroke="#898983" stroke-width="1.2" opacity="0.85"/>
<path d="M781.0 199.6l-5.5 0.9" stroke="#c1c1bb" stroke-width="1.6" opacity="0.85"/>
<path d="M887.1 320.9l0.9 3.8" stroke="#6d6d67" stroke-width="1.1" opacity="0.85"/>
<path d="M771.4 216.0l-6.4 -2.4" stroke="#babab4" stroke-width="1.1" opacity="0.85"/>
<path d="M831.5 203.8l-6.4 -1.5" stroke="#878781" stroke-width="1.1" opacity="0.85"/>
<path d="M825.9 221.3l-6.1 -1.0" stroke="#6d6d67" stroke-width="1.0" opacity="0.85"/>
<path d="M870.1 343.2l0.6 3.8" stroke="#9e9e98" stroke-width="1.2" opacity="0.85"/>
<path d="M812.6 164.6l-3.2 -1.9" stroke="#898983" stroke-width="1.8" opacity="0.85"/>
<path d="M829.2 214.5l-6.0 1.4" stroke="#d5d5cf" stroke-width="1.9" opacity="0.85"/>
<path d="M881.0 336.8l-0.5 3.0" stroke="#93938d" stroke-width="1.7" opacity="0.85"/>
<path d="M791.8 194.1l-5.5 -2.5" stroke="#7b7b75" stroke-width="1.7" opacity="0.85"/>
<path d="M823.4 236.4l-3.2 3.5" stroke="#6d6d67" stroke-width="1.8" opacity="0.85"/>
<path d="M870.9 198.0l5.2 -1.7" stroke="#c0c0ba" stroke-width="1.8" opacity="0.85"/>
<path d="M836.3 315.2l1.0 6.8" stroke="#7e7e78" stroke-width="1.3" opacity="0.85"/>
<path d="M758.3 316.9l1.3 2.8" stroke="#82827c" stroke-width="1.3" opacity="0.85"/>
<path d="M879.1 335.5l1.5 5.8" stroke="#73736d" stroke-width="1.2" opacity="0.85"/>
<path d="M840.2 293.2l0.0 4.2" stroke="#6b6b65" stroke-width="0.9" opacity="0.85"/>
<path d="M836.3 260.1l-2.3 6.4" stroke="#7a7a74" stroke-width="1.5" opacity="0.85"/>
<path d="M775.2 198.4l-4.6 -1.5" stroke="#8f8f89" stroke-width="1.7" opacity="0.85"/>
<path d="M774.9 280.8l-2.7 7.0" stroke="#787872" stroke-width="1.7" opacity="0.85"/>
<path d="M856.0 317.4l-1.5 7.0" stroke="#61615b" stroke-width="1.3" opacity="0.85"/>
<path d="M880.6 301.0l-1.7 4.5" stroke="#6d6d67" stroke-width="1.0" opacity="0.85"/>
<path d="M770.3 180.7l-6.4 0.3" stroke="#8c8c86" stroke-width="1.5" opacity="0.85"/>
<path d="M824.1 320.2l-2.7 5.4" stroke="#92928c" stroke-width="1.1" opacity="0.85"/>
<path d="M797.5 179.9l-3.1 -2.4" stroke="#4b4b45" stroke-width="1.5" opacity="0.85"/>
<path d="M829.9 227.7l-2.0 3.9" stroke="#b8b8b2" stroke-width="1.0" opacity="0.85"/>
<path d="M768.9 164.6l-4.6 -3.4" stroke="#b2b2ac" stroke-width="1.7" opacity="0.85"/>
<path d="M816.9 258.5l-0.5 4.8" stroke="#6f6f69" stroke-width="1.3" opacity="0.85"/>
<path d="M789.0 260.8l-3.8 6.3" stroke="#b8b8b2" stroke-width="1.4" opacity="0.85"/>
<path d="M798.1 166.5l-4.5 -4.6" stroke="#7c7c76" stroke-width="1.9" opacity="0.85"/>
<path d="M775.9 340.8l-1.6 3.1" stroke="#84847e" stroke-width="1.4" opacity="0.85"/>
<path d="M849.7 260.4l-0.1 4.7" stroke="#afafa9" stroke-width="1.4" opacity="0.85"/>
<path d="M885.2 336.9l0.5 4.5" stroke="#ababa5" stroke-width="1.5" opacity="0.85"/>
<path d="M854.3 210.5l5.2 -0.9" stroke="#767670" stroke-width="1.4" opacity="0.85"/>
<path d="M837.0 276.3l1.2 5.2" stroke="#bbbbb5" stroke-width="1.1" opacity="0.85"/>
<path d="M871.4 205.2l2.5 -1.7" stroke="#d1d1cb" stroke-width="1.8" opacity="0.85"/>
<path d="M814.2 319.4l-0.3 3.8" stroke="#45453f" stroke-width="1.3" opacity="0.85"/>
<path d="M830.9 231.0l-1.4 4.2" stroke="#9e9e98" stroke-width="1.5" opacity="0.85"/>
<path d="M798.1 294.9l0.5 3.0" stroke="#979791" stroke-width="1.9" opacity="0.85"/>
<path d="M780.5 268.2l-3.4 6.3" stroke="#666660" stroke-width="1.4" opacity="0.85"/>
<path d="M810.9 208.6l-3.1 -0.5" stroke="#cdcdc7" stroke-width="1.1" opacity="0.85"/>
<path d="M778.8 251.8l-4.1 0.5" stroke="#bdbdb7" stroke-width="1.6" opacity="0.85"/>
<path d="M797.4 284.4l-6.1 3.4" stroke="#8f8f89" stroke-width="0.9" opacity="0.85"/>
<path d="M796.0 196.0l-6.6 -0.9" stroke="#a8a8a2" stroke-width="1.3" opacity="0.85"/>
<path d="M845.5 313.1l-2.1 6.1" stroke="#969690" stroke-width="1.8" opacity="0.85"/>
<path d="M818.1 283.7l-2.4 2.2" stroke="#b5b5af" stroke-width="1.1" opacity="0.85"/>
<path d="M886.2 311.8l2.7 5.6" stroke="#a2a29c" stroke-width="1.0" opacity="0.85"/>
<path d="M827.9 239.2l-4.1 6.8" stroke="#75756f" stroke-width="1.0" opacity="0.85"/>
<path d="M757.6 290.5l-3.1 6.9" stroke="#bebeb8" stroke-width="1.9" opacity="0.85"/>
<path d="M883.8 343.4l-2.6 5.5" stroke="#9c9c96" stroke-width="1.3" opacity="0.85"/>
<path d="M855.9 187.3l2.4 -2.7" stroke="#71716b" stroke-width="1.7" opacity="0.85"/>
<path d="M784.5 286.2l-3.6 4.0" stroke="#74746e" stroke-width="1.8" opacity="0.85"/>
<path d="M874.9 234.2l5.9 4.0" stroke="#a9a9a3" stroke-width="1.0" opacity="0.85"/>
<path d="M821.9 317.0l-1.0 5.2" stroke="#72726c" stroke-width="1.3" opacity="0.85"/>
<path d="M851.5 219.5l7.1 0.8" stroke="#5e5e58" stroke-width="1.4" opacity="0.85"/>
<path d="M790.7 271.3l-2.3 5.4" stroke="#999993" stroke-width="1.0" opacity="0.85"/>
<path d="M822.4 168.0l-2.6 -4.5" stroke="#585852" stroke-width="1.0" opacity="0.85"/>
<path d="M780.6 197.5l-3.7 -2.3" stroke="#787872" stroke-width="1.7" opacity="0.85"/>
<path d="M772.2 240.1l-3.3 -0.1" stroke="#83837d" stroke-width="1.2" opacity="0.85"/>
<path d="M841.2 319.6l1.3 3.6" stroke="#94948e" stroke-width="1.5" opacity="0.85"/>
<path d="M854.7 261.7l0.4 6.5" stroke="#7d7d77" stroke-width="0.9" opacity="0.85"/>
<path d="M808.9 330.5l-1.3 2.9" stroke="#595953" stroke-width="1.9" opacity="0.85"/>
<path d="M790.2 157.5l-1.4 -3.7" stroke="#777771" stroke-width="1.8" opacity="0.85"/>
<path d="M826.2 268.7l-0.0 5.8" stroke="#b1b1ab" stroke-width="1.1" opacity="0.85"/>
<path d="M796.8 291.5l-1.6 4.6" stroke="#797973" stroke-width="1.4" opacity="0.85"/>
<path d="M858.5 251.8l3.0 2.6" stroke="#969690" stroke-width="1.7" opacity="0.85"/>
<path d="M880.5 259.0l5.4 4.6" stroke="#80807a" stroke-width="1.6" opacity="0.85"/>
<path d="M808.6 173.4l-2.5 -1.6" stroke="#999993" stroke-width="1.5" opacity="0.85"/>
<path d="M801.0 330.4l1.5 7.3" stroke="#888882" stroke-width="1.2" opacity="0.85"/>
<path d="M790.1 319.1l-0.9 3.1" stroke="#c0c0ba" stroke-width="1.5" opacity="0.85"/>
<path d="M829.7 231.0l-3.9 1.5" stroke="#94948e" stroke-width="1.2" opacity="0.85"/>
<path d="M778.6 251.5l-2.3 2.9" stroke="#95958f" stroke-width="1.1" opacity="0.85"/>
<path d="M837.4 221.8l-4.0 1.8" stroke="#c2c2bc" stroke-width="1.7" opacity="0.85"/>
<path d="M835.5 332.5l0.5 4.8" stroke="#868680" stroke-width="1.7" opacity="0.85"/>
<path d="M777.8 287.5l-5.9 4.3" stroke="#9a9a94" stroke-width="1.6" opacity="0.85"/>
<path d="M793.9 317.7l-1.1 6.9" stroke="#c5c5bf" stroke-width="1.4" opacity="0.85"/>
<path d="M792.8 191.7l-3.1 -2.9" stroke="#82827c" stroke-width="1.6" opacity="0.85"/>
<path d="M765.8 281.8l-4.2 3.9" stroke="#73736d" stroke-width="1.3" opacity="0.85"/>
<path d="M777.9 321.6l-2.0 5.7" stroke="#bdbdb7" stroke-width="1.9" opacity="0.85"/>
<path d="M787.8 161.2l-4.8 -3.7" stroke="#83837d" stroke-width="1.4" opacity="0.85"/>
<path d="M772.1 190.5l-5.5 0.2" stroke="#d0d0ca" stroke-width="1.5" opacity="0.85"/>
<path d="M818.4 171.6l-1.0 -6.5" stroke="#7b7b75" stroke-width="1.5" opacity="0.85"/>
<path d="M888.1 305.1l-1.7 5.5" stroke="#575751" stroke-width="1.8" opacity="0.85"/>
<path d="M866.3 234.1l5.7 4.9" stroke="#c3c3bd" stroke-width="1.9" opacity="0.85"/>
<path d="M858.3 259.7l1.4 3.5" stroke="#9b9b95" stroke-width="1.8" opacity="0.85"/>
<path d="M868.3 340.9l-1.0 4.4" stroke="#5e5e58" stroke-width="1.1" opacity="0.85"/>
<path d="M851.1 334.0l-3.4 6.9" stroke="#9a9a94" stroke-width="1.0" opacity="0.85"/>
<path d="M871.2 256.6l2.2 4.9" stroke="#75756f" stroke-width="0.9" opacity="0.85"/>
<path d="M873.4 331.5l-1.1 6.3" stroke="#b2b2ac" stroke-width="1.4" opacity="0.85"/>
<path d="M780.4 204.9l-7.5 0.1" stroke="#61615b" stroke-width="1.1" opacity="0.85"/>
<path d="M798.6 277.8l-2.9 2.8" stroke="#74746e" stroke-width="1.7" opacity="0.85"/>
<path d="M876.8 335.5l1.3 3.8" stroke="#b1b1ab" stroke-width="1.3" opacity="0.85"/>
<path d="M797.6 318.2l1.1 4.7" stroke="#969690" stroke-width="1.6" opacity="0.85"/>
<path d="M872.7 301.4l-1.9 7.5" stroke="#868680" stroke-width="1.6" opacity="0.85"/>
<path d="M786.6 334.1l-0.3 7.4" stroke="#70706a" stroke-width="1.9" opacity="0.85"/>
<path d="M820.0 168.1l-3.9 -6.2" stroke="#b2b2ac" stroke-width="1.2" opacity="0.85"/>
<path d="M842.3 157.9l0.9 -4.6" stroke="#8d8d87" stroke-width="0.9" opacity="0.85"/>
<path d="M798.1 305.7l0.1 4.1" stroke="#c1c1bb" stroke-width="0.9" opacity="0.85"/>
<path d="M792.4 199.7l-6.3 -3.2" stroke="#bcbcb6" stroke-width="1.0" opacity="0.85"/>
<path d="M813.2 173.2l-4.6 -5.6" stroke="#9f9f99" stroke-width="1.8" opacity="0.85"/>
<path d="M854.0 180.6l-0.1 -4.3" stroke="#999993" stroke-width="1.5" opacity="0.85"/>
<path d="M822.7 166.5l-5.3 -4.3" stroke="#a2a29c" stroke-width="1.7" opacity="0.85"/>
<path d="M763.6 151.0l-3.4 -3.4" stroke="#8c8c86" stroke-width="1.3" opacity="0.85"/>
<path d="M832.5 332.2l-0.5 6.7" stroke="#676761" stroke-width="1.5" opacity="0.85"/>
<path d="M874.3 166.1l4.4 -3.9" stroke="#b7b7b1" stroke-width="1.5" opacity="0.85"/>
<path d="M783.7 333.8l-2.7 5.3" stroke="#bbbbb5" stroke-width="1.9" opacity="0.85"/>
<path d="M794.2 278.9l-3.4 2.5" stroke="#8e8e88" stroke-width="1.1" opacity="0.85"/>
<path d="M798.7 258.1l-5.4 2.8" stroke="#b3b3ad" stroke-width="1.5" opacity="0.85"/>
<path d="M781.0 190.1l-4.9 0.3" stroke="#696963" stroke-width="1.6" opacity="0.85"/>
<path d="M869.9 231.1l4.0 6.5" stroke="#a2a29c" stroke-width="1.2" opacity="0.85"/>
<path d="M876.0 287.6l2.2 3.1" stroke="#82827c" stroke-width="1.1" opacity="0.85"/>
<path d="M864.4 256.9l1.2 2.9" stroke="#a5a59f" stroke-width="1.4" opacity="0.85"/>
<path d="M851.7 333.2l2.0 6.8" stroke="#aeaea8" stroke-width="1.8" opacity="0.85"/>
<path d="M864.5 202.4l5.7 -4.0" stroke="#878781" stroke-width="1.6" opacity="0.85"/>
<path d="M781.8 240.6l-4.6 0.5" stroke="#b8b8b2" stroke-width="1.1" opacity="0.85"/>
<path d="M828.0 341.9l0.5 5.2" stroke="#b3b3ad" stroke-width="1.5" opacity="0.85"/>
<path d="M839.9 224.4l-2.9 6.2" stroke="#93938d" stroke-width="1.5" opacity="0.85"/>
<path d="M768.3 313.6l1.7 3.2" stroke="#6b6b65" stroke-width="1.0" opacity="0.85"/>
<path d="M881.9 328.5l-1.2 4.4" stroke="#8e8e88" stroke-width="1.0" opacity="0.85"/>
<path d="M859.1 193.7l1.6 -6.9" stroke="#8a8a84" stroke-width="1.6" opacity="0.85"/>
<path d="M777.1 288.0l-2.8 3.6" stroke="#cbcbc5" stroke-width="1.3" opacity="0.85"/>
<path d="M775.0 325.5l-0.5 3.6" stroke="#9a9a94" stroke-width="1.1" opacity="0.85"/>
<path d="M794.6 158.8l-2.8 -6.4" stroke="#5d5d57" stroke-width="1.4" opacity="0.85"/>
<path d="M767.6 177.8l-3.3 -4.2" stroke="#7a7a74" stroke-width="1.1" opacity="0.85"/>
<path d="M860.8 251.9l2.1 5.0" stroke="#ababa5" stroke-width="1.7" opacity="0.85"/>
<path d="M782.4 183.0l-5.2 -2.8" stroke="#898983" stroke-width="1.3" opacity="0.85"/>
<path d="M866.3 286.4l2.7 2.7" stroke="#95958f" stroke-width="1.9" opacity="0.85"/>
<path d="M767.1 204.4l-7.4 1.2" stroke="#aaaaa4" stroke-width="1.2" opacity="0.85"/>
<path d="M810.2 154.9l-1.5 -4.4" stroke="#7d7d77" stroke-width="1.5" opacity="0.85"/>
<path d="M793.7 155.4l-4.7 -1.8" stroke="#898983" stroke-width="1.1" opacity="0.85"/>
<path d="M775.5 160.5l-6.5 -3.5" stroke="#969690" stroke-width="1.2" opacity="0.85"/>
<path d="M800.7 207.2l-6.4 -3.8" stroke="#5d5d57" stroke-width="1.8" opacity="0.85"/>
<path d="M780.8 339.3l0.4 4.5" stroke="#bfbfb9" stroke-width="1.3" opacity="0.85"/>
<path d="M813.1 341.7l1.6 4.0" stroke="#696963" stroke-width="1.7" opacity="0.85"/>
<path d="M784.3 295.9l0.9 5.9" stroke="#dbdbd5" stroke-width="1.2" opacity="0.85"/>
<path d="M861.2 192.0l3.0 -2.0" stroke="#a2a29c" stroke-width="1.1" opacity="0.85"/>
<path d="M817.9 207.5l-6.2 -0.7" stroke="#65655f" stroke-width="1.0" opacity="0.85"/>
<path d="M760.9 229.5l-3.4 -0.1" stroke="#7d7d77" stroke-width="1.7" opacity="0.85"/>
<path d="M824.9 227.8l-3.1 1.9" stroke="#82827c" stroke-width="0.9" opacity="0.85"/>
<path d="M860.7 276.9l3.4 5.7" stroke="#7f7f79" stroke-width="1.3" opacity="0.85"/>
<path d="M759.9 165.4l-4.3 -6.5" stroke="#9f9f99" stroke-width="1.8" opacity="0.85"/>
<path d="M834.7 156.4l-2.1 -4.5" stroke="#85857f" stroke-width="1.0" opacity="0.85"/>
<path d="M851.8 313.4l2.2 4.9" stroke="#adada7" stroke-width="1.3" opacity="0.85"/>
<path d="M793.7 280.4l-2.9 4.7" stroke="#666660" stroke-width="1.7" opacity="0.85"/>
<path d="M792.5 185.7l-6.5 -2.9" stroke="#878781" stroke-width="1.0" opacity="0.85"/>
<path d="M866.5 155.6l2.3 -5.0" stroke="#7c7c76" stroke-width="1.0" opacity="0.85"/>
<path d="M833.2 331.5l0.5 3.7" stroke="#6c6c66" stroke-width="1.4" opacity="0.85"/>
<path d="M787.0 205.7l-5.2 0.1" stroke="#54544e" stroke-width="1.2" opacity="0.85"/>
<path d="M803.1 178.2l-2.3 -3.8" stroke="#53534d" stroke-width="0.9" opacity="0.85"/>
<path d="M878.7 201.1l5.3 -2.3" stroke="#4f4f49" stroke-width="1.6" opacity="0.85"/>
<path d="M776.8 310.2l1.4 7.8" stroke="#75756f" stroke-width="1.1" opacity="0.85"/>
<path d="M862.6 159.4l1.7 -4.6" stroke="#90908a" stroke-width="1.4" opacity="0.85"/>
<path d="M802.8 175.0l-2.3 -5.5" stroke="#7f7f79" stroke-width="1.0" opacity="0.85"/>
<path d="M825.6 154.8l-5.2 -5.9" stroke="#95958f" stroke-width="1.8" opacity="0.85"/>
<path d="M796.0 326.0l-0.7 5.2" stroke="#989892" stroke-width="1.6" opacity="0.85"/>
<path d="M768.3 191.5l-5.7 -4.6" stroke="#5e5e58" stroke-width="1.3" opacity="0.85"/>
<path d="M795.3 287.7l-1.3 3.4" stroke="#74746e" stroke-width="1.3" opacity="0.85"/>
<path d="M761.6 269.1l-4.1 6.4" stroke="#bdbdb7" stroke-width="1.5" opacity="0.85"/>
<path d="M795.7 213.0l-6.8 0.1" stroke="#8e8e88" stroke-width="1.2" opacity="0.85"/>
<path d="M785.2 309.3l-0.6 5.2" stroke="#bfbfb9" stroke-width="1.4" opacity="0.85"/>
<path d="M780.4 203.0l-6.1 -1.3" stroke="#797973" stroke-width="1.6" opacity="0.85"/>
<path d="M755.5 256.2l-4.8 5.6" stroke="#969690" stroke-width="1.9" opacity="0.85"/>
<path d="M864.3 318.7l2.4 6.6" stroke="#bebeb8" stroke-width="1.4" opacity="0.85"/>
<path d="M775.9 302.2l-0.4 3.1" stroke="#9f9f99" stroke-width="1.5" opacity="0.85"/>
<path d="M764.0 198.7l-7.2 -2.8" stroke="#8c8c86" stroke-width="1.3" opacity="0.85"/>
<path d="M792.1 341.5l0.4 4.9" stroke="#80807a" stroke-width="1.8" opacity="0.85"/>
<path d="M871.0 327.6l0.9 7.6" stroke="#8b8b85" stroke-width="1.2" opacity="0.85"/>
<path d="M779.1 311.1l-1.4 4.0" stroke="#8b8b85" stroke-width="1.6" opacity="0.85"/>
<path d="M845.1 194.5l3.2 -6.3" stroke="#b2b2ac" stroke-width="1.3" opacity="0.85"/>
<path d="M810.2 156.4l-1.7 -7.8" stroke="#a7a7a1" stroke-width="1.4" opacity="0.85"/>
<path d="M780.4 291.0l-0.2 3.1" stroke="#65655f" stroke-width="1.0" opacity="0.85"/>
<path d="M818.9 247.7l-3.0 4.7" stroke="#9e9e98" stroke-width="0.9" opacity="0.85"/>
<path d="M872.9 292.7l1.0 6.6" stroke="#7b7b75" stroke-width="1.5" opacity="0.85"/>
<path d="M828.1 311.1l-3.0 6.7" stroke="#7f7f79" stroke-width="1.5" opacity="0.85"/>
<path d="M773.4 312.4l0.9 4.0" stroke="#81817b" stroke-width="1.3" opacity="0.85"/>
<path d="M800.7 282.0l-5.2 5.4" stroke="#787872" stroke-width="1.3" opacity="0.85"/>
<path d="M799.7 160.0l-1.4 -2.8" stroke="#aeaea8" stroke-width="1.2" opacity="0.85"/>
<path d="M814.8 154.7l-4.8 -3.4" stroke="#888882" stroke-width="1.2" opacity="0.85"/>
<path d="M832.9 323.3l1.7 5.9" stroke="#70706a" stroke-width="1.2" opacity="0.85"/>
<path d="M805.9 186.8l-2.4 -2.6" stroke="#9d9d97" stroke-width="1.0" opacity="0.85"/>
<path d="M758.7 256.7l-3.4 2.1" stroke="#4b4b45" stroke-width="1.7" opacity="0.85"/>
<path d="M772.3 175.9l-3.8 -1.2" stroke="#ababa5" stroke-width="1.2" opacity="0.85"/>
<path d="M764.7 253.5l-4.3 4.6" stroke="#767670" stroke-width="1.9" opacity="0.85"/>
<path d="M824.7 195.0l-2.4 -3.4" stroke="#83837d" stroke-width="1.6" opacity="0.85"/>
<path d="M886.3 274.9l3.1 2.7" stroke="#62625c" stroke-width="1.7" opacity="0.85"/>
<path d="M874.5 265.9l1.1 5.6" stroke="#a5a59f" stroke-width="1.3" opacity="0.85"/>
<path d="M759.8 230.9l-6.7 0.9" stroke="#bfbfb9" stroke-width="1.7" opacity="0.85"/>
<path d="M852.2 307.0l0.4 5.4" stroke="#bcbcb6" stroke-width="1.7" opacity="0.85"/>
<path d="M824.1 183.8l-0.7 -4.9" stroke="#8e8e88" stroke-width="1.1" opacity="0.85"/>
<path d="M802.6 298.5l1.9 4.7" stroke="#51514b" stroke-width="1.0" opacity="0.85"/>
<path d="M756.9 294.2l0.6 6.7" stroke="#676761" stroke-width="0.9" opacity="0.85"/>
<path d="M839.0 168.7l0.5 -4.4" stroke="#a0a09a" stroke-width="1.9" opacity="0.85"/>
<path d="M852.5 200.8l0.7 -5.7" stroke="#7e7e78" stroke-width="1.8" opacity="0.85"/>
<path d="M883.1 234.0l4.9 5.4" stroke="#8d8d87" stroke-width="1.1" opacity="0.85"/>
<path d="M880.7 345.0l1.3 5.6" stroke="#c2c2bc" stroke-width="1.6" opacity="0.85"/>
<path d="M765.0 188.6l-5.9 -0.7" stroke="#7d7d77" stroke-width="1.8" opacity="0.85"/>
<path d="M871.3 211.5l3.5 0.0" stroke="#7c7c76" stroke-width="1.5" opacity="0.85"/>
<path d="M794.4 195.4l-3.0 -0.9" stroke="#ababa5" stroke-width="1.8" opacity="0.85"/>
<path d="M887.0 272.2l2.8 4.5" stroke="#a2a29c" stroke-width="1.3" opacity="0.85"/>
<path d="M769.3 318.4l0.7 3.8" stroke="#5f5f59" stroke-width="1.7" opacity="0.85"/>
<path d="M796.6 228.5l-4.6 1.0" stroke="#696963" stroke-width="1.6" opacity="0.85"/>
<path d="M800.3 280.5l-2.0 3.2" stroke="#c7c7c1" stroke-width="1.2" opacity="0.85"/>
<path d="M795.6 309.4l0.7 4.4" stroke="#989892" stroke-width="1.8" opacity="0.85"/>
<path d="M829.0 329.0l-0.9 6.0" stroke="#3f3f39" stroke-width="1.8" opacity="0.85"/>
<path d="M761.7 282.9l-1.4 3.4" stroke="#83837d" stroke-width="1.1" opacity="0.85"/>
<path d="M818.4 205.7l-7.2 -0.2" stroke="#a5a59f" stroke-width="1.8" opacity="0.85"/>
<path d="M816.1 220.1l-6.2 0.4" stroke="#989892" stroke-width="1.8" opacity="0.85"/>
<path d="M843.2 284.2l2.0 5.5" stroke="#bcbcb6" stroke-width="1.2" opacity="0.85"/>
<path d="M890.7 291.4l-2.4 7.6" stroke="#6a6a64" stroke-width="1.0" opacity="0.85"/>
<path d="M789.0 259.0l-6.4 2.9" stroke="#45453f" stroke-width="1.6" opacity="0.85"/>
<path d="M766.6 212.5l-5.7 2.2" stroke="#82827c" stroke-width="1.6" opacity="0.85"/>
<path d="M771.9 270.5l-2.9 2.5" stroke="#8c8c86" stroke-width="1.7" opacity="0.85"/>
<path d="M778.7 213.2l-4.3 0.8" stroke="#999993" stroke-width="1.1" opacity="0.85"/>
<path d="M756.4 298.7l-2.5 7.2" stroke="#888882" stroke-width="1.4" opacity="0.85"/>
<path d="M835.8 310.8l-2.2 5.7" stroke="#a4a49e" stroke-width="1.2" opacity="0.85"/>
<path d="M778.4 311.3l2.7 6.8" stroke="#878781" stroke-width="1.6" opacity="0.85"/>
<path d="M785.3 298.7l1.1 5.4" stroke="#8c8c86" stroke-width="1.7" opacity="0.85"/>
<path d="M770.6 249.4l-5.4 4.9" stroke="#c5c5bf" stroke-width="1.4" opacity="0.85"/>
<path d="M766.2 331.8l1.0 4.8" stroke="#767670" stroke-width="1.1" opacity="0.85"/>
<path d="M812.2 313.3l1.6 4.9" stroke="#888882" stroke-width="1.9" opacity="0.85"/>
<path d="M800.5 219.4l-7.5 -0.2" stroke="#9d9d97" stroke-width="1.1" opacity="0.85"/>
<path d="M837.8 206.8l-3.0 -4.6" stroke="#9c9c96" stroke-width="1.6" opacity="0.85"/>
<path d="M775.0 231.4l-7.5 -2.0" stroke="#9c9c96" stroke-width="1.4" opacity="0.85"/>
<path d="M837.0 302.7l0.3 5.9" stroke="#9d9d97" stroke-width="1.5" opacity="0.85"/>
<path d="M867.0 205.9l4.4 -1.0" stroke="#cdcdc7" stroke-width="0.9" opacity="0.85"/>
<path d="M847.2 195.5l2.2 -3.1" stroke="#95958f" stroke-width="1.3" opacity="0.85"/>
<path d="M784.8 285.9l-4.4 5.4" stroke="#84847e" stroke-width="1.8" opacity="0.85"/>
<path d="M846.6 218.9l3.4 5.9" stroke="#70706a" stroke-width="1.6" opacity="0.85"/>
<path d="M860.2 331.9l1.9 5.4" stroke="#81817b" stroke-width="1.1" opacity="0.85"/>
<path d="M787.0 288.7l-1.6 5.2" stroke="#94948e" stroke-width="1.1" opacity="0.85"/>
<path d="M843.7 235.4l-2.7 5.2" stroke="#c2c2bc" stroke-width="1.8" opacity="0.85"/>
<path d="M828.4 156.5l-2.9 -4.7" stroke="#989892" stroke-width="1.0" opacity="0.85"/>
<path d="M762.3 173.7l-4.6 -6.4" stroke="#91918b" stroke-width="1.4" opacity="0.85"/>
<path d="M774.1 182.8l-3.1 -2.4" stroke="#63635d" stroke-width="1.6" opacity="0.85"/>
<path d="M808.4 332.4l-0.0 3.1" stroke="#797973" stroke-width="1.3" opacity="0.85"/>
<path d="M832.7 179.4l-3.0 -5.6" stroke="#a2a29c" stroke-width="0.9" opacity="0.85"/>
<path d="M804.6 256.3l-6.7 4.1" stroke="#787872" stroke-width="1.6" opacity="0.85"/>
<path d="M762.9 214.9l-5.5 -0.5" stroke="#9c9c96" stroke-width="1.5" opacity="0.85"/>
<path d="M853.5 266.2l2.6 6.8" stroke="#bcbcb6" stroke-width="1.2" opacity="0.85"/>
<path d="M863.5 265.3l2.8 2.6" stroke="#aaaaa4" stroke-width="1.7" opacity="0.85"/>
<path d="M841.7 336.1l-1.7 5.0" stroke="#999993" stroke-width="1.4" opacity="0.85"/>
<path d="M869.4 203.6l6.0 -0.0" stroke="#b0b0aa" stroke-width="0.9" opacity="0.85"/>
<path d="M839.6 226.1l-5.4 4.0" stroke="#8c8c86" stroke-width="1.2" opacity="0.85"/>
<path d="M835.2 236.4l-3.5 3.2" stroke="#4f4f49" stroke-width="1.6" opacity="0.85"/>
<path d="M772.0 154.4l-4.5 -1.5" stroke="#a9a9a3" stroke-width="1.8" opacity="0.85"/>
<path d="M828.3 273.5l-1.7 6.0" stroke="#55554f" stroke-width="1.0" opacity="0.85"/>
<path d="M826.6 266.3l-2.0 7.6" stroke="#75756f" stroke-width="1.7" opacity="0.85"/>
<path d="M757.0 261.9l-3.3 4.4" stroke="#95958f" stroke-width="1.4" opacity="0.85"/>
<path d="M844.0 321.1l1.2 6.0" stroke="#c2c2bc" stroke-width="1.6" opacity="0.85"/>
<path d="M856.9 158.8l2.9 -4.8" stroke="#696963" stroke-width="1.4" opacity="0.85"/>
<path d="M888.0 289.5l0.7 7.9" stroke="#70706a" stroke-width="1.5" opacity="0.85"/>
<path d="M866.1 229.3l4.6 1.6" stroke="#91918b" stroke-width="1.4" opacity="0.85"/>
<path d="M835.0 271.0l0.3 6.8" stroke="#71716b" stroke-width="1.1" opacity="0.85"/>
<path d="M883.7 336.5l0.5 5.8" stroke="#a3a39d" stroke-width="1.1" opacity="0.85"/>
<path d="M756.8 291.7l1.0 4.0" stroke="#8b8b85" stroke-width="0.9" opacity="0.85"/>
<path d="M794.6 171.5l-2.5 -3.6" stroke="#9e9e98" stroke-width="1.1" opacity="0.85"/>
<path d="M779.0 282.0l-6.1 3.0" stroke="#b2b2ac" stroke-width="1.5" opacity="0.85"/>
<path d="M772.9 210.9l-4.2 -2.0" stroke="#a5a59f" stroke-width="1.2" opacity="0.85"/>
<path d="M804.5 244.1l-4.2 2.2" stroke="#5e5e58" stroke-width="1.6" opacity="0.85"/>
<path d="M842.9 282.8l1.3 4.6" stroke="#84847e" stroke-width="1.3" opacity="0.85"/>
<path d="M884.9 244.3l2.3 2.1" stroke="#6d6d67" stroke-width="1.1" opacity="0.85"/>
<path d="M788.7 154.1l-4.8 -4.2" stroke="#686862" stroke-width="1.4" opacity="0.85"/>
<path d="M783.8 233.4l-4.7 0.5" stroke="#c2c2bc" stroke-width="1.0" opacity="0.85"/>
<path d="M804.8 158.4l-3.1 -3.4" stroke="#8c8c86" stroke-width="1.9" opacity="0.85"/>
<path d="M808.7 191.7l-3.9 -6.3" stroke="#8c8c86" stroke-width="1.3" opacity="0.85"/>
<path d="M828.7 280.2l0.7 5.4" stroke="#999993" stroke-width="1.7" opacity="0.85"/>
<path d="M873.4 317.3l1.8 4.6" stroke="#cbcbc5" stroke-width="1.2" opacity="0.85"/>
<path d="M852.7 342.6l0.6 6.6" stroke="#969690" stroke-width="1.7" opacity="0.85"/>
<path d="M836.8 298.8l-1.4 3.3" stroke="#a4a49e" stroke-width="1.5" opacity="0.85"/>
<path d="M778.0 225.0l-4.8 -1.3" stroke="#bbbbb5" stroke-width="1.8" opacity="0.85"/>
<path d="M788.1 286.6l-2.2 2.1" stroke="#c4c4be" stroke-width="1.7" opacity="0.85"/>
<path d="M862.0 151.7l3.4 -6.8" stroke="#4c4c46" stroke-width="1.3" opacity="0.85"/>
<path d="M887.5 201.4l5.1 -2.6" stroke="#5d5d57" stroke-width="1.2" opacity="0.85"/>
<path d="M843.7 226.9l-1.0 5.8" stroke="#b6b6b0" stroke-width="1.4" opacity="0.85"/>
<path d="M855.8 206.2l6.6 -4.6" stroke="#8e8e88" stroke-width="1.5" opacity="0.85"/>
<path d="M777.7 259.2l-2.1 3.7" stroke="#8b8b85" stroke-width="1.7" opacity="0.85"/>
<path d="M824.9 251.0l-0.8 3.5" stroke="#bcbcb6" stroke-width="1.7" opacity="0.85"/>
<path d="M778.1 300.2l0.5 6.2" stroke="#aeaea8" stroke-width="1.0" opacity="0.85"/>
<path d="M864.6 185.3l2.7 -4.5" stroke="#a6a6a0" stroke-width="0.9" opacity="0.85"/>
<path d="M763.9 237.2l-4.9 -1.1" stroke="#9c9c96" stroke-width="1.3" opacity="0.85"/>
<path d="M823.1 183.0l-2.1 -2.7" stroke="#94948e" stroke-width="1.6" opacity="0.85"/>
<path d="M758.1 236.8l-7.0 2.7" stroke="#72726c" stroke-width="1.7" opacity="0.85"/>
<path d="M820.9 250.2l-1.7 7.8" stroke="#777771" stroke-width="1.7" opacity="0.85"/>
<path d="M857.1 340.3l1.0 5.1" stroke="#8d8d87" stroke-width="0.9" opacity="0.85"/>
<path d="M810.0 336.1l-0.7 6.3" stroke="#6e6e68" stroke-width="1.8" opacity="0.85"/>
<path d="M795.5 164.4l-6.2 -3.9" stroke="#bfbfb9" stroke-width="1.4" opacity="0.85"/>
<path d="M844.8 271.3l-0.9 3.6" stroke="#73736d" stroke-width="1.2" opacity="0.85"/>
<path d="M871.6 268.4l2.9 5.8" stroke="#bfbfb9" stroke-width="1.0" opacity="0.85"/>
<path d="M818.2 258.9l-2.0 2.8" stroke="#a6a6a0" stroke-width="1.8" opacity="0.85"/>
<path d="M809.1 185.8l-5.7 -3.0" stroke="#878781" stroke-width="1.9" opacity="0.85"/>
<path d="M850.9 163.9l2.7 -5.7" stroke="#91918b" stroke-width="0.9" opacity="0.85"/>
<path d="M877.6 211.5l2.5 -1.6" stroke="#bbbbb5" stroke-width="1.7" opacity="0.85"/>
<path d="M771.7 218.7l-6.1 -1.1" stroke="#7e7e78" stroke-width="1.4" opacity="0.85"/>
<path d="M827.3 167.9l-3.0 -4.8" stroke="#b6b6b0" stroke-width="1.6" opacity="0.85"/>
<path d="M841.6 299.7l-1.0 6.5" stroke="#a9a9a3" stroke-width="1.1" opacity="0.85"/>
<path d="M831.4 281.4l-1.2 3.5" stroke="#7a7a74" stroke-width="1.5" opacity="0.85"/>
<path d="M768.4 246.1l-4.3 2.1" stroke="#7c7c76" stroke-width="1.8" opacity="0.85"/>
<path d="M793.0 153.6l-6.2 -5.0" stroke="#74746e" stroke-width="1.7" opacity="0.85"/>
<path d="M757.8 228.7l-3.3 -0.7" stroke="#8f8f89" stroke-width="1.6" opacity="0.85"/>
<path d="M870.0 342.3l1.0 3.8" stroke="#c6c6c0" stroke-width="1.5" opacity="0.85"/>
<path d="M771.8 275.5l-2.6 1.9" stroke="#c2c2bc" stroke-width="1.3" opacity="0.85"/>
<path d="M806.2 320.5l0.1 3.2" stroke="#3e3e38" stroke-width="1.6" opacity="0.85"/>
<path d="M815.5 248.6l-3.8 4.3" stroke="#6d6d67" stroke-width="1.3" opacity="0.85"/>
<path d="M780.0 340.8l0.7 3.0" stroke="#898983" stroke-width="1.0" opacity="0.85"/>
<path d="M891.2 296.4l-2.1 4.6" stroke="#bdbdb7" stroke-width="1.0" opacity="0.85"/>
<path d="M769.7 252.8l-2.7 3.6" stroke="#767670" stroke-width="1.2" opacity="0.85"/>
<path d="M756.9 334.1l0.6 6.0" stroke="#777771" stroke-width="1.2" opacity="0.85"/>
<path d="M786.9 334.2l2.1 4.3" stroke="#81817b" stroke-width="1.8" opacity="0.85"/>
<path d="M881.3 243.7l4.6 3.3" stroke="#a9a9a3" stroke-width="0.9" opacity="0.85"/>
<path d="M786.8 326.4l3.2 6.4" stroke="#aeaea8" stroke-width="1.4" opacity="0.85"/>
<path d="M797.7 217.1l-6.1 -1.3" stroke="#62625c" stroke-width="1.7" opacity="0.85"/>
<path d="M842.0 212.0l-5.7 -4.3" stroke="#868680" stroke-width="1.7" opacity="0.85"/>
<path d="M797.2 253.3l-5.6 3.9" stroke="#7f7f79" stroke-width="1.2" opacity="0.85"/>
<path d="M787.3 245.3l-4.9 6.1" stroke="#71716b" stroke-width="1.4" opacity="0.85"/>
<path d="M772.2 257.4l-6.8 2.8" stroke="#8f8f89" stroke-width="1.7" opacity="0.85"/>
<path d="M785.0 253.6l-3.6 1.6" stroke="#5e5e58" stroke-width="1.8" opacity="0.85"/>
<path d="M781.7 163.6l-4.5 -5.0" stroke="#c5c5bf" stroke-width="1.6" opacity="0.85"/>
<path d="M773.4 298.5l0.8 5.7" stroke="#8f8f89" stroke-width="1.9" opacity="0.85"/>
<path d="M803.2 325.3l1.8 6.8" stroke="#6a6a64" stroke-width="1.6" opacity="0.85"/>
<path d="M764.1 259.6l-3.2 1.4" stroke="#a9a9a3" stroke-width="1.7" opacity="0.85"/>
<path d="M783.0 198.1l-3.7 -2.2" stroke="#b7b7b1" stroke-width="1.8" opacity="0.85"/>
<path d="M879.6 200.9l6.5 -4.3" stroke="#75756f" stroke-width="1.3" opacity="0.85"/>
<path d="M819.9 173.0l-1.6 -3.2" stroke="#5e5e58" stroke-width="1.0" opacity="0.85"/>
<path d="M829.1 237.3l-1.3 6.3" stroke="#70706a" stroke-width="1.7" opacity="0.85"/>
<path d="M887.2 207.6l6.3 0.8" stroke="#a9a9a3" stroke-width="1.7" opacity="0.85"/>
<path d="M884.1 334.4l-1.3 4.6" stroke="#7c7c76" stroke-width="1.4" opacity="0.85"/>
<path d="M814.5 207.3l-2.8 -2.0" stroke="#8f8f89" stroke-width="1.6" opacity="0.85"/>
<path d="M876.3 233.6l3.9 5.2" stroke="#60605a" stroke-width="1.4" opacity="0.85"/>
<path d="M778.0 289.4l-3.7 1.6" stroke="#6e6e68" stroke-width="1.7" opacity="0.85"/>
<path d="M872.1 207.9l4.9 -1.2" stroke="#a0a09a" stroke-width="1.3" opacity="0.85"/>
<path d="M814.3 216.8l-7.8 0.0" stroke="#a7a7a1" stroke-width="0.9" opacity="0.85"/>
<path d="M862.1 306.3l-1.0 6.2" stroke="#777771" stroke-width="1.4" opacity="0.85"/>
<path d="M792.4 308.6l0.5 4.1" stroke="#7c7c76" stroke-width="1.1" opacity="0.85"/>
<path d="M807.4 201.7l-5.7 -4.6" stroke="#71716b" stroke-width="1.3" opacity="0.85"/>
<path d="M798.4 164.1l-4.3 -5.7" stroke="#989892" stroke-width="1.2" opacity="0.85"/>
<path d="M799.0 331.9l0.3 5.1" stroke="#81817b" stroke-width="1.4" opacity="0.85"/>
<path d="M860.7 329.0l1.0 3.3" stroke="#64645e" stroke-width="1.9" opacity="0.85"/>
<path d="M885.5 209.0l3.9 0.3" stroke="#878781" stroke-width="1.2" opacity="0.85"/>
<path d="M796.0 282.1l-6.3 3.8" stroke="#b7b7b1" stroke-width="1.4" opacity="0.85"/>
<path d="M853.3 223.4l4.6 5.0" stroke="#82827c" stroke-width="1.3" opacity="0.85"/>
<path d="M782.6 340.9l0.2 4.1" stroke="#b0b0aa" stroke-width="1.1" opacity="0.85"/>
<path d="M823.2 192.7l-6.3 -4.9" stroke="#b8b8b2" stroke-width="1.7" opacity="0.85"/>
<path d="M785.0 179.8l-5.2 -3.5" stroke="#a0a09a" stroke-width="1.5" opacity="0.85"/>
<path d="M842.0 282.6l1.4 3.4" stroke="#868680" stroke-width="1.9" opacity="0.85"/>
<path d="M790.3 200.3l-3.2 0.7" stroke="#adada7" stroke-width="1.6" opacity="0.85"/>
<path d="M846.9 338.0l2.1 4.7" stroke="#989892" stroke-width="1.7" opacity="0.85"/>
<path d="M772.2 288.5l-6.3 3.8" stroke="#9a9a94" stroke-width="1.9" opacity="0.85"/>
<path d="M761.0 221.9l-3.5 1.1" stroke="#babab4" stroke-width="1.6" opacity="0.85"/>
<path d="M837.5 344.6l-0.8 3.9" stroke="#5f5f59" stroke-width="0.9" opacity="0.85"/>
<path d="M782.6 288.2l-2.8 2.2" stroke="#6a6a64" stroke-width="1.4" opacity="0.85"/>
<path d="M789.1 274.6l-2.1 6.7" stroke="#999993" stroke-width="1.2" opacity="0.85"/>
<path d="M787.2 211.7l-3.1 0.4" stroke="#85857f" stroke-width="1.8" opacity="0.85"/>
<path d="M818.9 173.7l-1.7 -5.6" stroke="#8e8e88" stroke-width="1.5" opacity="0.85"/>
<path d="M786.3 325.9l-1.6 3.3" stroke="#797973" stroke-width="1.5" opacity="0.85"/>
<path d="M786.0 300.7l1.6 6.7" stroke="#94948e" stroke-width="1.0" opacity="0.85"/>
<path d="M802.4 162.7l-3.4 -6.1" stroke="#65655f" stroke-width="1.8" opacity="0.85"/>
<path d="M849.3 263.6l-1.6 4.6" stroke="#82827c" stroke-width="1.6" opacity="0.85"/>
<path d="M807.2 239.0l-6.7 3.9" stroke="#60605a" stroke-width="1.0" opacity="0.85"/>
<path d="M786.2 292.8l0.0 7.3" stroke="#8c8c86" stroke-width="1.9" opacity="0.85"/>
<path d="M844.3 332.5l-2.2 5.9" stroke="#a7a7a1" stroke-width="1.6" opacity="0.85"/>
<path d="M871.2 282.1l1.2 4.6" stroke="#5d5d57" stroke-width="1.5" opacity="0.85"/>
<path d="M777.2 208.3l-5.0 -0.5" stroke="#aaaaa4" stroke-width="1.5" opacity="0.85"/>
<path d="M887.8 245.9l3.4 3.1" stroke="#bdbdb7" stroke-width="1.2" opacity="0.85"/>
<path d="M864.9 199.3l3.5 -5.8" stroke="#a1a19b" stroke-width="1.6" opacity="0.85"/>
<path d="M766.4 230.4l-7.4 1.9" stroke="#c7c7c1" stroke-width="1.7" opacity="0.85"/>
<path d="M790.0 258.1l-3.7 2.4" stroke="#83837d" stroke-width="1.0" opacity="0.85"/>
<path d="M800.9 191.6l-4.9 -0.8" stroke="#bdbdb7" stroke-width="1.4" opacity="0.85"/>
<path d="M888.9 315.9l1.2 6.4" stroke="#999993" stroke-width="1.4" opacity="0.85"/>
<path d="M869.4 269.1l0.3 4.5" stroke="#74746e" stroke-width="1.5" opacity="0.85"/>
<path d="M882.8 239.5l3.9 6.5" stroke="#b0b0aa" stroke-width="1.6" opacity="0.85"/>
<path d="M778.8 338.3l1.6 6.2" stroke="#a4a49e" stroke-width="1.3" opacity="0.85"/>
<path d="M766.4 319.3l-0.6 6.3" stroke="#8b8b85" stroke-width="1.9" opacity="0.85"/>
<path d="M779.2 219.4l-3.7 -0.7" stroke="#7d7d77" stroke-width="1.4" opacity="0.85"/>
<path d="M770.8 239.1l-3.4 1.0" stroke="#53534d" stroke-width="1.0" opacity="0.85"/>
<path d="M768.8 324.9l0.7 6.5" stroke="#c6c6c0" stroke-width="1.8" opacity="0.85"/>
<path d="M798.0 278.7l-6.3 3.1" stroke="#c8c8c2" stroke-width="1.2" opacity="0.85"/>
<path d="M776.4 314.4l-0.8 3.2" stroke="#777771" stroke-width="1.8" opacity="0.85"/>
<path d="M843.8 336.4l0.9 3.7" stroke="#53534d" stroke-width="1.8" opacity="0.85"/>
<path d="M770.6 337.4l0.4 6.4" stroke="#999993" stroke-width="1.7" opacity="0.85"/>
<path d="M842.4 212.9l-3.3 -1.4" stroke="#7b7b75" stroke-width="1.7" opacity="0.85"/>
<path d="M784.5 184.1l-3.0 -0.7" stroke="#a5a59f" stroke-width="1.2" opacity="0.85"/>
<path d="M777.0 290.3l0.8 5.0" stroke="#8c8c86" stroke-width="1.1" opacity="0.85"/>
<path d="M817.6 319.2l1.1 4.5" stroke="#a3a39d" stroke-width="1.4" opacity="0.85"/>
<path d="M812.1 183.3l-6.5 -2.9" stroke="#7a7a74" stroke-width="1.4" opacity="0.85"/>
<path d="M869.7 282.3l4.9 5.9" stroke="#91918b" stroke-width="0.9" opacity="0.85"/>
<path d="M887.6 242.5l6.8 3.3" stroke="#a9a9a3" stroke-width="1.8" opacity="0.85"/>
<path d="M773.3 287.8l-4.2 2.2" stroke="#6f6f69" stroke-width="1.8" opacity="0.85"/>
<path d="M836.7 315.4l2.7 5.2" stroke="#a5a59f" stroke-width="1.0" opacity="0.85"/>
<path d="M810.4 197.4l-4.5 -2.1" stroke="#93938d" stroke-width="1.7" opacity="0.85"/>
<path d="M771.8 218.2l-6.0 -1.8" stroke="#7e7e78" stroke-width="1.6" opacity="0.85"/>
<path d="M891.2 253.5l4.2 1.0" stroke="#74746e" stroke-width="1.6" opacity="0.85"/>
<path d="M763.3 302.3l-0.4 6.5" stroke="#6d6d67" stroke-width="1.4" opacity="0.85"/>
<path d="M794.7 276.3l-3.7 2.8" stroke="#64645e" stroke-width="1.5" opacity="0.85"/>
<path d="M859.5 215.6l6.8 1.9" stroke="#9e9e98" stroke-width="1.1" opacity="0.85"/>
<path d="M883.4 239.5l5.1 4.7" stroke="#888882" stroke-width="1.1" opacity="0.85"/>
<path d="M865.2 158.1l4.1 -5.8" stroke="#6f6f69" stroke-width="1.0" opacity="0.85"/>
<path d="M865.1 315.9l-2.4 5.3" stroke="#a1a19b" stroke-width="1.7" opacity="0.85"/>
<path d="M768.6 314.1l1.2 6.1" stroke="#c4c4be" stroke-width="1.5" opacity="0.85"/>
<path d="M863.1 339.9l-2.2 7.3" stroke="#666660" stroke-width="1.1" opacity="0.85"/>
<path d="M869.0 217.5l4.0 -0.3" stroke="#9e9e98" stroke-width="1.3" opacity="0.85"/>
<path d="M790.8 267.9l-5.0 3.7" stroke="#686862" stroke-width="1.8" opacity="0.85"/>
<path d="M792.2 199.3l-4.3 -2.1" stroke="#82827c" stroke-width="1.4" opacity="0.85"/>
<path d="M755.6 220.6l-6.6 3.1" stroke="#c5c5bf" stroke-width="1.3" opacity="0.85"/>
<path d="M833.5 222.3l-4.1 2.9" stroke="#b8b8b2" stroke-width="1.3" opacity="0.85"/>
<path d="M777.7 334.7l0.6 4.3" stroke="#878781" stroke-width="1.4" opacity="0.85"/>
<path d="M777.2 270.2l-3.3 1.6" stroke="#d3d3cd" stroke-width="1.4" opacity="0.85"/>
<path d="M808.9 298.2l-1.7 3.5" stroke="#5c5c56" stroke-width="1.7" opacity="0.85"/>
<path d="M890.5 317.6l-0.0 3.4" stroke="#989892" stroke-width="1.8" opacity="0.85"/>
<path d="M773.6 284.9l-4.8 3.3" stroke="#d9d9d3" stroke-width="1.8" opacity="0.85"/>
<path d="M887.5 335.2l0.3 5.8" stroke="#969690" stroke-width="1.0" opacity="0.85"/>
<path d="M766.9 190.8l-4.1 -3.7" stroke="#d1d1cb" stroke-width="1.1" opacity="0.85"/>
<path d="M781.5 336.9l0.0 4.4" stroke="#91918b" stroke-width="1.7" opacity="0.85"/>
<path d="M879.5 278.8l1.5 5.0" stroke="#999993" stroke-width="1.5" opacity="0.85"/>
<path d="M856.4 308.4l-0.5 4.4" stroke="#ababa5" stroke-width="1.2" opacity="0.85"/>
<path d="M871.2 244.2l4.5 5.2" stroke="#c5c5bf" stroke-width="1.0" opacity="0.85"/>
<path d="M798.8 325.0l1.4 4.6" stroke="#b3b3ad" stroke-width="1.1" opacity="0.85"/>
<path d="M817.1 173.0l-2.4 -2.9" stroke="#c2c2bc" stroke-width="1.6" opacity="0.85"/>
<path d="M831.1 180.2l-1.5 -7.1" stroke="#595953" stroke-width="1.7" opacity="0.85"/>
<path d="M801.7 304.5l0.9 5.4" stroke="#95958f" stroke-width="1.6" opacity="0.85"/>
<path d="M831.3 321.2l1.9 5.5" stroke="#979791" stroke-width="1.2" opacity="0.85"/>
<path d="M763.8 324.4l1.3 3.9" stroke="#8d8d87" stroke-width="1.9" opacity="0.85"/>
<path d="M850.8 183.4l3.8 -4.9" stroke="#aeaea8" stroke-width="1.7" opacity="0.85"/>
<path d="M808.3 256.7l-3.3 2.0" stroke="#9c9c96" stroke-width="1.5" opacity="0.85"/>
<path d="M867.0 243.7l2.2 3.9" stroke="#aaaaa4" stroke-width="1.1" opacity="0.85"/>
<path d="M878.9 199.7l4.4 -0.9" stroke="#3f3f39" stroke-width="1.7" opacity="0.85"/>
<path d="M794.0 188.6l-2.1 -2.5" stroke="#a6a6a0" stroke-width="1.6" opacity="0.85"/>
<path d="M835.8 307.9l-0.5 7.5" stroke="#c8c8c2" stroke-width="1.0" opacity="0.85"/>
<path d="M811.5 319.1l0.8 5.2" stroke="#9a9a94" stroke-width="1.8" opacity="0.85"/>
<path d="M815.3 167.3l-5.6 -5.6" stroke="#8a8a84" stroke-width="1.2" opacity="0.85"/>
<path d="M807.4 150.2l-1.4 -3.5" stroke="#73736d" stroke-width="1.6" opacity="0.85"/>
<path d="M759.6 151.8l-7.2 -1.4" stroke="#80807a" stroke-width="1.4" opacity="0.85"/>
<path d="M823.2 332.8l-1.1 3.9" stroke="#ccccc6" stroke-width="1.2" opacity="0.85"/>
<path d="M799.9 186.3l-3.1 -3.7" stroke="#b1b1ab" stroke-width="1.1" opacity="0.85"/>
<path d="M780.6 286.3l-6.7 2.8" stroke="#969690" stroke-width="1.4" opacity="0.85"/>
<path d="M769.1 245.5l-5.5 4.1" stroke="#75756f" stroke-width="1.0" opacity="0.85"/>
<path d="M875.5 334.2l-0.5 5.0" stroke="#8a8a84" stroke-width="1.0" opacity="0.85"/>
<path d="M768.9 333.1l-1.3 5.0" stroke="#7b7b75" stroke-width="1.7" opacity="0.85"/>
<path d="M833.6 299.5l0.7 5.4" stroke="#afafa9" stroke-width="1.1" opacity="0.85"/>
<path d="M768.6 245.2l-6.9 1.0" stroke="#94948e" stroke-width="1.0" opacity="0.85"/>
<path d="M794.0 281.8l-2.3 2.7" stroke="#585852" stroke-width="1.5" opacity="0.85"/>
<path d="M822.2 341.2l-0.3 4.4" stroke="#8f8f89" stroke-width="1.6" opacity="0.85"/>
<path d="M762.5 343.9l0.3 6.8" stroke="#93938d" stroke-width="1.1" opacity="0.85"/>
<path d="M800.0 340.1l-1.9 4.4" stroke="#83837d" stroke-width="1.2" opacity="0.85"/>
<path d="M879.2 329.6l1.3 5.2" stroke="#a4a49e" stroke-width="1.8" opacity="0.85"/>
<path d="M867.8 262.0l0.6 3.4" stroke="#7e7e78" stroke-width="1.1" opacity="0.85"/>
<path d="M843.5 245.5l-3.2 6.9" stroke="#c0c0ba" stroke-width="1.4" opacity="0.85"/>
<path d="M790.6 194.9l-5.5 -2.0" stroke="#90908a" stroke-width="1.4" opacity="0.85"/>
<path d="M768.2 247.2l-4.4 0.0" stroke="#9c9c96" stroke-width="1.5" opacity="0.85"/>
<path d="M770.7 282.2l-2.4 6.6" stroke="#40403a" stroke-width="1.1" opacity="0.85"/>
<path d="M839.0 197.4l-3.2 -3.6" stroke="#7e7e78" stroke-width="1.9" opacity="0.85"/>
<path d="M862.4 286.9l2.0 5.5" stroke="#565650" stroke-width="1.5" opacity="0.85"/>
<path d="M814.3 190.8l-4.5 -5.5" stroke="#c4c4be" stroke-width="1.3" opacity="0.85"/>
<path d="M785.9 296.0l0.3 3.9" stroke="#cacac4" stroke-width="1.1" opacity="0.85"/>
<path d="M763.9 300.8l-1.6 4.7" stroke="#b0b0aa" stroke-width="1.5" opacity="0.85"/>
<path d="M809.1 152.7l-3.6 -6.6" stroke="#84847e" stroke-width="1.3" opacity="0.85"/>
<path d="M760.4 304.1l1.6 5.0" stroke="#a8a8a2" stroke-width="1.1" opacity="0.85"/>
<path d="M805.3 294.3l2.6 7.4" stroke="#64645e" stroke-width="1.2" opacity="0.85"/>
<path d="M771.7 318.5l2.5 5.3" stroke="#b1b1ab" stroke-width="1.3" opacity="0.85"/>
<path d="M875.8 261.5l0.7 6.3" stroke="#868680" stroke-width="1.9" opacity="0.85"/>
<path d="M839.4 227.5l-0.0 3.3" stroke="#bbbbb5" stroke-width="1.9" opacity="0.85"/>
<path d="M785.4 225.5l-2.8 1.7" stroke="#9a9a94" stroke-width="1.3" opacity="0.85"/>
<path d="M804.0 248.5l-5.8 3.0" stroke="#7f7f79" stroke-width="1.7" opacity="0.85"/>
<path d="M774.2 275.7l-3.1 0.8" stroke="#85857f" stroke-width="1.6" opacity="0.85"/>
<path d="M871.8 265.4l2.4 7.6" stroke="#9d9d97" stroke-width="1.0" opacity="0.85"/>
<path d="M784.5 226.5l-5.3 1.7" stroke="#c9c9c3" stroke-width="1.6" opacity="0.85"/>
</g>
<path d="M829.5 228.5 Q832 212 848.6 203.6 Q862 204 865.8 209.4 L860 240 L860 333 L845 333 L840 280 L835 260 Z" fill="#020202"/>
<path d="M749 149 Q752 139 757 136.5 Q762 131 767 130.4 Q774 130 778.5 132.2 L785 135 L841 131 Q846 130 852 131.6 Q860 133 864 137 Q869 142 870.5 149 L870.7 155 Q850 163 820 167 L795 168 Q770 166 752 160 Z" fill="#070208"/>
<clipPath id="colclip"><path d="M749 149 Q752 139 757 136.5 Q762 131 767 130.4 Q774 130 778.5 132.2 L785 135 L841 131 Q846 130 852 131.6 Q860 133 864 137 Q869 142 870.5 149 L870.7 155 Q850 163 820 167 L795 168 Q770 166 752 160 Z"/></clipPath>
<g clip-path="url(#colclip)" stroke-linecap="round">
<path d="M753.9 166.6l0.1 5.2" stroke="#1a0321" stroke-width="1.1"/>
<path d="M827.8 150.6l-0.7 5.4" stroke="#0e0212" stroke-width="1.1"/>
<path d="M788.2 167.1l2.2 4.8" stroke="#14031a" stroke-width="1.1"/>
<path d="M841.6 164.3l0.9 6.1" stroke="#08010a" stroke-width="1.1"/>
<path d="M842.4 167.0l-1.7 3.7" stroke="#0c010f" stroke-width="1.1"/>
<path d="M812.8 150.3l-0.6 5.7" stroke="#0d0110" stroke-width="1.1"/>
<path d="M782.4 142.9l-1.3 2.9" stroke="#110216" stroke-width="1.1"/>
<path d="M800.0 152.5l-0.5 6.3" stroke="#120217" stroke-width="1.1"/>
<path d="M752.0 156.0l1.1 5.6" stroke="#08010a" stroke-width="1.1"/>
<path d="M823.0 159.2l2.2 5.2" stroke="#17031d" stroke-width="1.1"/>
<path d="M809.8 151.5l2.0 4.3" stroke="#0e0212" stroke-width="1.1"/>
<path d="M762.4 142.6l-0.8 3.4" stroke="#0d0110" stroke-width="1.1"/>
<path d="M802.2 162.5l1.1 4.9" stroke="#09010b" stroke-width="1.1"/>
<path d="M777.2 146.2l1.0 2.9" stroke="#0f0213" stroke-width="1.1"/>
<path d="M847.4 154.1l1.4 5.2" stroke="#130218" stroke-width="1.1"/>
<path d="M843.7 140.4l-0.1 4.7" stroke="#17031d" stroke-width="1.1"/>
<path d="M807.6 140.9l-1.4 4.4" stroke="#190320" stroke-width="1.1"/>
<path d="M764.5 148.3l0.9 3.4" stroke="#08010a" stroke-width="1.1"/>
<path d="M761.6 150.3l0.0 4.9" stroke="#08010a" stroke-width="1.1"/>
<path d="M770.2 165.3l1.1 3.1" stroke="#120217" stroke-width="1.1"/>
<path d="M806.3 158.0l-1.1 5.2" stroke="#130218" stroke-width="1.1"/>
<path d="M848.6 144.8l2.2 5.0" stroke="#08010a" stroke-width="1.1"/>
<path d="M833.8 150.9l0.9 6.7" stroke="#0f0213" stroke-width="1.1"/>
<path d="M859.6 146.9l-0.6 5.1" stroke="#0b010e" stroke-width="1.1"/>
<path d="M813.5 156.8l-1.8 5.1" stroke="#08010a" stroke-width="1.1"/>
<path d="M855.8 164.4l-0.3 3.2" stroke="#130218" stroke-width="1.1"/>
<path d="M772.3 157.3l-2.0 6.2" stroke="#15031b" stroke-width="1.1"/>
<path d="M831.4 145.2l0.6 5.4" stroke="#0b010e" stroke-width="1.1"/>
<path d="M866.0 140.1l-0.8 4.3" stroke="#14031a" stroke-width="1.1"/>
<path d="M781.7 150.3l0.7 5.6" stroke="#16031c" stroke-width="1.1"/>
<path d="M829.3 167.3l1.7 4.4" stroke="#0c010f" stroke-width="1.1"/>
<path d="M800.5 147.7l-0.7 6.2" stroke="#0d0110" stroke-width="1.1"/>
<path d="M767.2 160.0l0.5 6.3" stroke="#1a0321" stroke-width="1.1"/>
<path d="M808.6 163.5l1.8 3.9" stroke="#110216" stroke-width="1.1"/>
<path d="M870.2 166.2l1.5 5.6" stroke="#0c010f" stroke-width="1.1"/>
<path d="M763.8 147.1l-0.5 3.4" stroke="#15031b" stroke-width="1.1"/>
<path d="M798.1 166.2l0.5 6.6" stroke="#14031a" stroke-width="1.1"/>
<path d="M767.6 156.7l-0.0 4.6" stroke="#190320" stroke-width="1.1"/>
<path d="M823.9 144.5l-2.2 5.7" stroke="#18031f" stroke-width="1.1"/>
<path d="M806.0 158.6l-0.7 5.4" stroke="#09010b" stroke-width="1.1"/>
<path d="M819.5 167.3l-1.9 6.6" stroke="#110216" stroke-width="1.1"/>
<path d="M785.1 149.8l2.2 5.6" stroke="#120217" stroke-width="1.1"/>
<path d="M784.2 166.2l-1.7 4.4" stroke="#09010b" stroke-width="1.1"/>
<path d="M817.6 142.9l-0.4 3.8" stroke="#08010a" stroke-width="1.1"/>
<path d="M772.5 149.3l-0.0 3.3" stroke="#0d0110" stroke-width="1.1"/>
<path d="M761.3 150.8l-1.4 3.2" stroke="#120217" stroke-width="1.1"/>
<path d="M826.5 167.4l-2.6 5.9" stroke="#0d0110" stroke-width="1.1"/>
<path d="M761.3 152.7l0.8 5.2" stroke="#0e0212" stroke-width="1.1"/>
<path d="M870.2 155.4l0.1 3.5" stroke="#0b010e" stroke-width="1.1"/>
<path d="M860.7 158.7l0.8 6.6" stroke="#190320" stroke-width="1.1"/>
<path d="M784.1 161.7l0.6 3.9" stroke="#130218" stroke-width="1.1"/>
<path d="M817.9 166.8l1.9 5.1" stroke="#0b010e" stroke-width="1.1"/>
<path d="M827.4 164.8l2.2 4.7" stroke="#0a010d" stroke-width="1.1"/>
<path d="M813.3 141.9l0.5 3.2" stroke="#1a0321" stroke-width="1.1"/>
<path d="M782.4 151.3l0.1 5.9" stroke="#18031f" stroke-width="1.1"/>
<path d="M839.8 148.1l-1.4 4.8" stroke="#110216" stroke-width="1.1"/>
<path d="M841.1 140.9l-2.6 6.2" stroke="#09010b" stroke-width="1.1"/>
<path d="M870.2 151.4l0.5 5.8" stroke="#0f0213" stroke-width="1.1"/>
<path d="M802.5 151.5l-0.3 3.3" stroke="#120217" stroke-width="1.1"/>
<path d="M866.7 155.4l0.5 3.7" stroke="#0a010d" stroke-width="1.1"/>
<path d="M790.3 167.6l0.4 3.2" stroke="#16031c" stroke-width="1.1"/>
<path d="M812.8 165.5l-0.2 3.2" stroke="#0b010e" stroke-width="1.1"/>
<path d="M869.7 140.6l-0.2 4.2" stroke="#0b010e" stroke-width="1.1"/>
<path d="M764.7 148.9l-1.1 6.3" stroke="#0a010d" stroke-width="1.1"/>
<path d="M803.7 162.2l1.0 3.1" stroke="#120217" stroke-width="1.1"/>
<path d="M800.2 140.5l1.0 4.7" stroke="#16031c" stroke-width="1.1"/>
<path d="M755.3 145.9l0.7 6.4" stroke="#09010b" stroke-width="1.1"/>
<path d="M781.8 158.0l0.9 6.6" stroke="#0a010d" stroke-width="1.1"/>
<path d="M763.0 156.8l2.4 6.5" stroke="#16031c" stroke-width="1.1"/>
<path d="M845.9 142.3l1.2 4.9" stroke="#0a010d" stroke-width="1.1"/>
<path d="M866.1 140.9l-2.4 5.5" stroke="#110216" stroke-width="1.1"/>
<path d="M862.1 162.3l-0.9 6.1" stroke="#16031c" stroke-width="1.1"/>
<path d="M833.7 150.5l-0.4 6.2" stroke="#17031d" stroke-width="1.1"/>
<path d="M822.7 156.8l1.7 6.2" stroke="#09010b" stroke-width="1.1"/>
<path d="M779.9 150.4l1.1 6.9" stroke="#18031f" stroke-width="1.1"/>
<path d="M824.0 147.9l-1.5 5.1" stroke="#08010a" stroke-width="1.1"/>
<path d="M852.8 143.9l0.7 4.4" stroke="#110216" stroke-width="1.1"/>
<path d="M855.7 155.4l1.6 6.8" stroke="#100214" stroke-width="1.1"/>
<path d="M858.2 148.6l1.2 3.9" stroke="#1a0321" stroke-width="1.1"/>
<path d="M801.3 142.9l1.3 3.4" stroke="#09010b" stroke-width="1.1"/>
<path d="M774.9 153.1l-0.4 3.0" stroke="#18031f" stroke-width="1.1"/>
<path d="M835.7 160.2l-2.4 6.5" stroke="#120217" stroke-width="1.1"/>
<path d="M769.8 144.4l-1.6 5.2" stroke="#190320" stroke-width="1.1"/>
<path d="M811.0 160.3l-0.7 6.6" stroke="#0a010d" stroke-width="1.1"/>
<path d="M778.5 145.1l-1.0 4.6" stroke="#0a010d" stroke-width="1.1"/>
<path d="M832.1 163.0l1.6 6.4" stroke="#130218" stroke-width="1.1"/>
<path d="M780.2 154.5l-0.7 4.7" stroke="#0c010f" stroke-width="1.1"/>
<path d="M815.1 161.4l-0.8 5.0" stroke="#0f0213" stroke-width="1.1"/>
<path d="M828.1 144.6l1.4 4.5" stroke="#110216" stroke-width="1.1"/>
<path d="M774.4 158.6l-0.6 4.5" stroke="#18031f" stroke-width="1.1"/>
<path d="M843.7 161.9l-1.4 5.6" stroke="#110216" stroke-width="1.1"/>
<path d="M773.4 161.5l1.2 5.9" stroke="#0b010e" stroke-width="1.1"/>
<path d="M848.8 155.1l-1.5 4.9" stroke="#190320" stroke-width="1.1"/>
<path d="M809.9 162.6l1.4 3.3" stroke="#0a010d" stroke-width="1.1"/>
<path d="M851.1 163.4l0.1 6.2" stroke="#0e0212" stroke-width="1.1"/>
<path d="M758.0 144.5l1.8 5.3" stroke="#130218" stroke-width="1.1"/>
<path d="M771.5 156.7l-0.4 4.7" stroke="#14031a" stroke-width="1.1"/>
<path d="M769.2 162.1l-2.4 6.1" stroke="#190320" stroke-width="1.1"/>
<path d="M756.2 144.5l1.8 6.6" stroke="#120217" stroke-width="1.1"/>
<path d="M796.8 157.2l0.8 6.7" stroke="#190320" stroke-width="1.1"/>
<path d="M761.5 157.3l1.7 4.4" stroke="#15031b" stroke-width="1.1"/>
<path d="M815.7 145.8l1.3 3.0" stroke="#120217" stroke-width="1.1"/>
<path d="M822.1 156.7l0.4 4.9" stroke="#09010b" stroke-width="1.1"/>
<path d="M855.6 165.3l1.7 6.2" stroke="#110216" stroke-width="1.1"/>
<path d="M805.5 142.0l-1.9 4.3" stroke="#1a0321" stroke-width="1.1"/>
<path d="M762.9 152.0l1.3 3.1" stroke="#08010a" stroke-width="1.1"/>
<path d="M797.9 153.4l-1.1 3.9" stroke="#18031f" stroke-width="1.1"/>
<path d="M819.2 146.8l2.0 5.3" stroke="#09010b" stroke-width="1.1"/>
<path d="M861.5 166.0l1.9 5.3" stroke="#15031b" stroke-width="1.1"/>
<path d="M852.6 140.6l2.4 5.4" stroke="#0b010e" stroke-width="1.1"/>
<path d="M842.9 164.0l2.1 4.5" stroke="#130218" stroke-width="1.1"/>
<path d="M824.9 163.1l-0.6 6.2" stroke="#14031a" stroke-width="1.1"/>
<path d="M840.0 167.4l0.2 6.0" stroke="#0e0212" stroke-width="1.1"/>
<path d="M839.2 153.3l1.4 4.9" stroke="#0d0110" stroke-width="1.1"/>
<path d="M816.2 159.9l1.3 3.5" stroke="#110216" stroke-width="1.1"/>
<path d="M825.7 159.6l-0.4 6.4" stroke="#08010a" stroke-width="1.1"/>
<path d="M811.7 146.4l0.1 5.7" stroke="#15031b" stroke-width="1.1"/>
<path d="M792.7 141.2l0.5 5.9" stroke="#0a010d" stroke-width="1.1"/>
<path d="M761.6 160.9l0.8 4.4" stroke="#100214" stroke-width="1.1"/>
<path d="M852.6 160.6l0.8 5.6" stroke="#0e0212" stroke-width="1.1"/>
<path d="M757.9 145.7l-0.4 3.0" stroke="#0d0110" stroke-width="1.1"/>
<path d="M860.7 154.8l0.2 3.4" stroke="#120217" stroke-width="1.1"/>
<path d="M803.6 142.2l0.7 5.8" stroke="#0c010f" stroke-width="1.1"/>
<path d="M772.3 151.1l0.3 4.4" stroke="#15031b" stroke-width="1.1"/>
<path d="M817.3 150.5l1.6 4.1" stroke="#1a0321" stroke-width="1.1"/>
<path d="M755.4 168.0l2.6 6.2" stroke="#08010a" stroke-width="1.1"/>
<path d="M851.0 144.1l-1.2 6.5" stroke="#0a010d" stroke-width="1.1"/>
<path d="M836.8 152.4l1.2 4.4" stroke="#18031f" stroke-width="1.1"/>
<path d="M780.6 158.0l-1.1 2.9" stroke="#15031b" stroke-width="1.1"/>
<path d="M826.8 141.7l-2.2 5.9" stroke="#0e0212" stroke-width="1.1"/>
<path d="M867.5 155.1l0.9 4.8" stroke="#16031c" stroke-width="1.1"/>
<path d="M806.7 152.6l-0.4 4.1" stroke="#09010b" stroke-width="1.1"/>
<path d="M826.2 160.9l-0.3 4.2" stroke="#0d0110" stroke-width="1.1"/>
<path d="M817.4 142.0l-0.5 4.3" stroke="#1a0321" stroke-width="1.1"/>
<path d="M799.4 147.4l1.2 3.0" stroke="#08010a" stroke-width="1.1"/>
<path d="M752.3 145.3l-1.7 3.8" stroke="#17031d" stroke-width="1.1"/>
<path d="M855.8 152.8l1.0 3.4" stroke="#0b010e" stroke-width="1.1"/>
<path d="M799.7 151.1l1.0 5.5" stroke="#120217" stroke-width="1.1"/>
<path d="M805.4 152.7l0.9 5.4" stroke="#09010b" stroke-width="1.1"/>
<path d="M752.3 164.4l1.7 5.2" stroke="#100214" stroke-width="1.1"/>
<path d="M779.9 165.9l1.7 4.4" stroke="#120217" stroke-width="1.1"/>
<path d="M780.6 152.3l2.1 4.9" stroke="#0f0213" stroke-width="1.1"/>
<path d="M793.1 142.9l0.8 4.3" stroke="#0a010d" stroke-width="1.1"/>
<path d="M799.5 159.0l-0.2 3.8" stroke="#16031c" stroke-width="1.1"/>
<path d="M751.3 141.3l-2.1 5.2" stroke="#0c010f" stroke-width="1.1"/>
<path d="M794.4 152.8l-1.6 5.0" stroke="#0b010e" stroke-width="1.1"/>
<path d="M750.4 160.4l1.7 6.4" stroke="#1a0321" stroke-width="1.1"/>
<path d="M822.7 149.5l-0.8 5.5" stroke="#110216" stroke-width="1.1"/>
<path d="M847.2 145.3l0.7 3.8" stroke="#08010a" stroke-width="1.1"/>
<path d="M861.2 151.7l-1.3 5.4" stroke="#0a010d" stroke-width="1.1"/>
<path d="M816.7 141.9l-0.2 6.2" stroke="#0f0213" stroke-width="1.1"/>
<path d="M821.1 148.5l-1.0 6.9" stroke="#0d0110" stroke-width="1.1"/>
<path d="M787.0 141.1l1.0 4.2" stroke="#0b010e" stroke-width="1.1"/>
<path d="M755.5 145.5l-0.1 5.6" stroke="#08010a" stroke-width="1.1"/>
<path d="M784.7 158.6l-0.1 4.5" stroke="#09010b" stroke-width="1.1"/>
<path d="M801.5 144.6l1.5 5.1" stroke="#1a0321" stroke-width="1.1"/>
<path d="M780.3 140.4l0.2 4.8" stroke="#0f0213" stroke-width="1.1"/>
<path d="M847.5 148.2l1.7 6.5" stroke="#18031f" stroke-width="1.1"/>
<path d="M824.6 166.9l0.2 3.2" stroke="#130218" stroke-width="1.1"/>
<path d="M777.5 162.1l-1.2 2.9" stroke="#0b010e" stroke-width="1.1"/>
<path d="M777.5 162.6l-2.0 4.5" stroke="#130218" stroke-width="1.1"/>
<path d="M852.9 152.4l0.0 3.3" stroke="#18031f" stroke-width="1.1"/>
<path d="M839.3 142.0l0.1 3.7" stroke="#09010b" stroke-width="1.1"/>
<path d="M783.9 153.0l-0.5 5.3" stroke="#16031c" stroke-width="1.1"/>
<path d="M784.8 156.0l-1.9 5.9" stroke="#0c010f" stroke-width="1.1"/>
<path d="M762.5 156.0l0.2 4.3" stroke="#190320" stroke-width="1.1"/>
<path d="M765.2 167.8l0.1 6.0" stroke="#110216" stroke-width="1.1"/>
<path d="M802.6 153.6l1.4 3.2" stroke="#0f0213" stroke-width="1.1"/>
<path d="M797.0 159.0l1.6 5.7" stroke="#190320" stroke-width="1.1"/>
<path d="M752.0 147.7l-1.1 6.6" stroke="#16031c" stroke-width="1.1"/>
<path d="M846.7 155.1l1.9 6.0" stroke="#0f0213" stroke-width="1.1"/>
<path d="M857.6 167.6l0.5 4.4" stroke="#14031a" stroke-width="1.1"/>
<path d="M803.6 162.4l-2.0 5.9" stroke="#08010a" stroke-width="1.1"/>
<path d="M803.6 164.9l2.7 6.3" stroke="#0e0212" stroke-width="1.1"/>
<path d="M754.9 167.0l1.5 5.6" stroke="#16031c" stroke-width="1.1"/>
<path d="M811.0 151.7l-1.6 3.9" stroke="#0e0212" stroke-width="1.1"/>
<path d="M768.3 162.0l-1.2 4.0" stroke="#18031f" stroke-width="1.1"/>
<path d="M788.1 151.0l-2.2 6.1" stroke="#1a0321" stroke-width="1.1"/>
<path d="M858.8 150.0l1.5 3.3" stroke="#18031f" stroke-width="1.1"/>
<path d="M838.3 157.7l-0.6 4.3" stroke="#08010a" stroke-width="1.1"/>
<path d="M867.5 146.8l-0.3 3.6" stroke="#190320" stroke-width="1.1"/>
<path d="M865.8 140.2l-2.5 6.1" stroke="#16031c" stroke-width="1.1"/>
<path d="M851.8 143.9l0.4 4.4" stroke="#130218" stroke-width="1.1"/>
<path d="M844.0 160.7l-0.3 3.1" stroke="#17031d" stroke-width="1.1"/>
<path d="M825.5 162.9l0.5 4.7" stroke="#17031d" stroke-width="1.1"/>
<path d="M852.0 165.5l-0.9 4.8" stroke="#08010a" stroke-width="1.1"/>
<path d="M771.2 155.5l0.7 5.0" stroke="#16031c" stroke-width="1.1"/>
<path d="M792.5 143.3l0.1 3.7" stroke="#190320" stroke-width="1.1"/>
<path d="M759.9 153.8l-0.0 6.7" stroke="#16031c" stroke-width="1.1"/>
<path d="M824.1 149.1l2.3 5.2" stroke="#0f0213" stroke-width="1.1"/>
<path d="M814.5 164.4l-0.4 3.2" stroke="#17031d" stroke-width="1.1"/>
<path d="M836.2 150.1l0.0 5.0" stroke="#17031d" stroke-width="1.1"/>
<path d="M838.7 163.0l-1.3 5.6" stroke="#100214" stroke-width="1.1"/>
<path d="M858.5 162.4l-0.9 6.4" stroke="#09010b" stroke-width="1.1"/>
<path d="M831.3 161.8l0.9 4.4" stroke="#0b010e" stroke-width="1.1"/>
<path d="M808.4 158.3l1.6 5.9" stroke="#0b010e" stroke-width="1.1"/>
<path d="M825.1 166.5l-0.9 6.7" stroke="#14031a" stroke-width="1.1"/>
<path d="M835.9 156.8l1.2 3.0" stroke="#08010a" stroke-width="1.1"/>
<path d="M835.6 156.7l0.2 3.2" stroke="#130218" stroke-width="1.1"/>
<path d="M869.7 147.8l1.4 6.8" stroke="#110216" stroke-width="1.1"/>
<path d="M797.5 167.5l1.0 4.8" stroke="#0a010d" stroke-width="1.1"/>
<path d="M752.5 144.4l-0.5 3.0" stroke="#0c010f" stroke-width="1.1"/>
<path d="M783.0 141.0l-1.5 3.8" stroke="#14031a" stroke-width="1.1"/>
<path d="M795.7 155.2l0.3 6.9" stroke="#0b010e" stroke-width="1.1"/>
<path d="M793.4 160.4l2.3 6.1" stroke="#1a0321" stroke-width="1.1"/>
<path d="M840.3 167.0l-1.2 6.5" stroke="#09010b" stroke-width="1.1"/>
<path d="M788.3 142.6l1.9 6.0" stroke="#14031a" stroke-width="1.1"/>
<path d="M805.7 167.7l0.9 3.4" stroke="#1a0321" stroke-width="1.1"/>
<path d="M778.1 161.9l-0.9 3.0" stroke="#17031d" stroke-width="1.1"/>
<path d="M764.1 155.2l1.6 4.6" stroke="#16031c" stroke-width="1.1"/>
<path d="M815.5 150.5l-0.2 6.4" stroke="#0d0110" stroke-width="1.1"/>
<path d="M786.2 152.8l-1.7 5.1" stroke="#0a010d" stroke-width="1.1"/>
<path d="M779.7 162.4l-0.7 3.7" stroke="#0b010e" stroke-width="1.1"/>
<path d="M816.6 158.6l1.8 3.9" stroke="#130218" stroke-width="1.1"/>
<path d="M793.9 167.1l1.8 6.3" stroke="#0b010e" stroke-width="1.1"/>
<path d="M830.4 162.7l-1.6 5.0" stroke="#1a0321" stroke-width="1.1"/>
<path d="M813.0 166.6l-0.2 6.6" stroke="#17031d" stroke-width="1.1"/>
<path d="M769.1 157.8l2.5 5.7" stroke="#120217" stroke-width="1.1"/>
<path d="M862.2 167.4l1.9 4.1" stroke="#14031a" stroke-width="1.1"/>
<path d="M830.8 153.6l0.9 4.6" stroke="#100214" stroke-width="1.1"/>
<path d="M817.5 153.3l-0.3 3.5" stroke="#0e0212" stroke-width="1.1"/>
<path d="M810.8 146.9l-0.4 7.0" stroke="#15031b" stroke-width="1.1"/>
<path d="M794.7 157.9l-0.3 3.9" stroke="#17031d" stroke-width="1.1"/>
<path d="M758.4 141.3l-1.9 4.4" stroke="#15031b" stroke-width="1.1"/>
<path d="M865.9 150.2l2.5 6.3" stroke="#14031a" stroke-width="1.1"/>
<path d="M860.0 154.2l-2.7 5.9" stroke="#0d0110" stroke-width="1.1"/>
<path d="M860.0 157.8l1.1 3.0" stroke="#1a0321" stroke-width="1.1"/>
<path d="M779.1 160.0l-0.5 6.7" stroke="#09010b" stroke-width="1.1"/>
<path d="M834.6 142.5l1.6 3.9" stroke="#0e0212" stroke-width="1.1"/>
<path d="M809.7 152.6l-0.4 5.4" stroke="#120217" stroke-width="1.1"/>
<path d="M845.3 151.5l-0.6 4.0" stroke="#190320" stroke-width="1.1"/>
<path d="M869.8 164.6l-1.0 5.3" stroke="#110216" stroke-width="1.1"/>
<path d="M831.7 164.9l-0.6 4.1" stroke="#100214" stroke-width="1.1"/>
<path d="M809.1 141.1l-2.3 5.7" stroke="#15031b" stroke-width="1.1"/>
<path d="M815.1 165.4l1.4 3.6" stroke="#16031c" stroke-width="1.1"/>
<path d="M763.8 142.1l-0.6 6.9" stroke="#09010b" stroke-width="1.1"/>
<path d="M809.7 163.5l-1.7 3.8" stroke="#190320" stroke-width="1.1"/>
<path d="M777.2 156.3l0.3 6.3" stroke="#09010b" stroke-width="1.1"/>
<path d="M828.0 145.3l0.3 5.9" stroke="#0c010f" stroke-width="1.1"/>
<path d="M807.2 140.1l-2.3 5.0" stroke="#0a010d" stroke-width="1.1"/>
<path d="M772.7 154.7l1.3 4.6" stroke="#100214" stroke-width="1.1"/>
<path d="M774.2 143.8l-0.2 4.9" stroke="#0a010d" stroke-width="1.1"/>
<path d="M756.3 147.2l-1.1 4.1" stroke="#18031f" stroke-width="1.1"/>
<path d="M757.2 150.5l-1.6 4.4" stroke="#110216" stroke-width="1.1"/>
<path d="M787.1 153.3l0.3 5.8" stroke="#09010b" stroke-width="1.1"/>
<path d="M809.0 152.5l0.2 4.8" stroke="#130218" stroke-width="1.1"/>
<path d="M829.1 147.3l-1.3 3.2" stroke="#15031b" stroke-width="1.1"/>
<path d="M800.3 157.1l-0.9 5.3" stroke="#0a010d" stroke-width="1.1"/>
<path d="M802.3 167.2l0.5 5.1" stroke="#0e0212" stroke-width="1.1"/>
<path d="M785.5 145.6l0.4 4.5" stroke="#09010b" stroke-width="1.1"/>
<path d="M845.7 156.9l-1.6 4.7" stroke="#0e0212" stroke-width="1.1"/>
<path d="M864.8 161.9l-0.6 4.1" stroke="#18031f" stroke-width="1.1"/>
<path d="M757.0 161.2l-1.5 5.1" stroke="#130218" stroke-width="1.1"/>
<path d="M758.4 164.8l-0.4 3.2" stroke="#130218" stroke-width="1.1"/>
<path d="M867.5 148.5l1.2 6.4" stroke="#16031c" stroke-width="1.1"/>
<path d="M859.9 146.7l-1.6 6.7" stroke="#190320" stroke-width="1.1"/>
<path d="M774.5 146.9l-2.0 5.0" stroke="#16031c" stroke-width="1.1"/>
<path d="M781.1 153.5l-1.2 5.7" stroke="#15031b" stroke-width="1.1"/>
<path d="M859.6 147.7l2.3 5.5" stroke="#0a010d" stroke-width="1.1"/>
<path d="M764.7 162.5l1.2 3.5" stroke="#130218" stroke-width="1.1"/>
</g>
<g stroke="#070208" stroke-linecap="round" stroke-width="0.9">
<path d="M753.8 141.9l1.7 -2.7"/>
<path d="M752.2 144.6l0.1 -1.4"/>
<path d="M754.5 140.7l1.7 -2.0"/>
<path d="M749.4 149.3l-1.4 -1.4"/>
<path d="M751.2 146.4l-1.1 -1.4"/>
<path d="M752.5 144.2l-0.6 -1.8"/>
<path d="M750.3 147.8l-0.3 -1.1"/>
<path d="M755.8 138.7l0.5 -1.4"/>
<path d="M757.8 136.9l-1.2 -3.0"/>
<path d="M765.6 132.1l0.3 -2.9"/>
<path d="M763.9 133.1l-1.8 -2.3"/>
<path d="M756.5 137.7l-1.3 -1.8"/>
<path d="M760.7 135.1l-0.1 -2.3"/>
<path d="M765.3 132.3l-2.1 -2.7"/>
<path d="M761.7 134.5l1.2 -2.0"/>
<path d="M763.4 133.5l-1.9 -1.4"/>
<path d="M778.4 133.2l1.4 -2.6"/>
<path d="M772.6 132.3l2.0 -1.1"/>
<path d="M769.5 131.8l0.0 -2.4"/>
<path d="M773.7 132.5l0.7 -2.4"/>
<path d="M767.0 131.4l-0.4 -1.2"/>
<path d="M778.3 133.2l0.8 -1.9"/>
<path d="M770.9 132.0l0.9 -2.6"/>
<path d="M774.8 132.6l-2.3 -1.6"/>
<path d="M779.2 133.5l-0.5 -2.7"/>
<path d="M783.6 135.7l-1.7 -2.8"/>
<path d="M779.1 133.5l1.7 -1.9"/>
<path d="M782.4 135.1l1.2 -2.7"/>
<path d="M780.1 134.0l-0.1 -2.2"/>
<path d="M783.3 135.5l0.4 -1.9"/>
<path d="M780.1 134.0l2.2 -2.6"/>
<path d="M780.9 134.4l-0.6 -2.1"/>
<path d="M846.3 132.0l-1.5 -2.9"/>
<path d="M851.9 132.6l-1.2 -2.3"/>
<path d="M848.2 132.2l1.0 -1.9"/>
<path d="M850.5 132.4l-1.1 -2.2"/>
<path d="M845.6 131.9l-0.1 -2.6"/>
<path d="M842.8 131.6l1.6 -2.1"/>
<path d="M847.1 132.1l-1.3 -2.8"/>
<path d="M845.7 131.9l-1.7 -1.8"/>
<path d="M856.4 134.6l1.9 -2.8"/>
<path d="M854.4 133.7l1.1 -2.1"/>
<path d="M856.4 134.5l0.6 -1.2"/>
<path d="M853.0 133.0l-1.7 -1.6"/>
<path d="M852.1 132.7l-2.1 -1.7"/>
<path d="M857.6 135.1l-0.3 -2.9"/>
<path d="M858.1 135.3l1.8 -1.2"/>
<path d="M858.5 135.5l-1.9 -1.1"/>
<path d="M868.5 147.5l1.6 -1.5"/>
<path d="M865.6 141.6l1.6 -2.0"/>
<path d="M866.9 144.3l2.2 -1.9"/>
<path d="M865.1 140.7l-2.2 -2.6"/>
<path d="M866.7 143.8l0.8 -2.6"/>
<path d="M864.9 140.2l-0.8 -1.0"/>
<path d="M869.3 149.1l-1.1 -2.0"/>
<path d="M867.7 145.9l-0.3 -1.8"/>
</g>
<path d="M784 135 Q785 121 812.3 121.5 Q839 121 841.5 135 Z" fill="#000"/>
<g stroke="#38383c" stroke-width="1.3" fill="none" opacity="0.9"><path d="M786 143 Q792 150 797 155 Q801 150 806 143"/><path d="M814 156 Q818 148 826 143"/><path d="M776 148 L776 155 M834 148 L834 155"/></g>
<g transform="translate(636.0 349.0) rotate(0.0)">
<ellipse cx="0" cy="0" rx="35.5" ry="38.5" fill="#0e0312"/>
<g stroke="#0e0312" stroke-width="1.2" stroke-linecap="round">
<path d="M33.2 8.1l2.7 0.6"/>
<path d="M27.0 -22.5l1.6 -1.2"/>
<path d="M30.7 15.8l2.1 1.0"/>
<path d="M-14.6 33.4l-0.9 1.9"/>
<path d="M-32.7 -10.2l-2.1 -0.6"/>
<path d="M16.6 -32.3l1.6 -2.9"/>
<path d="M-22.2 -28.0l-1.6 -1.9"/>
<path d="M11.4 -34.9l0.8 -2.1"/>
<path d="M-11.9 34.7l-0.8 2.1"/>
<path d="M24.5 25.6l1.8 1.7"/>
<path d="M14.1 33.7l1.4 3.1"/>
<path d="M2.4 -36.9l0.1 -1.8"/>
<path d="M29.9 17.7l2.9 1.6"/>
<path d="M0.3 -37.0l0.0 -2.7"/>
<path d="M34.0 -1.9l1.6 -0.1"/>
<path d="M31.9 12.9l1.7 0.6"/>
<path d="M-17.9 -31.5l-1.5 -2.4"/>
<path d="M32.3 -11.4l1.8 -0.6"/>
<path d="M28.1 -20.8l1.7 -1.1"/>
<path d="M2.5 36.9l0.2 2.1"/>
<path d="M-17.0 32.0l-0.8 1.3"/>
<path d="M33.9 3.4l1.6 0.1"/>
<path d="M-29.6 18.2l-2.7 1.5"/>
<path d="M2.4 -36.9l0.2 -2.8"/>
<path d="M19.1 30.6l1.1 1.6"/>
<path d="M6.0 36.4l0.6 3.2"/>
<path d="M-15.0 33.2l-0.8 1.6"/>
<path d="M1.8 36.9l0.1 2.6"/>
<path d="M30.2 16.9l1.5 0.8"/>
<path d="M-32.5 -11.0l-3.2 -1.0"/>
<path d="M25.4 -24.6l1.9 -1.7"/>
<path d="M33.6 -5.4l3.3 -0.5"/>
<path d="M-31.2 -14.7l-2.5 -1.1"/>
<path d="M21.0 29.1l1.6 2.1"/>
<path d="M24.9 25.2l1.3 1.2"/>
<path d="M33.8 -3.5l3.4 -0.3"/>
<path d="M-14.7 -33.4l-0.9 -1.8"/>
<path d="M21.4 28.7l1.6 2.0"/>
<path d="M33.9 -2.1l1.8 -0.1"/>
<path d="M34.0 1.1l3.4 0.1"/>
<path d="M-0.9 -37.0l-0.0 -1.8"/>
<path d="M-32.7 10.3l-1.9 0.6"/>
<path d="M34.0 -1.0l1.6 -0.0"/>
<path d="M-17.8 -31.5l-0.8 -1.3"/>
<path d="M32.7 10.0l1.8 0.5"/>
<path d="M-8.6 35.8l-0.4 1.7"/>
<path d="M-30.3 -16.7l-1.5 -0.8"/>
<path d="M-29.6 18.3l-2.5 1.4"/>
<path d="M-29.5 -18.4l-1.8 -1.0"/>
<path d="M-5.6 -36.5l-0.4 -2.6"/>
<path d="M5.5 36.5l0.5 3.1"/>
<path d="M-21.0 -29.1l-1.5 -1.9"/>
<path d="M-33.8 -4.4l-2.0 -0.2"/>
<path d="M33.1 -8.5l1.5 -0.4"/>
<path d="M28.6 -20.0l2.1 -1.4"/>
<path d="M-18.9 30.8l-1.9 2.9"/>
<path d="M29.8 17.9l2.7 1.5"/>
<path d="M-7.5 36.1l-0.4 2.0"/>
<path d="M-27.7 -21.4l-2.0 -1.4"/>
<path d="M25.1 24.9l1.5 1.3"/>
<path d="M-30.7 15.9l-2.8 1.3"/>
<path d="M-4.1 36.7l-0.2 2.0"/>
<path d="M-30.5 16.4l-2.1 1.1"/>
<path d="M-28.9 -19.5l-1.7 -1.1"/>
<path d="M32.9 9.3l3.4 0.9"/>
<path d="M33.6 5.4l1.6 0.2"/>
<path d="M21.3 28.8l1.2 1.5"/>
<path d="M25.1 -25.0l1.1 -1.0"/>
<path d="M-11.3 34.9l-0.8 2.2"/>
<path d="M18.8 30.8l1.7 2.6"/>
<path d="M-8.0 36.0l-0.5 2.0"/>
<path d="M34.0 1.3l3.0 0.1"/>
<path d="M-33.7 4.7l-2.7 0.3"/>
<path d="M-17.1 32.0l-1.1 1.8"/>
<path d="M-0.0 37.0l-0.0 2.2"/>
<path d="M-26.1 -23.7l-1.3 -1.1"/>
<path d="M33.4 -6.9l2.6 -0.5"/>
<path d="M-23.8 26.4l-1.4 1.4"/>
<path d="M11.6 -34.8l1.0 -2.9"/>
<path d="M33.8 -3.8l2.4 -0.2"/>
<path d="M10.4 35.2l1.0 3.2"/>
<path d="M-9.7 35.5l-1.0 3.3"/>
<path d="M-17.9 -31.5l-0.9 -1.4"/>
<path d="M-31.2 14.7l-2.7 1.2"/>
<path d="M30.4 16.6l2.6 1.3"/>
<path d="M24.8 25.3l1.1 1.0"/>
<path d="M31.4 14.3l2.6 1.1"/>
<path d="M-6.5 36.3l-0.6 3.0"/>
<path d="M-27.2 -22.2l-1.6 -1.2"/>
<path d="M31.7 -13.5l2.8 -1.1"/>
<path d="M32.9 9.4l3.1 0.8"/>
<path d="M27.6 -21.6l1.5 -1.1"/>
<path d="M-33.8 4.1l-3.0 0.3"/>
<path d="M9.9 -35.4l0.7 -2.4"/>
<path d="M-13.5 -33.9l-1.0 -2.2"/>
<path d="M-4.8 36.6l-0.2 1.7"/>
<path d="M29.6 -18.2l2.1 -1.2"/>
<path d="M-31.0 -15.3l-2.8 -1.3"/>
<path d="M-11.6 -34.8l-0.7 -2.1"/>
<path d="M13.4 34.0l1.3 2.9"/>
<path d="M-33.4 -6.9l-2.2 -0.4"/>
<path d="M-22.4 -27.9l-2.2 -2.5"/>
<path d="M3.6 36.8l0.2 2.2"/>
<path d="M-33.7 -5.2l-3.1 -0.4"/>
<path d="M-25.8 24.1l-2.6 2.2"/>
<path d="M18.7 -30.9l1.5 -2.3"/>
<path d="M21.2 -28.9l1.6 -2.0"/>
<path d="M26.7 22.9l2.0 1.6"/>
<path d="M-0.7 -37.0l-0.1 -2.4"/>
<path d="M32.5 -10.9l1.9 -0.6"/>
<path d="M21.7 -28.5l1.8 -2.1"/>
<path d="M-6.1 -36.4l-0.6 -3.2"/>
<path d="M33.8 4.3l2.3 0.3"/>
<path d="M-15.9 -32.7l-1.3 -2.5"/>
<path d="M-25.0 25.1l-1.8 1.7"/>
<path d="M-33.9 -3.1l-1.9 -0.2"/>
<path d="M19.2 30.6l1.2 1.8"/>
<path d="M28.4 -20.4l2.1 -1.4"/>
<path d="M-32.6 10.3l-3.2 0.9"/>
<path d="M-16.6 -32.3l-1.3 -2.4"/>
<path d="M18.1 31.3l1.8 2.8"/>
<path d="M33.3 7.6l2.2 0.5"/>
<path d="M-29.7 18.0l-2.7 1.5"/>
<path d="M33.7 -4.7l1.8 -0.2"/>
<path d="M-10.6 -35.1l-0.9 -2.7"/>
<path d="M-18.0 31.4l-0.9 1.4"/>
<path d="M4.8 36.6l0.3 2.1"/>
<path d="M-34.0 1.7l-1.7 0.1"/>
<path d="M-31.3 -14.6l-2.0 -0.8"/>
<path d="M-6.5 -36.3l-0.5 -2.6"/>
<path d="M-30.3 16.9l-1.7 0.8"/>
<path d="M-24.4 25.8l-1.7 1.6"/>
<path d="M-0.6 -37.0l-0.0 -1.6"/>
<path d="M-15.0 33.2l-0.9 1.8"/>
<path d="M30.7 15.9l2.9 1.4"/>
<path d="M-27.8 -21.3l-2.2 -1.5"/>
<path d="M-29.1 -19.2l-2.6 -1.6"/>
<path d="M23.5 -26.8l2.0 -2.1"/>
<path d="M7.2 -36.2l0.4 -1.9"/>
<path d="M-10.9 35.1l-0.9 2.5"/>
<path d="M2.7 -36.9l0.2 -2.4"/>
<path d="M33.3 -7.5l1.9 -0.4"/>
<path d="M31.1 14.9l3.1 1.4"/>
<path d="M29.0 19.3l1.6 1.0"/>
<path d="M-27.1 -22.4l-2.1 -1.6"/>
<path d="M-11.1 -35.0l-0.8 -2.2"/>
<path d="M-9.6 -35.5l-1.0 -3.2"/>
<path d="M-1.6 37.0l-0.1 1.8"/>
<path d="M10.2 -35.3l0.6 -1.9"/>
<path d="M-24.9 -25.2l-2.5 -2.3"/>
<path d="M2.2 -36.9l0.2 -2.9"/>
<path d="M9.1 35.6l0.4 1.5"/>
<path d="M28.4 20.3l2.1 1.4"/>
<path d="M-13.9 33.8l-0.8 1.8"/>
<path d="M-33.8 4.0l-2.5 0.3"/>
<path d="M-27.2 -22.2l-2.0 -1.5"/>
<path d="M-32.1 12.2l-1.9 0.7"/>
<path d="M-0.5 37.0l-0.0 1.8"/>
<path d="M5.1 -36.6l0.5 -3.4"/>
<path d="M-18.1 -31.3l-1.2 -2.0"/>
<path d="M-11.9 -34.7l-0.8 -2.1"/>
<path d="M9.0 -35.7l0.7 -2.5"/>
<path d="M-17.5 -31.7l-1.6 -2.7"/>
<path d="M33.6 5.5l2.3 0.3"/>
<path d="M31.4 -14.3l1.5 -0.6"/>
<path d="M-18.3 31.2l-1.7 2.6"/>
<path d="M16.7 -32.2l1.0 -1.8"/>
<path d="M4.1 -36.7l0.4 -3.2"/>
<path d="M-33.8 3.8l-1.7 0.2"/>
<path d="M5.4 36.5l0.5 3.1"/>
<path d="M33.9 2.4l3.3 0.2"/>
<path d="M-4.8 36.6l-0.5 3.2"/>
<path d="M-22.7 27.5l-1.7 1.9"/>
<path d="M-11.4 34.9l-0.9 2.5"/>
<path d="M-17.7 -31.6l-1.5 -2.5"/>
<path d="M-12.6 -34.4l-0.9 -2.3"/>
<path d="M32.1 12.1l3.0 1.0"/>
<path d="M30.1 -17.2l1.7 -0.9"/>
<path d="M13.7 -33.9l0.9 -2.0"/>
<path d="M-20.2 29.8l-2.0 2.7"/>
<path d="M-12.1 34.6l-0.9 2.3"/>
<path d="M22.9 27.3l1.2 1.3"/>
<path d="M8.9 35.7l0.6 2.2"/>
<path d="M33.4 7.1l1.7 0.3"/>
<path d="M30.2 -17.0l1.9 -1.0"/>
<path d="M-12.5 -34.4l-0.9 -2.2"/>
<path d="M23.3 26.9l1.7 1.8"/>
<path d="M27.9 21.1l2.7 1.9"/>
<path d="M6.3 36.4l0.3 1.6"/>
<path d="M-5.8 -36.5l-0.5 -3.0"/>
<path d="M-8.0 -36.0l-0.4 -1.6"/>
<path d="M-33.7 -5.1l-3.4 -0.5"/>
<path d="M-4.6 36.7l-0.4 2.7"/>
<path d="M14.7 33.4l0.8 1.7"/>
<path d="M5.1 -36.6l0.3 -1.9"/>
<path d="M25.0 -25.1l1.2 -1.1"/>
<path d="M-32.3 -11.6l-1.9 -0.6"/>
<path d="M-4.7 -36.6l-0.4 -2.9"/>
<path d="M-23.2 -27.1l-1.1 -1.2"/>
<path d="M31.1 14.9l2.3 1.0"/>
<path d="M12.2 34.6l0.6 1.6"/>
<path d="M26.1 23.8l1.2 1.0"/>
<path d="M29.7 -17.9l1.8 -1.0"/>
<path d="M-13.6 -33.9l-0.8 -1.8"/>
<path d="M-33.1 -8.2l-1.5 -0.4"/>
<path d="M5.0 36.6l0.3 1.8"/>
<path d="M-25.9 24.0l-1.7 1.5"/>
<path d="M-34.0 -1.5l-3.4 -0.1"/>
<path d="M32.1 12.3l2.7 0.9"/>
<path d="M15.8 -32.8l0.9 -1.7"/>
<path d="M33.9 -2.2l2.1 -0.1"/>
<path d="M-32.5 -11.0l-2.0 -0.6"/>
<path d="M33.5 6.0l3.0 0.5"/>
<path d="M14.0 33.7l1.3 2.8"/>
<path d="M33.7 -4.9l1.6 -0.2"/>
<path d="M16.4 -32.4l0.8 -1.4"/>
<path d="M-30.7 -15.8l-2.2 -1.1"/>
<path d="M8.0 -36.0l0.5 -2.1"/>
<path d="M17.2 -31.9l1.6 -2.7"/>
<path d="M34.0 -1.7l3.1 -0.1"/>
</g><g stroke-linecap="round" stroke-width="1.3">
<path d="M-8.5 -23.5l-1.2 1.1" stroke="#16021f"/>
<path d="M17.2 19.2l1.7 0.5" stroke="#100117"/>
<path d="M7.5 -19.7l-0.6 0.8" stroke="#300445"/>
<path d="M23.4 9.5l1.2 -1.3" stroke="#14021d"/>
<path d="M17.3 -18.5l-0.1 1.4" stroke="#15021e"/>
<path d="M28.8 4.0l-0.7 -1.9" stroke="#13011b"/>
<path d="M-1.2 3.4l-1.5 0.5" stroke="#190224"/>
<path d="M14.4 -1.8l-1.6 1.9" stroke="#230332"/>
<path d="M4.1 29.2l1.0 1.1" stroke="#100117"/>
<path d="M21.1 17.9l0.2 -1.4" stroke="#1a0225"/>
<path d="M7.3 -9.1l-0.5 0.4" stroke="#3f065b"/>
<path d="M-6.6 -0.6l0.7 1.7" stroke="#180222"/>
<path d="M21.3 3.0l1.8 -1.7" stroke="#1a0225"/>
<path d="M22.2 -15.9l1.8 -1.6" stroke="#1d022a"/>
<path d="M-3.4 10.4l1.8 -0.7" stroke="#250335"/>
<path d="M-20.7 23.3l-2.0 1.9" stroke="#100117"/>
<path d="M18.8 2.4l-0.0 -0.5" stroke="#2d0441"/>
<path d="M9.0 33.5l-1.6 -1.8" stroke="#100117"/>
<path d="M3.1 8.7l1.0 -0.2" stroke="#34054b"/>
<path d="M-1.4 7.0l1.5 1.2" stroke="#250335"/>
<path d="M-9.6 8.7l-0.3 -1.7" stroke="#14021d"/>
<path d="M10.8 22.8l-0.4 -1.0" stroke="#110118"/>
<path d="M15.8 -9.7l1.1 -0.1" stroke="#2c043f"/>
<path d="M14.6 12.7l0.8 0.4" stroke="#2c043f"/>
<path d="M-4.5 15.7l0.8 -1.4" stroke="#1a0225"/>
<path d="M12.2 9.3l0.8 0.8" stroke="#1a0225"/>
<path d="M-24.4 -9.7l1.2 -0.4" stroke="#100117"/>
<path d="M21.6 23.9l-1.2 0.3" stroke="#100117"/>
<path d="M-30.3 -7.3l-0.1 -1.7" stroke="#100117"/>
<path d="M13.0 -3.5l0.0 -1.1" stroke="#12011a"/>
<path d="M7.5 31.1l-0.5 -0.5" stroke="#100117"/>
<path d="M-19.1 24.2l1.5 0.4" stroke="#100117"/>
<path d="M27.7 -7.0l-1.6 -2.0" stroke="#180222"/>
<path d="M-23.8 22.9l-1.6 0.4" stroke="#100117"/>
<path d="M0.9 17.1l-1.5 0.5" stroke="#1d022a"/>
<path d="M7.2 -2.4l-0.8 1.4" stroke="#1e032b"/>
<path d="M-23.4 -6.2l1.8 -1.0" stroke="#100117"/>
<path d="M8.7 -28.1l-0.4 1.1" stroke="#240334"/>
<path d="M13.4 -1.6l-1.4 0.4" stroke="#180222"/>
<path d="M20.0 -10.5l-1.9 1.8" stroke="#16021f"/>
<path d="M-8.9 23.9l0.4 -1.8" stroke="#100117"/>
<path d="M19.5 -20.7l-0.8 0.4" stroke="#170221"/>
<path d="M-23.0 21.5l-1.8 1.2" stroke="#100117"/>
<path d="M3.3 23.5l0.9 -2.0" stroke="#12011a"/>
<path d="M21.2 20.1l-0.9 -0.0" stroke="#100117"/>
<path d="M-23.5 -9.6l1.6 1.0" stroke="#100117"/>
<path d="M-30.6 -9.2l-0.1 -1.4" stroke="#100117"/>
<path d="M11.8 9.5l1.2 0.3" stroke="#310447"/>
<path d="M-23.0 4.9l1.2 -0.4" stroke="#100117"/>
<path d="M-24.1 6.7l2.0 1.6" stroke="#100117"/>
<path d="M24.4 18.8l1.8 0.1" stroke="#12011a"/>
<path d="M-29.9 5.9l0.9 1.7" stroke="#100117"/>
<path d="M-4.7 24.9l1.0 0.1" stroke="#100117"/>
<path d="M-25.0 20.7l-1.4 1.0" stroke="#100117"/>
<path d="M-3.0 -4.5l1.8 -0.2" stroke="#310447"/>
<path d="M-8.3 25.3l-0.2 1.3" stroke="#100117"/>
<path d="M-16.4 -11.4l0.8 -0.7" stroke="#170221"/>
<path d="M17.9 4.3l-0.5 -1.1" stroke="#36054e"/>
<path d="M7.6 -29.9l-1.9 -0.2" stroke="#1a0225"/>
<path d="M-24.6 -2.7l0.2 -1.4" stroke="#100117"/>
<path d="M27.4 -11.7l-1.3 0.7" stroke="#12011a"/>
<path d="M-17.6 1.2l-0.7 1.6" stroke="#16021f"/>
<path d="M-9.0 -2.1l-0.3 1.5" stroke="#220331"/>
<path d="M3.5 15.5l-0.2 1.9" stroke="#180222"/>
<path d="M1.7 19.7l1.3 -1.4" stroke="#14021d"/>
<path d="M5.5 -11.3l1.4 0.0" stroke="#42065f"/>
<path d="M24.6 22.0l1.2 1.4" stroke="#100117"/>
<path d="M27.4 -14.8l1.2 0.7" stroke="#12011a"/>
<path d="M24.3 13.2l1.3 -0.2" stroke="#190224"/>
<path d="M8.5 7.5l-1.3 1.8" stroke="#320548"/>
<path d="M-26.3 15.7l-1.6 0.0" stroke="#100117"/>
<path d="M-19.3 0.6l-0.4 0.1" stroke="#110118"/>
<path d="M-6.0 9.4l0.1 -0.8" stroke="#1e032b"/>
<path d="M10.1 11.3l-0.6 0.6" stroke="#20032e"/>
<path d="M-12.9 19.2l-1.4 1.5" stroke="#100117"/>
<path d="M-12.0 22.8l-1.7 -0.7" stroke="#100117"/>
<path d="M25.5 15.2l-1.7 -1.4" stroke="#1a0225"/>
<path d="M15.7 13.0l-1.5 1.6" stroke="#20032e"/>
<path d="M-9.6 15.7l1.0 -1.1" stroke="#12011a"/>
<path d="M-20.7 0.7l-1.5 1.5" stroke="#100117"/>
<path d="M-21.0 -19.4l-1.7 1.9" stroke="#100117"/>
<path d="M-10.9 18.1l0.7 1.4" stroke="#100117"/>
<path d="M-4.5 5.4l-0.2 2.0" stroke="#1a0225"/>
<path d="M-1.5 6.6l-0.2 0.0" stroke="#230332"/>
<path d="M17.9 -5.2l1.3 -1.5" stroke="#2d0441"/>
<path d="M-25.9 -2.6l0.7 -0.2" stroke="#100117"/>
<path d="M-13.8 17.4l0.1 -0.1" stroke="#100117"/>
<path d="M-9.8 -6.9l1.4 -1.7" stroke="#260337"/>
<path d="M-28.5 -3.0l1.9 -0.3" stroke="#100117"/>
<path d="M6.0 -5.1l-2.0 -1.8" stroke="#3d0658"/>
<path d="M12.9 12.7l0.1 -0.4" stroke="#100117"/>
<path d="M2.4 -22.3l0.2 -1.8" stroke="#1e032b"/>
<path d="M11.1 8.9l1.6 1.9" stroke="#29043b"/>
<path d="M-23.1 1.9l-1.9 0.4" stroke="#100117"/>
<path d="M-6.0 -19.5l0.6 1.1" stroke="#1e032b"/>
<path d="M3.2 24.5l-0.7 -1.2" stroke="#100117"/>
<path d="M0.9 6.0l1.2 -0.2" stroke="#1e032b"/>
<path d="M27.8 -1.2l-1.9 -1.4" stroke="#250335"/>
<path d="M-3.9 29.3l-1.1 1.8" stroke="#100117"/>
<path d="M18.3 27.1l-1.5 -0.5" stroke="#100117"/>
<path d="M-25.9 17.2l-0.6 2.0" stroke="#100117"/>
<path d="M5.6 -0.1l0.3 0.5" stroke="#430661"/>
<path d="M-9.3 13.9l-1.4 -0.6" stroke="#16021f"/>
<path d="M27.1 -0.8l-0.8 0.5" stroke="#1f032c"/>
<path d="M-9.7 -21.9l-0.6 1.8" stroke="#1d022a"/>
<path d="M-13.7 18.3l-1.2 0.1" stroke="#100117"/>
<path d="M9.9 20.7l-0.5 -0.5" stroke="#1a0225"/>
<path d="M5.4 9.8l-1.2 1.5" stroke="#16021f"/>
<path d="M24.6 -3.4l-0.7 1.6" stroke="#2b043e"/>
<path d="M16.6 -19.7l-0.6 -0.8" stroke="#100117"/>
<path d="M-8.4 -15.7l-2.0 -0.6" stroke="#1a0225"/>
<path d="M-8.6 19.9l-1.0 1.7" stroke="#100117"/>
<path d="M8.5 9.7l1.4 -0.2" stroke="#230332"/>
<path d="M1.0 19.4l1.2 -1.5" stroke="#170221"/>
<path d="M-6.9 -0.5l0.9 1.0" stroke="#16021f"/>
<path d="M0.9 -0.3l0.6 1.7" stroke="#270338"/>
<path d="M-17.5 26.9l-0.5 1.2" stroke="#100117"/>
<path d="M4.9 17.6l0.6 1.2" stroke="#16021f"/>
<path d="M15.7 -13.1l-0.3 0.8" stroke="#230332"/>
<path d="M-7.4 23.0l-0.5 1.3" stroke="#100117"/>
<path d="M-1.8 -1.0l-1.5 -0.3" stroke="#1e032b"/>
<path d="M-1.6 -14.1l-0.5 -0.8" stroke="#21032f"/>
<path d="M-14.5 21.0l0.6 0.6" stroke="#100117"/>
<path d="M26.5 -1.9l1.9 -0.1" stroke="#240334"/>
<path d="M-13.5 -8.9l-1.3 -1.3" stroke="#1a0225"/>
<path d="M15.5 3.9l-1.8 1.1" stroke="#3a0554"/>
<path d="M-16.6 0.5l-0.7 1.9" stroke="#15021e"/>
<path d="M9.2 12.9l-1.9 1.4" stroke="#29043b"/>
<path d="M-16.1 -3.8l-0.7 1.3" stroke="#14021d"/>
<path d="M1.6 -28.9l0.3 1.3" stroke="#1b0227"/>
<path d="M1.2 -23.1l-0.7 1.7" stroke="#240334"/>
<path d="M4.3 -29.6l0.2 -1.2" stroke="#190224"/>
<path d="M-7.2 30.7l-0.8 -1.8" stroke="#100117"/>
<path d="M-13.4 22.3l1.3 -0.1" stroke="#100117"/>
<path d="M16.8 5.8l-0.5 1.4" stroke="#220331"/>
<path d="M10.5 29.5l1.7 -0.0" stroke="#100117"/>
<path d="M24.0 -14.2l0.2 -2.0" stroke="#28043a"/>
<path d="M4.7 18.4l-1.9 -0.1" stroke="#12011a"/>
<path d="M15.8 -21.5l1.0 0.4" stroke="#110118"/>
<path d="M-0.1 -31.6l-0.8 -1.8" stroke="#14021d"/>
<path d="M-21.0 -13.1l1.4 -1.9" stroke="#100117"/>
<path d="M-30.2 3.8l2.0 -1.9" stroke="#100117"/>
<path d="M12.7 11.3l1.2 -1.8" stroke="#12011a"/>
<path d="M-23.2 4.0l0.6 -0.4" stroke="#100117"/>
<path d="M13.3 -22.9l-1.1 -0.4" stroke="#1b0227"/>
<path d="M28.8 -5.5l1.6 -1.4" stroke="#15021e"/>
<path d="M-6.9 -6.0l-0.0 -1.3" stroke="#180222"/>
<path d="M7.2 -30.6l1.3 -0.6" stroke="#250335"/>
<path d="M-11.0 5.4l1.3 1.7" stroke="#1d022a"/>
<path d="M-21.0 24.2l-0.9 1.6" stroke="#100117"/>
<path d="M4.5 24.6l-1.1 -1.4" stroke="#12011a"/>
<path d="M-14.9 -21.2l2.0 0.2" stroke="#15021e"/>
<path d="M1.1 -23.3l-1.2 -0.1" stroke="#240334"/>
<path d="M-17.1 12.4l0.3 -1.6" stroke="#100117"/>
<path d="M-10.5 13.1l1.3 -0.1" stroke="#12011a"/>
<path d="M-24.0 19.5l-1.9 0.5" stroke="#100117"/>
<path d="M-3.1 -25.9l0.1 0.6" stroke="#240334"/>
<path d="M1.5 -28.4l-2.0 -0.1" stroke="#1b0227"/>
<path d="M0.4 -26.6l-0.6 -0.8" stroke="#1e032b"/>
<path d="M11.7 18.1l0.4 -1.5" stroke="#14021d"/>
<path d="M2.9 -13.7l0.9 -0.3" stroke="#390552"/>
<path d="M-2.5 17.1l0.3 0.8" stroke="#1a0225"/>
<path d="M-16.7 10.0l-0.0 -0.1" stroke="#100117"/>
<path d="M-15.8 -4.0l1.4 -1.8" stroke="#110118"/>
<path d="M18.5 10.4l0.8 0.4" stroke="#20032e"/>
<path d="M25.9 13.3l-1.9 -1.2" stroke="#1c0228"/>
<path d="M13.8 -29.0l-1.1 -1.5" stroke="#240334"/>
<path d="M22.4 -16.2l-0.1 -2.0" stroke="#1b0227"/>
<path d="M-4.1 -25.0l-1.8 0.8" stroke="#1f032c"/>
<path d="M-6.8 25.3l-1.8 -1.8" stroke="#100117"/>
<path d="M-15.0 -13.7l-0.5 1.4" stroke="#1b0227"/>
<path d="M-9.2 -24.9l1.9 -0.0" stroke="#190224"/>
<path d="M-16.4 15.3l0.3 -0.9" stroke="#100117"/>
<path d="M-26.4 6.4l-1.1 1.6" stroke="#100117"/>
<path d="M20.4 -5.0l-0.0 1.1" stroke="#20032e"/>
<path d="M-14.7 23.1l-1.6 -0.6" stroke="#100117"/>
<path d="M13.5 -6.8l-0.0 -1.1" stroke="#1d022a"/>
<path d="M21.5 -23.5l-1.0 0.9" stroke="#240334"/>
<path d="M-12.3 -7.8l-0.8 -0.3" stroke="#260337"/>
<path d="M20.0 20.2l1.5 -0.1" stroke="#13011b"/>
<path d="M-8.7 29.8l-0.7 0.3" stroke="#100117"/>
<path d="M-18.6 -3.8l-1.0 0.7" stroke="#110118"/>
<path d="M-7.1 -12.5l-1.6 -0.1" stroke="#2c043f"/>
<path d="M-7.7 -30.7l-1.5 1.5" stroke="#180222"/>
<path d="M16.4 -17.6l-1.8 0.7" stroke="#190224"/>
<path d="M-0.1 8.5l-1.8 0.2" stroke="#15021e"/>
<path d="M16.2 -22.5l0.4 0.0" stroke="#34054b"/>
<path d="M25.1 -2.4l0.6 -0.4" stroke="#270338"/>
<path d="M16.0 -14.2l1.5 0.3" stroke="#37054f"/>
<path d="M2.2 27.2l-1.6 -2.0" stroke="#100117"/>
<path d="M11.4 16.9l-1.2 0.4" stroke="#1d022a"/>
<path d="M-15.5 -12.7l0.8 -0.3" stroke="#12011a"/>
<path d="M24.1 17.3l-1.8 0.7" stroke="#170221"/>
<path d="M-29.0 -11.3l0.8 -0.7" stroke="#100117"/>
<path d="M16.8 -17.1l1.9 1.2" stroke="#1e032b"/>
<path d="M-9.2 -2.6l-0.3 -0.7" stroke="#14021d"/>
<path d="M1.1 15.9l-0.1 1.4" stroke="#1d022a"/>
<path d="M5.5 27.5l1.2 -1.1" stroke="#100117"/>
<path d="M-11.6 22.0l0.4 1.5" stroke="#100117"/>
<path d="M3.1 -15.0l-1.0 -0.7" stroke="#250335"/>
<path d="M4.4 20.4l0.2 0.3" stroke="#180222"/>
<path d="M13.5 -1.2l-1.2 0.5" stroke="#28043a"/>
<path d="M6.3 -16.7l1.0 -1.8" stroke="#1f032c"/>
<path d="M-18.6 -16.0l-1.0 -0.1" stroke="#100117"/>
<path d="M5.8 21.5l1.4 1.1" stroke="#190224"/>
<path d="M-29.0 0.2l0.8 1.1" stroke="#100117"/>
<path d="M1.8 -21.6l1.1 -0.7" stroke="#2f0444"/>
<path d="M-16.4 17.1l2.0 0.1" stroke="#100117"/>
<path d="M13.2 25.7l-0.3 -1.0" stroke="#100117"/>
<path d="M3.4 0.4l1.5 -1.0" stroke="#1c0228"/>
<path d="M29.2 6.9l0.4 -0.3" stroke="#1b0227"/>
<path d="M17.9 -10.2l1.1 1.9" stroke="#300445"/>
<path d="M-18.4 16.5l1.9 1.8" stroke="#100117"/>
<path d="M-14.3 23.6l1.8 -1.7" stroke="#100117"/>
<path d="M-0.4 -10.4l1.6 0.5" stroke="#3e0659"/>
<path d="M-11.1 -2.0l0.4 -0.6" stroke="#1d022a"/>
<path d="M-27.8 -5.6l1.7 0.5" stroke="#100117"/>
<path d="M13.5 -5.6l-1.7 1.1" stroke="#3f065b"/>
<path d="M10.0 7.7l1.4 -0.8" stroke="#2a043c"/>
<path d="M-8.0 32.5l0.1 -0.6" stroke="#100117"/>
<path d="M-9.1 32.2l-0.0 1.4" stroke="#100117"/>
<path d="M-3.7 -1.0l-0.9 -0.9" stroke="#21032f"/>
<path d="M24.9 -13.7l1.8 0.9" stroke="#2a043c"/>
<path d="M-8.1 28.9l1.2 -0.0" stroke="#100117"/>
<path d="M-27.9 0.0l0.9 0.9" stroke="#100117"/>
<path d="M-1.8 23.6l0.2 1.7" stroke="#100117"/>
<path d="M15.0 13.3l0.3 -1.7" stroke="#12011a"/>
<path d="M-8.1 9.2l-0.4 -1.7" stroke="#1f032c"/>
<path d="M1.6 -34.0l0.2 -1.2" stroke="#1b0227"/>
<path d="M-3.2 -1.9l-1.7 -0.9" stroke="#2e0442"/>
<path d="M-11.6 24.5l-2.0 -0.1" stroke="#100117"/>
<path d="M-27.8 -11.1l-0.9 0.6" stroke="#100117"/>
<path d="M18.4 11.0l-0.7 -1.6" stroke="#240334"/>
<path d="M23.8 -16.6l0.5 0.1" stroke="#270338"/>
<path d="M0.2 31.2l-0.5 -0.1" stroke="#100117"/>
<path d="M10.8 -7.8l0.9 0.9" stroke="#270338"/>
<path d="M-15.2 25.6l0.0 1.6" stroke="#100117"/>
<path d="M17.9 18.7l1.3 1.8" stroke="#15021e"/>
<path d="M18.0 22.5l0.0 1.8" stroke="#14021d"/>
<path d="M6.9 -34.1l-1.7 1.0" stroke="#1b0227"/>
<path d="M-18.1 -1.6l-1.5 -1.9" stroke="#15021e"/>
<path d="M-9.6 -18.6l1.0 1.4" stroke="#1e032b"/>
<path d="M3.8 27.4l-0.7 -1.4" stroke="#100117"/>
<path d="M3.3 30.2l-0.5 -1.9" stroke="#100117"/>
<path d="M24.0 17.9l-0.8 1.6" stroke="#15021e"/>
<path d="M22.8 10.7l-1.8 2.0" stroke="#240334"/>
<path d="M8.1 -17.5l-0.4 0.7" stroke="#14021d"/>
<path d="M1.2 -29.1l-1.1 1.3" stroke="#21032f"/>
<path d="M3.5 23.7l0.7 1.8" stroke="#12011a"/>
<path d="M-11.4 1.3l0.5 0.0" stroke="#1a0225"/>
<path d="M-4.5 1.0l-1.8 0.2" stroke="#1a0225"/>
<path d="M-19.7 22.9l0.3 -1.6" stroke="#100117"/>
<path d="M20.6 10.9l1.8 -0.8" stroke="#14021d"/>
<path d="M24.7 1.6l1.5 -0.4" stroke="#14021d"/>
<path d="M20.2 2.3l1.6 -1.6" stroke="#16021f"/>
<path d="M3.5 28.2l-2.0 0.4" stroke="#100117"/>
<path d="M-2.4 13.9l-0.3 -0.3" stroke="#100117"/>
<path d="M-16.5 3.5l-1.5 1.7" stroke="#14021d"/>
<path d="M-26.7 -9.0l-0.2 -1.7" stroke="#100117"/>
<path d="M7.5 -13.2l-0.0 -0.8" stroke="#230332"/>
</g></g>
<path d="M963 359.4 L978 358 L1010.3 330.4 L1007 310.6 Q1032 306 1039 348.75 Q1039 372 1025.6 379 Q1010 392 998 389.5 Q975 388 967.5 378.8 Q960 370 963 359.4 Z" fill="#0e0312"/>
<g stroke="#0e0312" stroke-width="1.2" stroke-linecap="round">
<path d="M1015.5 314.9l1.2 -3.0"/>
<path d="M994.0 385.0l-0.6 2.6"/>
<path d="M1026.6 322.7l3.1 -3.2"/>
<path d="M983.8 380.6l-1.2 1.9"/>
<path d="M1015.9 315.1l2.0 -4.5"/>
<path d="M998.3 385.8l-0.2 2.0"/>
<path d="M1007.0 385.6l0.4 3.1"/>
<path d="M1005.7 385.8l0.3 2.5"/>
<path d="M1035.6 359.5l4.6 1.4"/>
<path d="M1034.1 363.7l2.2 0.9"/>
<path d="M1019.1 316.7l1.0 -1.8"/>
<path d="M969.2 361.9l-3.9 1.5"/>
<path d="M1009.3 385.2l0.9 4.4"/>
<path d="M1031.8 368.4l3.9 2.4"/>
<path d="M1027.9 324.1l1.7 -1.5"/>
<path d="M1017.1 315.6l1.5 -3.2"/>
<path d="M1026.4 375.5l1.4 1.4"/>
<path d="M969.5 362.8l-3.0 1.2"/>
<path d="M1036.7 353.7l2.6 0.3"/>
<path d="M975.8 373.6l-2.7 2.4"/>
<path d="M969.8 363.5l-3.7 1.6"/>
<path d="M1009.5 385.1l0.7 3.0"/>
<path d="M1024.1 320.3l2.5 -3.0"/>
<path d="M1036.9 352.2l3.2 0.3"/>
<path d="M968.8 360.6l-3.8 1.3"/>
<path d="M1030.6 327.6l2.2 -1.6"/>
<path d="M1036.8 353.3l4.4 0.5"/>
<path d="M1015.3 314.8l1.1 -2.6"/>
<path d="M1020.8 317.8l2.5 -3.9"/>
<path d="M975.1 372.6l-2.7 2.3"/>
<path d="M1033.2 365.9l3.1 1.6"/>
<path d="M1020.7 317.7l2.3 -3.7"/>
<path d="M1031.1 369.6l3.8 2.5"/>
<path d="M968.9 360.9l-4.4 1.5"/>
<path d="M1024.8 320.9l2.6 -3.1"/>
<path d="M1024.9 377.0l2.7 3.1"/>
<path d="M1036.8 345.5l3.2 -0.3"/>
<path d="M1024.2 377.6l2.6 3.1"/>
<path d="M1012.8 384.2l1.3 4.0"/>
<path d="M968.6 360.0l-3.6 1.1"/>
<path d="M978.7 376.6l-1.8 2.0"/>
<path d="M974.0 371.2l-2.1 1.6"/>
<path d="M968.9 361.0l-3.9 1.3"/>
<path d="M997.9 385.7l-0.3 2.8"/>
<path d="M970.7 365.6l-2.4 1.2"/>
<path d="M1023.3 319.7l1.5 -2.0"/>
<path d="M1035.2 360.9l2.0 0.7"/>
<path d="M1022.4 379.1l1.8 2.5"/>
<path d="M1031.1 369.5l3.6 2.4"/>
<path d="M974.9 372.4l-2.9 2.4"/>
<path d="M1010.2 385.0l0.6 2.5"/>
<path d="M1029.1 372.4l3.3 2.7"/>
<path d="M986.1 382.0l-1.9 3.8"/>
<path d="M994.2 385.1l-1.0 4.5"/>
<path d="M1022.1 318.7l2.6 -3.7"/>
<path d="M969.8 363.4l-4.2 1.8"/>
<path d="M979.5 377.4l-1.6 1.9"/>
<path d="M978.7 376.6l-2.6 2.9"/>
<path d="M989.0 383.3l-1.4 3.4"/>
<path d="M1020.0 380.7l1.9 3.2"/>
<path d="M1032.5 367.2l2.1 1.2"/>
<path d="M1029.2 325.8l3.9 -3.1"/>
<path d="M1021.2 318.0l1.9 -3.0"/>
<path d="M1034.8 362.0l3.2 1.2"/>
<path d="M978.4 376.3l-1.9 2.1"/>
<path d="M971.2 366.5l-3.8 2.0"/>
<path d="M974.6 372.1l-1.8 1.4"/>
<path d="M1033.4 332.6l3.4 -1.7"/>
<path d="M1027.7 323.8l2.5 -2.3"/>
<path d="M1004.4 385.9l0.2 2.6"/>
<path d="M1035.9 339.6l4.6 -1.2"/>
<path d="M1027.3 374.6l1.7 1.7"/>
<path d="M1018.6 381.6l2.2 4.0"/>
<path d="M1014.8 383.4l1.3 3.3"/>
<path d="M972.6 369.0l-3.8 2.4"/>
<path d="M1030.4 370.6l2.6 1.9"/>
<path d="M1033.4 332.6l2.9 -1.4"/>
<path d="M1007.5 385.5l0.6 3.6"/>
<path d="M1020.9 317.9l1.6 -2.4"/>
<path d="M970.8 365.7l-2.0 1.0"/>
<path d="M1037.0 349.9l4.6 0.1"/>
<path d="M1013.2 384.0l0.9 2.7"/>
<path d="M1036.9 345.9l2.9 -0.2"/>
<path d="M973.2 370.0l-3.1 2.2"/>
<path d="M1037.0 350.7l4.7 0.2"/>
<path d="M986.2 382.0l-2.2 4.3"/>
<path d="M1034.8 336.1l2.5 -0.9"/>
<path d="M1009.3 385.2l0.5 2.5"/>
<path d="M1024.1 377.7l2.7 3.4"/>
<path d="M1036.0 357.9l4.4 1.1"/>
<path d="M1035.3 360.3l2.5 0.8"/>
<path d="M1022.0 379.4l2.4 3.5"/>
<path d="M1023.2 319.6l3.0 -3.9"/>
<path d="M976.8 374.7l-2.2 2.2"/>
<path d="M1009.3 385.2l0.5 2.5"/>
<path d="M969.9 363.8l-1.9 0.8"/>
<path d="M1029.1 372.4l2.4 2.0"/>
<path d="M973.2 370.1l-2.9 2.0"/>
<path d="M1032.2 367.7l3.0 1.8"/>
<path d="M1019.7 317.1l2.0 -3.4"/>
<path d="M1036.9 351.7l4.2 0.3"/>
<path d="M990.6 384.0l-0.9 2.7"/>
<path d="M968.8 360.6l-4.3 1.4"/>
<path d="M1004.0 385.9l0.3 4.5"/>
<path d="M1011.4 384.6l0.7 2.4"/>
<path d="M1013.9 383.8l1.2 3.3"/>
<path d="M1036.9 346.6l4.9 -0.3"/>
<path d="M1020.6 317.7l2.4 -3.8"/>
<path d="M1034.3 363.3l2.6 1.1"/>
<path d="M1022.9 319.3l1.2 -1.6"/>
<path d="M1015.3 383.2l1.2 2.9"/>
<path d="M1036.6 354.2l2.6 0.4"/>
<path d="M1004.2 385.9l0.3 4.1"/>
<path d="M1013.7 383.9l1.1 3.2"/>
<path d="M1030.9 328.1l1.8 -1.2"/>
<path d="M1035.6 359.3l4.5 1.3"/>
<path d="M1036.8 353.3l2.1 0.2"/>
<path d="M1019.3 381.2l1.9 3.3"/>
<path d="M1035.8 358.5l3.5 0.9"/>
<path d="M1034.8 361.8l2.3 0.9"/>
<path d="M973.2 370.0l-2.4 1.7"/>
<path d="M1036.9 346.7l3.7 -0.2"/>
<path d="M970.6 365.3l-2.0 1.0"/>
<path d="M970.7 365.5l-3.1 1.5"/>
<path d="M1011.9 384.5l1.0 3.4"/>
<path d="M1028.4 373.3l1.5 1.3"/>
<path d="M980.2 377.9l-2.5 3.1"/>
<path d="M985.9 381.8l-1.0 1.9"/>
<path d="M1025.7 321.8l2.5 -2.7"/>
<path d="M1015.8 315.0l0.9 -2.1"/>
<path d="M978.3 376.2l-3.4 3.7"/>
<path d="M981.2 378.7l-1.3 1.7"/>
<path d="M969.9 363.8l-4.1 1.8"/>
<path d="M1030.6 327.7l2.2 -1.6"/>
<path d="M1014.8 383.4l0.8 2.0"/>
<path d="M1026.6 322.7l2.0 -2.0"/>
<path d="M1036.5 342.7l2.9 -0.5"/>
<path d="M988.1 382.9l-1.2 2.7"/>
<path d="M1004.3 385.9l0.2 3.6"/>
<path d="M987.5 382.7l-1.5 3.2"/>
<path d="M1009.1 385.2l0.8 3.8"/>
<path d="M1036.3 341.7l2.2 -0.4"/>
<path d="M1023.3 319.6l1.6 -2.0"/>
<path d="M1015.4 314.8l1.9 -4.5"/>
<path d="M973.8 370.9l-1.9 1.4"/>
<path d="M979.0 376.9l-1.8 2.1"/>
<path d="M1036.9 351.9l3.5 0.3"/>
<path d="M1032.6 367.0l2.1 1.2"/>
<path d="M976.6 374.5l-2.1 2.0"/>
<path d="M1016.5 382.7l1.8 4.0"/>
<path d="M971.3 366.7l-4.1 2.2"/>
<path d="M1021.3 318.1l1.8 -2.7"/>
<path d="M1025.8 321.9l1.9 -2.1"/>
<path d="M1036.0 357.6l3.3 0.8"/>
<path d="M1035.4 360.1l3.2 1.0"/>
<path d="M1031.9 329.8l4.2 -2.5"/>
<path d="M1031.0 328.3l1.7 -1.1"/>
<path d="M1009.1 385.2l0.6 3.0"/>
<path d="M1028.0 373.7l1.9 1.7"/>
<path d="M1024.4 377.4l2.3 2.7"/>
<path d="M987.5 382.7l-1.8 4.0"/>
<path d="M1037.0 348.4l4.7 -0.1"/>
<path d="M1033.8 333.5l3.1 -1.5"/>
<path d="M1031.8 329.6l2.3 -1.4"/>
<path d="M1021.9 318.6l1.8 -2.6"/>
<path d="M981.7 379.2l-1.7 2.4"/>
<path d="M1034.2 363.5l4.2 1.8"/>
<path d="M977.9 375.8l-1.5 1.5"/>
<path d="M989.2 383.4l-1.1 2.8"/>
<path d="M984.4 381.0l-1.1 1.8"/>
</g>
<clipPath id="rcclip"><path d="M963 359.4 L978 358 L1010.3 330.4 L1007 310.6 Q1032 306 1039 348.75 Q1039 372 1025.6 379 Q1010 392 998 389.5 Q975 388 967.5 378.8 Q960 370 963 359.4 Z"/></clipPath>
<g clip-path="url(#rcclip)" stroke-linecap="round" stroke-width="1.1">
<path d="M1021.6 343.1l0.9 0.4" stroke="#170221"/>
<path d="M1023.4 310.0l0.7 -0.4" stroke="#170221"/>
<path d="M1015.7 373.0l0.9 -0.5" stroke="#100117"/>
<path d="M995.3 317.6l0.7 1.9" stroke="#1a0225"/>
<path d="M1006.4 369.1l1.9 0.6" stroke="#15021e"/>
<path d="M967.9 383.4l1.4 -0.9" stroke="#0e0114"/>
<path d="M1014.1 379.1l0.8 -0.7" stroke="#15021e"/>
<path d="M991.7 333.2l0.6 -0.5" stroke="#100117"/>
<path d="M1036.4 374.9l-0.3 -0.3" stroke="#0f0115"/>
<path d="M1010.4 335.1l-1.3 -2.0" stroke="#12011a"/>
<path d="M990.4 325.0l-1.2 0.1" stroke="#15021e"/>
<path d="M992.6 351.3l1.9 -0.8" stroke="#1b0227"/>
<path d="M988.2 364.4l-1.9 -1.9" stroke="#16021f"/>
<path d="M1003.7 367.6l0.0 -0.2" stroke="#20032e"/>
<path d="M989.9 317.7l1.9 1.7" stroke="#1a0225"/>
<path d="M1019.8 383.9l0.9 -1.6" stroke="#0e0114"/>
<path d="M974.2 329.3l0.1 0.1" stroke="#0e0114"/>
<path d="M1013.5 360.1l1.2 0.4" stroke="#13011b"/>
<path d="M999.1 360.5l-1.6 -1.3" stroke="#230332"/>
<path d="M1017.8 351.9l1.3 -0.2" stroke="#1d022a"/>
<path d="M996.4 334.2l1.1 0.8" stroke="#16021f"/>
<path d="M999.2 356.3l0.8 -1.7" stroke="#180222"/>
<path d="M1038.8 310.1l0.2 1.0" stroke="#0f0115"/>
<path d="M997.7 352.3l-0.6 -0.1" stroke="#170221"/>
<path d="M1025.7 328.2l1.4 0.5" stroke="#12011a"/>
<path d="M1022.7 327.8l-1.8 1.7" stroke="#1a0225"/>
<path d="M973.0 379.9l0.9 -1.2" stroke="#1d022a"/>
<path d="M1025.7 326.9l1.1 -1.0" stroke="#1a0225"/>
<path d="M1022.4 380.6l-0.5 1.5" stroke="#1f032c"/>
<path d="M976.1 322.6l1.2 -1.0" stroke="#170221"/>
<path d="M985.2 380.4l-1.0 0.2" stroke="#12011a"/>
<path d="M991.1 374.7l-0.7 -1.2" stroke="#180222"/>
<path d="M1011.0 317.0l-0.6 -0.1" stroke="#13011b"/>
<path d="M986.5 358.5l0.6 -1.2" stroke="#21032f"/>
<path d="M1025.4 309.5l-1.5 1.7" stroke="#190224"/>
<path d="M984.2 380.7l-1.6 0.6" stroke="#1b0227"/>
<path d="M963.0 360.3l0.6 -1.3" stroke="#13011b"/>
<path d="M1038.3 360.8l0.6 1.9" stroke="#1b0227"/>
<path d="M978.7 336.8l-0.6 -1.5" stroke="#14021d"/>
<path d="M1009.6 386.5l-1.2 -1.1" stroke="#110118"/>
<path d="M979.8 350.7l-0.7 0.9" stroke="#12011a"/>
<path d="M986.2 366.2l0.4 1.0" stroke="#13011b"/>
<path d="M996.9 367.8l0.6 -0.6" stroke="#1d022a"/>
<path d="M1004.6 333.3l-1.7 1.1" stroke="#0f0115"/>
<path d="M988.5 337.6l-1.9 1.1" stroke="#15021e"/>
<path d="M1031.2 381.8l-1.4 -1.6" stroke="#180222"/>
<path d="M1004.2 342.7l-1.9 0.1" stroke="#13011b"/>
<path d="M990.9 335.4l-0.6 -1.5" stroke="#20032e"/>
<path d="M1029.4 382.0l1.0 -0.5" stroke="#110118"/>
<path d="M1038.4 339.7l0.3 0.0" stroke="#14021d"/>
<path d="M965.5 336.9l1.2 0.7" stroke="#230332"/>
<path d="M987.0 344.0l-1.3 0.7" stroke="#1f032c"/>
<path d="M1040.7 332.0l0.2 1.4" stroke="#1d022a"/>
<path d="M989.9 353.1l0.5 1.4" stroke="#1d022a"/>
<path d="M981.0 312.8l-1.8 -0.5" stroke="#1d022a"/>
<path d="M971.0 349.8l-1.0 1.3" stroke="#16021f"/>
<path d="M971.9 369.3l-0.4 -0.6" stroke="#1e032b"/>
<path d="M998.1 372.5l-0.1 -0.9" stroke="#1a0225"/>
<path d="M975.4 359.2l0.9 -1.2" stroke="#190224"/>
<path d="M1008.8 375.3l0.3 0.3" stroke="#1c0228"/>
<path d="M1036.4 336.9l0.8 1.5" stroke="#16021f"/>
<path d="M992.4 316.7l1.6 -1.6" stroke="#1f032c"/>
<path d="M987.3 357.2l0.3 -1.4" stroke="#1c0228"/>
<path d="M1004.1 388.3l-0.5 2.0" stroke="#110118"/>
<path d="M968.5 381.0l1.3 -0.8" stroke="#15021e"/>
<path d="M992.6 341.0l0.6 0.8" stroke="#16021f"/>
<path d="M963.1 361.9l0.2 -1.5" stroke="#110118"/>
<path d="M1010.5 311.5l-0.9 -0.2" stroke="#220331"/>
<path d="M968.7 306.7l-1.4 0.8" stroke="#110118"/>
<path d="M979.3 310.5l-0.2 0.4" stroke="#1f032c"/>
<path d="M999.1 366.1l0.2 0.1" stroke="#21032f"/>
<path d="M1017.0 309.3l0.1 -1.6" stroke="#21032f"/>
<path d="M1037.2 309.9l-1.4 0.5" stroke="#16021f"/>
<path d="M997.7 358.2l-0.9 -0.8" stroke="#220331"/>
<path d="M975.1 362.8l-2.0 -1.3" stroke="#12011a"/>
<path d="M979.5 311.6l-0.9 -2.0" stroke="#20032e"/>
<path d="M1016.6 344.1l-0.1 -1.6" stroke="#13011b"/>
<path d="M971.5 316.6l0.8 -1.3" stroke="#1e032b"/>
<path d="M1036.2 319.6l-1.8 1.0" stroke="#230332"/>
<path d="M1013.2 345.5l-0.4 -0.1" stroke="#15021e"/>
<path d="M974.6 372.2l-0.6 0.8" stroke="#16021f"/>
<path d="M1027.5 318.6l1.7 0.7" stroke="#170221"/>
<path d="M967.4 354.1l0.3 -2.0" stroke="#100117"/>
<path d="M1040.9 308.8l0.3 -0.7" stroke="#15021e"/>
<path d="M966.8 310.4l-0.2 -1.0" stroke="#1a0225"/>
<path d="M1040.0 383.2l-0.6 -1.9" stroke="#1d022a"/>
<path d="M1030.7 346.9l1.0 2.0" stroke="#190224"/>
<path d="M981.5 331.0l-1.9 1.1" stroke="#20032e"/>
<path d="M1026.9 370.6l-1.7 -0.1" stroke="#190224"/>
<path d="M1008.2 341.0l1.3 0.1" stroke="#13011b"/>
<path d="M1015.2 387.9l-1.9 1.3" stroke="#14021d"/>
<path d="M999.5 308.1l1.7 1.8" stroke="#16021f"/>
<path d="M1008.3 382.4l-0.9 0.4" stroke="#0e0114"/>
<path d="M971.0 336.6l1.4 0.9" stroke="#16021f"/>
<path d="M985.2 321.1l-0.7 -1.9" stroke="#1a0225"/>
<path d="M962.9 353.5l-0.6 -0.6" stroke="#1c0228"/>
<path d="M1040.3 363.4l1.7 -0.6" stroke="#230332"/>
<path d="M972.1 342.3l1.0 0.8" stroke="#13011b"/>
<path d="M985.7 388.7l1.4 -0.5" stroke="#190224"/>
<path d="M969.0 358.0l-1.1 -0.6" stroke="#15021e"/>
<path d="M1001.3 363.2l-0.2 -1.7" stroke="#220331"/>
<path d="M966.7 369.5l-0.9 1.8" stroke="#20032e"/>
<path d="M991.6 389.4l-1.6 0.8" stroke="#1d022a"/>
<path d="M984.4 381.6l1.5 1.8" stroke="#180222"/>
<path d="M970.2 334.0l0.3 1.7" stroke="#110118"/>
<path d="M966.2 326.6l-1.6 -0.1" stroke="#1d022a"/>
<path d="M1001.0 382.3l-0.1 1.0" stroke="#100117"/>
<path d="M1040.4 317.1l1.0 -0.8" stroke="#1b0227"/>
<path d="M988.5 344.1l0.1 0.1" stroke="#230332"/>
<path d="M1019.3 326.7l-0.4 -0.0" stroke="#12011a"/>
<path d="M1005.8 317.1l0.2 1.6" stroke="#1d022a"/>
<path d="M978.0 333.7l-0.8 0.5" stroke="#180222"/>
<path d="M1041.7 323.3l0.1 0.5" stroke="#1e032b"/>
<path d="M991.8 384.2l-1.1 -0.9" stroke="#1b0227"/>
<path d="M1034.0 355.8l0.2 -0.6" stroke="#230332"/>
<path d="M993.5 311.0l-0.3 -0.7" stroke="#15021e"/>
<path d="M1030.7 374.5l-2.0 1.4" stroke="#15021e"/>
<path d="M1006.9 385.2l1.1 -0.1" stroke="#220331"/>
<path d="M1030.0 307.6l-1.6 1.4" stroke="#21032f"/>
<path d="M1029.7 330.4l0.1 -1.0" stroke="#170221"/>
<path d="M1004.4 309.9l0.8 1.4" stroke="#110118"/>
<path d="M1031.0 312.4l-1.1 -0.0" stroke="#1a0225"/>
<path d="M1000.2 387.8l0.2 1.7" stroke="#170221"/>
<path d="M1000.5 326.2l1.1 -0.5" stroke="#14021d"/>
<path d="M1033.6 352.8l1.7 1.7" stroke="#16021f"/>
<path d="M1039.6 318.2l-1.4 -0.0" stroke="#100117"/>
<path d="M1010.3 378.7l1.7 -1.9" stroke="#12011a"/>
<path d="M962.8 366.4l1.2 1.7" stroke="#16021f"/>
<path d="M985.4 359.6l-1.6 0.4" stroke="#1a0225"/>
<path d="M1025.4 311.3l-1.9 -0.8" stroke="#170221"/>
<path d="M975.9 341.2l0.7 0.9" stroke="#1c0228"/>
<path d="M1034.7 369.7l-1.9 0.8" stroke="#1b0227"/>
<path d="M994.2 319.8l-1.7 1.0" stroke="#1e032b"/>
<path d="M1011.1 358.8l-1.1 -1.6" stroke="#20032e"/>
<path d="M1038.9 308.8l-0.7 1.7" stroke="#230332"/>
<path d="M1005.6 328.1l0.6 -1.1" stroke="#20032e"/>
<path d="M965.7 355.0l-0.7 1.3" stroke="#110118"/>
<path d="M971.5 347.4l0.2 0.8" stroke="#220331"/>
<path d="M1027.5 382.2l-0.5 1.7" stroke="#1a0225"/>
<path d="M988.0 320.2l-0.1 -1.5" stroke="#1d022a"/>
<path d="M1009.5 373.2l1.7 0.5" stroke="#220331"/>
<path d="M987.9 345.3l0.1 -1.2" stroke="#14021d"/>
<path d="M1021.5 341.2l1.3 -1.7" stroke="#16021f"/>
<path d="M978.1 356.4l-1.7 1.8" stroke="#190224"/>
<path d="M1011.6 391.9l1.6 -1.2" stroke="#15021e"/>
<path d="M968.5 383.2l-1.3 -0.6" stroke="#220331"/>
<path d="M1006.1 344.6l0.6 0.7" stroke="#230332"/>
<path d="M1024.0 357.2l1.4 -1.9" stroke="#16021f"/>
<path d="M974.2 362.4l-1.4 1.6" stroke="#1d022a"/>
<path d="M964.4 319.9l1.5 0.4" stroke="#170221"/>
</g>
<g stroke="#1cae1c" stroke-width="1.2" stroke-dasharray="2.5 2" fill="none">
<line x1="695.7" y1="276.0" x2="703.0" y2="296.0"/>
<line x1="669.0" y1="304.0" x2="679.0" y2="335.0"/>
<line x1="735.0" y1="250.0" x2="742.0" y2="345.0"/>
<line x1="883.0" y1="250.0" x2="878.0" y2="340.0"/>
<line x1="919.0" y1="272.0" x2="905.0" y2="330.0"/>
<line x1="686.8" y1="309.0" x2="692.0" y2="330.0"/>
</g>
<circle cx="813.4" cy="113.2" r="2.5" fill="#19d619"/>
<circle cx="908.0" cy="176.4" r="2.4" fill="#19d619"/>
<circle cx="754.8" cy="727.8" r="2.6" fill="#19d619"/>
<circle cx="756.0" cy="734.0" r="2.6" fill="#19d619"/>
<circle cx="873.0" cy="726.0" r="2.6" fill="#19d619"/>
<circle cx="868.0" cy="733.0" r="2.6" fill="#19d619"/>
<g stroke-width="1.4"><line x1="471.4" y1="728.5" x2="471.4" y2="706" stroke="#3434ff"/><circle cx="471.4" cy="706" r="1.2" fill="#3434ff"/><line x1="450" y1="728.5" x2="471.4" y2="728.5" stroke="#ff2a2a"/><circle cx="450.2" cy="728.5" r="1.2" fill="#ff2a2a"/><path d="M466.5 728.5 L471.4 728.2 L467 729.9 Z" stroke="#22e022" stroke-width="1.2" fill="#22e022"/></g>
</svg>
</div>
<div class="a" style="left:1.00px;top:767.00px;width:1198.00px;height:1.00px;background:#333333;"></div>
<div class="a" style="left:1.00px;top:768.00px;width:1198.00px;height:16.00px;background:#3a3a3a;"></div>
<div class="t" style="left:745.00px;top:772.77px;font-size:8.30px;line-height:8.30px;color:#e6e6e6;transform:scaleX(1.0305);">D:/Projects/Argonia - The Black Marshes/WIP/clothes/meshes/blackmarsh/clothes/upperclass/m/UC02MSuit.nif</div>
<svg style="left:0;top:0" width="1200" height="785">
<rect x="1176" y="772" width="9.5" height="7.5" fill="#f2dcbc" stroke="#e2b070" stroke-width="0.6"/>
<path d="M1174.5 776 L1182 776 L1184 780 L1176 780 Z" fill="#e6b46a"/>
<path d="M1178 774.5 Q1175 774 1176 771.5 Q1177 770 1180 770.5" fill="none" stroke="#3a8ca2" stroke-width="1.5"/>
<g fill="#8a8a8a"><rect x="1196" y="778" width="1" height="1"/><rect x="1194" y="780" width="1" height="1"/><rect x="1196" y="780" width="1" height="1"/><rect x="1192" y="782" width="1" height="1"/><rect x="1194" y="782" width="1" height="1"/><rect x="1196" y="782" width="1" height="1"/></g>
</svg>
<div class="a" style="left:0.00px;top:0.00px;width:1200.00px;height:1.00px;background:#8a8a8a;"></div>
<div class="a" style="left:0.00px;top:0.00px;width:1.00px;height:785.00px;background:#7a7a7a;"></div>
<div class="a" style="left:1199.00px;top:0.00px;width:1.00px;height:785.00px;background:#7a7a7a;"></div>
<div class="a" style="left:0.00px;top:784.00px;width:1200.00px;height:1.00px;background:#7a7a7a;"></div>
</body></html>
